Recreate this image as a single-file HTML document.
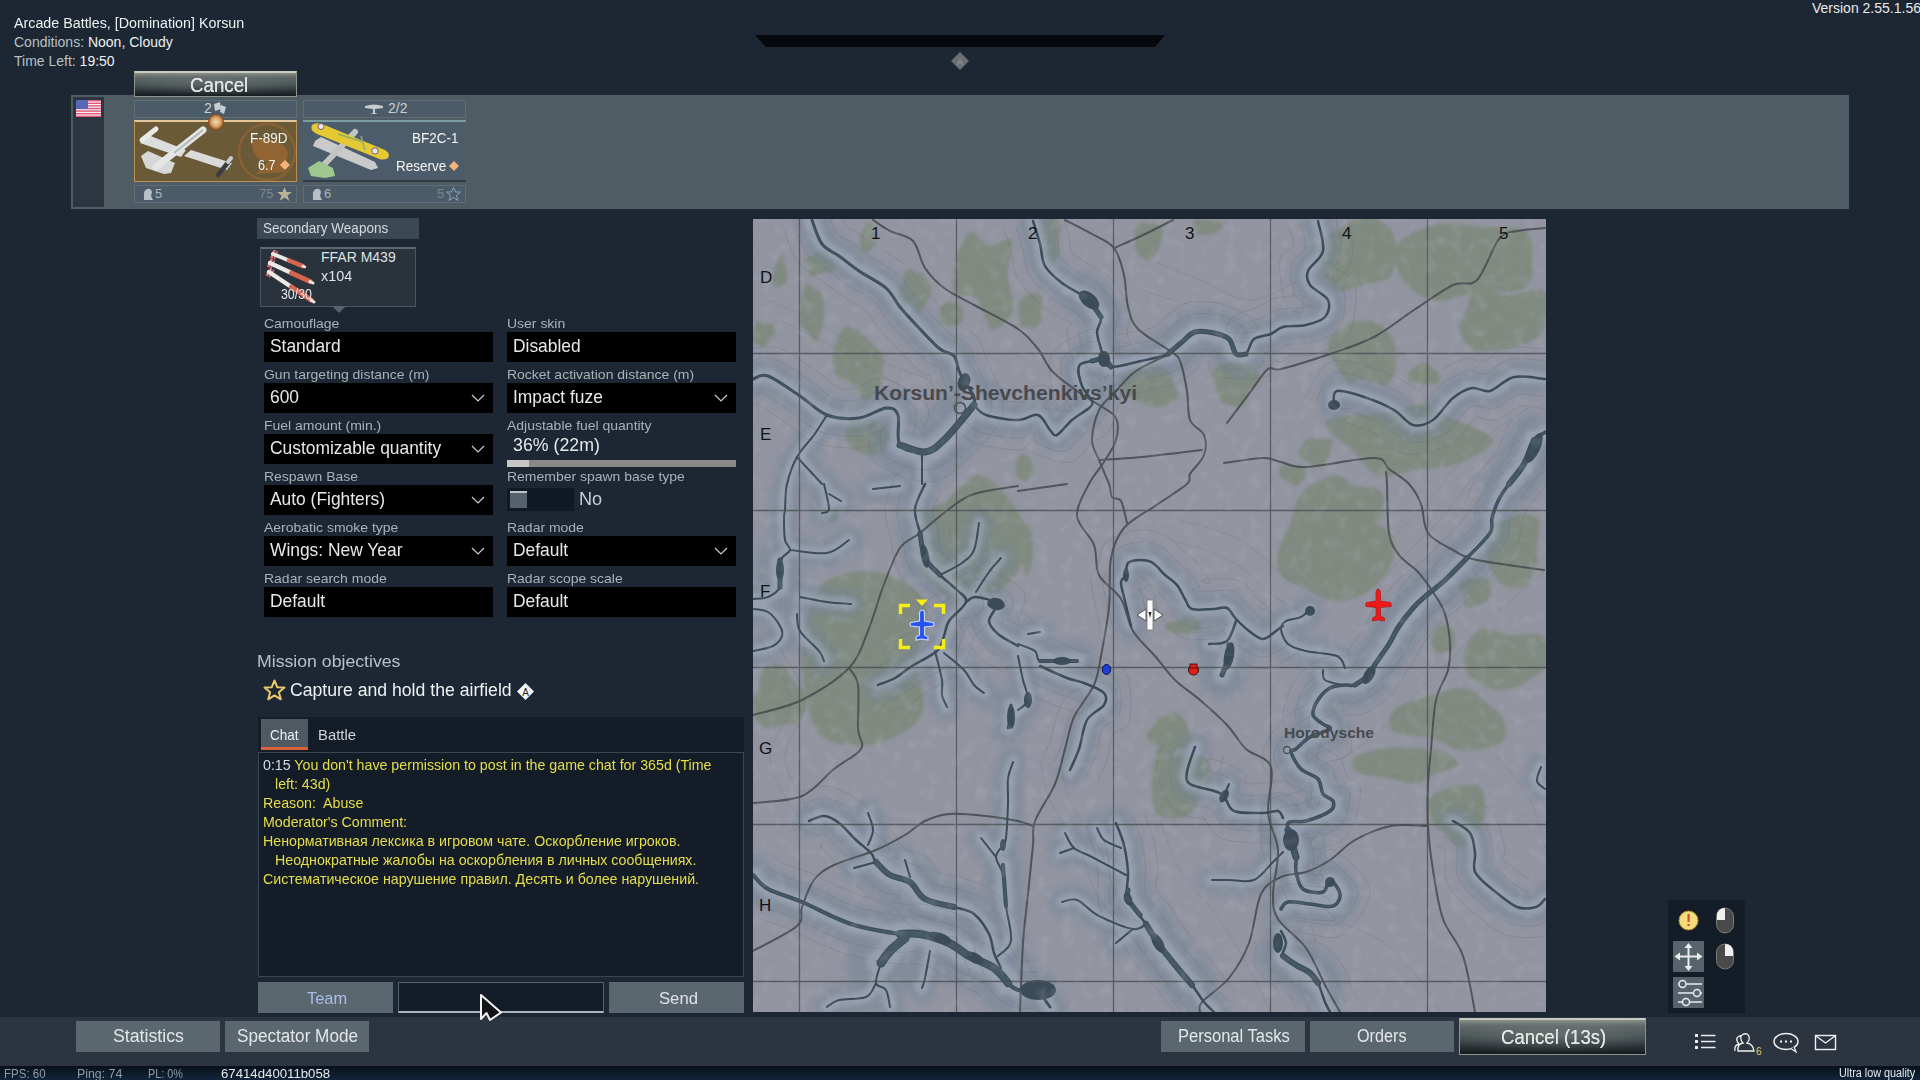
<!DOCTYPE html>
<html><head><meta charset="utf-8">
<style>
*{margin:0;padding:0;box-sizing:border-box}
html,body{width:1920px;height:1080px;overflow:hidden}
body{background:#1c2733;font-family:"Liberation Sans",sans-serif;position:relative;color:#fff}
.a{position:absolute}
.t{position:absolute;white-space:nowrap;transform-origin:0 0}
.lbl{color:#a9b2b9;font-size:13.5px}
.inp{position:absolute;background:#000;height:30px;width:229px}
.val{position:absolute;left:6px;top:3px;font-size:18.5px;color:#e6e8ea;white-space:nowrap;transform-origin:0 0;transform:scaleX(.94)}
.chev{position:absolute;right:8px;top:11px;width:14px;height:8px}
.btn{position:absolute;background:#5b676e;color:#e2e6e8;text-align:center;font-size:18px}
</style></head><body>

<!-- top info text -->
<div class="t" style="left:14px;top:15px;font-size:14px;color:#eef0f2;transform:scaleX(1.02)">Arcade Battles, [Domination] Korsun</div>
<div class="t" style="left:14px;top:34px;font-size:14px;color:#eef0f2"><span style="color:#b9c0c6">Conditions:</span> Noon, Cloudy</div>
<div class="t" style="left:14px;top:53px;font-size:14px;color:#eef0f2"><span style="color:#b9c0c6">Time Left:</span> 19:50</div>
<div class="t" style="left:1812px;top:0px;font-size:14px;color:#e8eaec">Version 2.55.1.56</div>

<!-- top trapezoid -->
<svg class="a" style="left:0;top:0" width="1920" height="80">
  <polygon points="755,35 1165,35 1155,47 766,47" fill="#05090d"/>
  <polygon points="960,52 969,61 960,70 951,61" fill="#6a6f73"/><text x="960" y="65" font-size="9" text-anchor="middle" fill="#9aa0a4" font-family="Liberation Sans">A</text>
</svg>

<!-- unit band -->
<div class="a" style="left:71px;top:95px;width:1778px;height:114px;background:#505c63"></div>
<div class="a" style="left:73px;top:97px;width:31px;height:110px;background:#2c3540"></div>


<!-- cancel top button -->
<div class="a" style="left:134px;top:71px;width:163px;height:26px;border:1px solid #8f958e;border-top:2px solid #c9ccbf;background:radial-gradient(ellipse 60% 55% at 50% 45%,rgba(150,156,152,.3),rgba(150,156,152,0) 100%),linear-gradient(180deg,#8a908a 0%,#5d6566 18%,#465053 50%,#283034 80%,#151b1f 100%)"></div>
<div class="t" style="left:190px;top:74px;font-size:19.5px;color:#e2e5e3;text-shadow:0 0 .6px #e2e5e3;transform:scaleX(.96)">Cancel</div>

<!-- card 1 -->
<div class="a" style="left:134px;top:100px;width:163px;height:18px;background:#4b5b68;border:1px solid #5e6d78"></div>
<div class="t" style="left:204px;top:100px;font-size:14px;color:#c8d0d6">2</div>
<svg class="a" style="left:212px;top:101px" width="16" height="14"><path d="M2 3 L8 1 L9 8 L3 10Z M9 4 L14 6 L12 13 L8 11Z" fill="#c7ccd0"/></svg>
<div class="a" style="left:134px;top:120px;width:163px;height:62px;background:#6b5a37;border:1px solid #b98f52;border-top:2px solid #e3c79a"></div>
<svg class="a" style="left:134px;top:120px" width="163" height="62">
  <circle cx="133" cy="32" r="28" fill="none" stroke="#8c6234" stroke-width="2.5" opacity=".9"/>
  <path d="M118 22 Q128 16 140 20 Q152 24 154 34 L150 52 L122 54 L134 42 Q118 40 118 22Z" fill="#9c6632" opacity=".8"/>
  <polygon points="7,36 14,31 41,43 37,53 30,54 12,48" fill="#d6d8d8"/>
  <polygon points="6,23 14,15 52,30 47,37" fill="#dcdedd"/>
  <polygon points="50,36 57,30 98,43 93,50" fill="#d9dbda"/>
  <path d="M69 10 L22 47" stroke="#e4e6e5" stroke-width="7" stroke-linecap="round"/>
  <path d="M69 10 L40 33" stroke="#b4b8b8" stroke-width="2"/>
  <path d="M8 20 L22 9" stroke="#e8eae9" stroke-width="5" stroke-linecap="round"/>
  <path d="M84 55 L96 40" stroke="#3a3e40" stroke-width="4.5" stroke-linecap="round"/>
  <path d="M94 42 L97 38" stroke="#c8cccc" stroke-width="4" stroke-linecap="round"/>
</svg>
<div class="a" style="left:208px;top:114px;width:16px;height:16px;border-radius:50%;background:radial-gradient(circle,#f3dcb2 0,#d8a770 40%,#c07a40 55%,#8a4a25 68%,transparent 72%)"></div>
<div class="t" style="left:250px;top:129px;font-size:15px;color:#f4f4f0;transform:scaleX(.9)">F-89D</div>
<div class="t" style="left:258px;top:157px;font-size:14px;color:#f4f4f0;transform:scaleX(.9)">6.7</div>
<svg class="a" style="left:280px;top:160px" width="10" height="10"><polygon points="5,0 10,5 5,10 0,5" fill="#f5b27a"/></svg>
<div class="a" style="left:134px;top:185px;width:163px;height:18px;background:#4b5b68;border:1px solid #5e6d78"></div>
<svg class="a" style="left:141px;top:187px" width="14" height="14"><path d="M3 13 L3 9 Q2 4 6 2 Q10 1 11 5 L10 9 L12 13Z" fill="#b6c0c6"/></svg>
<div class="t" style="left:155px;top:186px;font-size:13px;color:#aab6be">5</div>
<div class="t" style="left:259px;top:186px;font-size:13px;color:#7a8a94">75</div>
<svg class="a" style="left:277px;top:187px" width="15" height="14"><polygon points="7.5,0 9.5,5 15,5 10.5,8.5 12.5,14 7.5,10.5 2.5,14 4.5,8.5 0,5 5.5,5" fill="#b9b098"/></svg>

<!-- card 2 -->
<div class="a" style="left:303px;top:100px;width:163px;height:18px;background:#4b5b68;border:1px solid #5e6d78"></div>
<svg class="a" style="left:364px;top:101px" width="20" height="15"><path d="M1 5 Q10 2 19 5 L19 7 L11 8 L11 12 L14 13 L6 13 L9 12 L9 8 L1 7Z" fill="#c6ccd0"/></svg>
<div class="t" style="left:388px;top:100px;font-size:14px;color:#c8d0d6">2/2</div>
<div class="a" style="left:303px;top:120px;width:163px;height:62px;background:#4c5c6a;border-top:2px solid #7a9ea0;border-bottom:2px solid #2e3a44"></div>
<svg class="a" style="left:303px;top:120px" width="163" height="62">
  <polygon points="12,21 18,17 72,42 75,48 68,50 10,26" fill="#c9cbcb"/>
  <path d="M52 12 L16 50" stroke="#c2c4c2" stroke-width="6" stroke-linecap="round"/>
  <path d="M5 48 L16 41 L30 48 L32 56 L22 58 L8 56Z" fill="#9ec68e"/>
  <path d="M9 5 Q14 1 24 6 L82 30 Q88 34 85 38 Q80 41 74 38 L14 14 Q6 10 9 5Z" fill="#e4c932"/>
  <path d="M35 14 L60 22 M58 16 L62 30" stroke="#8fae6c" stroke-width="1.5"/>
  <circle cx="18" cy="6.5" r="3" fill="#e8e6ee" stroke="#7a5a70" stroke-width="1"/>
  <circle cx="72" cy="31" r="3.2" fill="#e8e6ee" stroke="#7a5a70" stroke-width="1"/>
</svg>
<div class="t" style="left:412px;top:129px;font-size:15px;color:#f4f4f0;transform:scaleX(.9)">BF2C-1</div>
<div class="t" style="left:396px;top:157px;font-size:15px;color:#f4f4f0;transform:scaleX(.9)">Reserve</div>
<svg class="a" style="left:449px;top:161px" width="10" height="10"><polygon points="5,0 10,5 5,10 0,5" fill="#f5b27a"/></svg>
<div class="a" style="left:303px;top:185px;width:163px;height:18px;background:#4b5b68;border:1px solid #5e6d78"></div>
<svg class="a" style="left:310px;top:187px" width="14" height="14"><path d="M3 13 L3 9 Q2 4 6 2 Q10 1 11 5 L10 9 L12 13Z" fill="#b6c0c6"/></svg>
<div class="t" style="left:324px;top:186px;font-size:13px;color:#aab6be">6</div>
<div class="t" style="left:437px;top:186px;font-size:13px;color:#7a8a94">5</div>
<svg class="a" style="left:446px;top:187px" width="15" height="14"><polygon points="7.5,0.5 9.5,5 14.5,5 10.5,8.5 12,13.5 7.5,10.5 3,13.5 4.5,8.5 0.5,5 5.5,5" fill="none" stroke="#8aa4c0" stroke-width="1"/></svg>

<!-- flag -->
<svg class="a" style="left:76px;top:100px" width="25" height="17">
  <rect width="25" height="17" fill="#f2f0f4"/>
  <rect y="0" width="25" height="1.4" fill="#e8557a"/><rect y="2.6" width="25" height="1.4" fill="#e8557a"/><rect y="5.2" width="25" height="1.4" fill="#e8557a"/><rect y="7.8" width="25" height="1.4" fill="#e8557a"/><rect y="10.4" width="25" height="1.4" fill="#e8557a"/><rect y="13" width="25" height="1.4" fill="#e8557a"/><rect y="15.6" width="25" height="1.4" fill="#e8557a"/>
  <rect width="12" height="9" fill="#5868b8"/>
</svg>


<!-- secondary weapons -->
<div class="a" style="left:257px;top:218px;width:162px;height:21px;background:#3c4955"></div>
<div class="t" style="left:263px;top:220px;font-size:14px;color:#d4dade;transform:scaleX(.965)">Secondary Weapons</div>
<div class="a" style="left:260px;top:247px;width:156px;height:60px;background:#2a323b;border:1px solid #4a5660;border-top:2px solid #5d6a74"></div>
<svg class="a" style="left:332px;top:306px" width="14" height="8"><polygon points="0,0 14,0 7,7" fill="#56636e"/></svg>
<svg class="a" style="left:262px;top:250px" width="56" height="56"><path d="M9.3 8.2 L12.7 -0.2" stroke="#e0707a" stroke-width="2.5"/><path d="M12.1 9.3 L15.5 1.0" stroke="#e0707a" stroke-width="1.5"/><path d="M11.0 4.0 L27.0 10.5" stroke="#ece8e6" stroke-width="4" stroke-linecap="round"/><path d="M27.0 10.5 L40.8 16.1" stroke="#d4664e" stroke-width="4.5" stroke-linecap="round"/><path d="M40.8 16.1 L43.0 17.0" stroke="#f0e8e0" stroke-width="2.5" stroke-linecap="round"/><path d="M6.1 17.1 L9.9 8.9" stroke="#e0707a" stroke-width="2.5"/><path d="M8.8 18.3 L12.6 10.2" stroke="#e0707a" stroke-width="1.5"/><path d="M8.0 13.0 L29.5 23.0" stroke="#ece8e6" stroke-width="4.5" stroke-linecap="round"/><path d="M29.5 23.0 L48.0 31.6" stroke="#d4664e" stroke-width="5.0" stroke-linecap="round"/><path d="M48.0 31.6 L51.0 33.0" stroke="#f0e8e0" stroke-width="3.0" stroke-linecap="round"/><path d="M4.5 25.7 L9.5 18.3" stroke="#e0707a" stroke-width="2.5"/><path d="M7.0 27.4 L12.0 19.9" stroke="#e0707a" stroke-width="1.5"/><path d="M7.0 22.0 L29.5 37.0" stroke="#ece8e6" stroke-width="4.5" stroke-linecap="round"/><path d="M29.5 37.0 L48.9 49.9" stroke="#d4664e" stroke-width="5.0" stroke-linecap="round"/><path d="M48.9 49.9 L52.0 52.0" stroke="#f0e8e0" stroke-width="3.0" stroke-linecap="round"/></svg>
<div class="t" style="left:321px;top:249px;font-size:14px;color:#dfe3e6;transform:scaleX(1.0)">FFAR M439</div>
<div class="t" style="left:321px;top:268px;font-size:14px;color:#dfe3e6;transform:scaleX(1.03)">x104</div>
<div class="t" style="left:281px;top:286px;font-size:14px;color:#e6e8ea;transform:scaleX(.88)">30/30</div>
<div class="t lbl" style="left:264px;top:316px;transform:scaleX(1.035)">Camouflage</div>
<div class="inp" style="left:264px;top:332px"><div class="val">Standard</div></div>
<div class="t lbl" style="left:507px;top:316px;transform:scaleX(1.035)">User skin</div>
<div class="inp" style="left:507px;top:332px"><div class="val">Disabled</div></div>
<div class="t lbl" style="left:264px;top:367px;transform:scaleX(1.035)">Gun targeting distance (m)</div>
<div class="inp" style="left:264px;top:383px"><div class="val">600</div><svg class="chev" viewBox="0 0 14 8"><path d="M1 1 L7 7 L13 1" fill="none" stroke="#c9ced2" stroke-width="1.2"/></svg></div>
<div class="t lbl" style="left:507px;top:367px;transform:scaleX(1.035)">Rocket activation distance (m)</div>
<div class="inp" style="left:507px;top:383px"><div class="val">Impact fuze</div><svg class="chev" viewBox="0 0 14 8"><path d="M1 1 L7 7 L13 1" fill="none" stroke="#c9ced2" stroke-width="1.2"/></svg></div>
<div class="t lbl" style="left:264px;top:418px;transform:scaleX(1.035)">Fuel amount (min.)</div>
<div class="inp" style="left:264px;top:434px"><div class="val">Customizable quantity</div><svg class="chev" viewBox="0 0 14 8"><path d="M1 1 L7 7 L13 1" fill="none" stroke="#c9ced2" stroke-width="1.2"/></svg></div>
<div class="t lbl" style="left:507px;top:418px;transform:scaleX(1.035)">Adjustable fuel quantity</div>
<div class="t lbl" style="left:264px;top:469px;transform:scaleX(1.035)">Respawn Base</div>
<div class="inp" style="left:264px;top:485px"><div class="val">Auto (Fighters)</div><svg class="chev" viewBox="0 0 14 8"><path d="M1 1 L7 7 L13 1" fill="none" stroke="#c9ced2" stroke-width="1.2"/></svg></div>
<div class="t lbl" style="left:507px;top:469px;transform:scaleX(1.035)">Remember spawn base type</div>
<div class="t lbl" style="left:264px;top:520px;transform:scaleX(1.035)">Aerobatic smoke type</div>
<div class="inp" style="left:264px;top:536px"><div class="val">Wings: New Year</div><svg class="chev" viewBox="0 0 14 8"><path d="M1 1 L7 7 L13 1" fill="none" stroke="#c9ced2" stroke-width="1.2"/></svg></div>
<div class="t lbl" style="left:507px;top:520px;transform:scaleX(1.035)">Radar mode</div>
<div class="inp" style="left:507px;top:536px"><div class="val">Default</div><svg class="chev" viewBox="0 0 14 8"><path d="M1 1 L7 7 L13 1" fill="none" stroke="#c9ced2" stroke-width="1.2"/></svg></div>
<div class="t lbl" style="left:264px;top:571px;transform:scaleX(1.035)">Radar search mode</div>
<div class="inp" style="left:264px;top:587px"><div class="val">Default</div></div>
<div class="t lbl" style="left:507px;top:571px;transform:scaleX(1.035)">Radar scope scale</div>
<div class="inp" style="left:507px;top:587px"><div class="val">Default</div></div>

<div class="t" style="left:513px;top:434px;font-size:18.5px;color:#e6e8ea;transform:scaleX(.96)">36% (22m)</div>
<div class="a" style="left:507px;top:460px;width:229px;height:7px;background:#8b8988"></div>
<div class="a" style="left:507px;top:460px;width:22px;height:7px;background:#c9c7c6"></div>
<div class="a" style="left:507px;top:488px;width:67px;height:23px;background:#111a24"></div>
<div class="a" style="left:510px;top:491px;width:17px;height:17px;background:#56626b;border-top:2px solid #b8c6cc"></div>
<div class="t" style="left:579px;top:488px;font-size:18.5px;color:#c9ced2;transform:scaleX(.98)">No</div>

<!-- mission objectives -->
<div class="t" style="left:257px;top:652px;font-size:17px;color:#b9c1c7;transform:scaleX(1.04)">Mission objectives</div>
<svg class="a" style="left:263px;top:679px" width="23" height="22"><polygon points="11.5,1.5 14.3,8.3 21.5,8.6 15.9,13.3 17.8,20.3 11.5,16.3 5.2,20.3 7.1,13.3 1.5,8.6 8.7,8.3" fill="none" stroke="#e7c76a" stroke-width="2" stroke-linejoin="round"/></svg>
<div class="t" style="left:290px;top:680px;font-size:18px;color:#eef0f2;transform:scaleX(.98)">Capture and hold the airfield</div>
<svg class="a" style="left:516px;top:682px" width="19" height="19"><polygon points="9.5,1 18,9.5 9.5,18 1,9.5" fill="#f4f6f8"/><text x="9.5" y="13.5" font-size="10" text-anchor="middle" fill="#222" font-family="Liberation Sans">A</text></svg>


<!-- MAP -->
<svg class="a" style="left:753px;top:219px" width="793" height="793" viewBox="753 219 793 793">
<defs><filter id="bl" x="-10%" y="-10%" width="120%" height="120%"><feGaussianBlur stdDeviation="4"/></filter><filter id="bl2" x="-10%" y="-10%" width="120%" height="120%"><feGaussianBlur stdDeviation="1.5"/></filter><filter id="bl3" x="-10%" y="-10%" width="120%" height="120%"><feGaussianBlur stdDeviation="2.5"/></filter></defs>
<rect x="753" y="219" width="793" height="793" fill="#9294a0"/>
<g fill="#808a80" filter="url(#bl2)">
<path d="M786.7 272.0 C786.9 275.2 787.2 280.1 786.3 282.6 C785.4 285.0 783.0 285.8 781.3 286.5 C779.5 287.2 777.3 288.2 775.8 286.7 C774.2 285.3 772.1 281.0 771.9 277.9 C771.7 274.8 773.6 270.6 774.4 268.0 C775.3 265.3 776.0 264.7 777.2 262.2 C778.4 259.7 780.3 252.9 781.7 253.1 C783.0 253.2 784.4 260.0 785.2 263.2 C786.1 266.4 786.6 268.8 786.7 272.0Z"/>
<path d="M824.5 312.0 C824.4 318.1 822.6 324.9 821.1 329.8 C819.5 334.8 817.1 341.4 815.0 341.9 C812.9 342.4 810.8 335.7 808.5 332.7 C806.1 329.7 802.0 329.2 800.7 323.8 C799.4 318.4 799.6 306.7 800.7 300.2 C801.7 293.6 804.7 286.4 807.0 284.6 C809.3 282.8 812.1 287.8 814.5 289.3 C816.9 290.7 819.9 289.3 821.5 293.1 C823.2 296.9 824.5 305.9 824.5 312.0Z"/>
<path d="M883.4 358.0 C885.0 364.7 884.4 376.6 881.4 383.8 C878.4 390.9 870.5 401.2 865.3 401.0 C860.1 400.7 855.3 387.3 850.2 382.4 C845.0 377.4 836.8 377.6 834.4 371.4 C831.9 365.2 833.2 352.6 835.3 345.1 C837.4 337.6 842.6 328.0 847.2 326.2 C851.8 324.4 858.8 331.4 862.9 334.4 C867.0 337.3 868.4 339.9 871.8 343.8 C875.2 347.8 881.8 351.3 883.4 358.0Z"/>
<path d="M835.5 263.0 C836.1 265.6 834.8 270.4 832.5 272.0 C830.3 273.7 825.6 272.3 822.0 272.9 C818.5 273.6 813.5 277.1 811.3 276.0 C809.1 274.9 809.8 269.4 808.9 266.5 C807.9 263.6 804.8 260.5 805.7 258.5 C806.6 256.6 811.6 256.2 814.4 254.7 C817.3 253.2 820.3 249.3 822.7 249.7 C825.1 250.0 826.7 254.4 828.9 256.6 C831.0 258.9 834.9 260.4 835.5 263.0Z"/>
<path d="M875.6 238.0 C875.5 240.4 875.2 243.1 874.2 245.3 C873.2 247.4 871.6 250.1 869.6 251.0 C867.7 252.0 864.1 252.8 862.5 251.2 C861.0 249.7 860.7 244.8 860.3 241.9 C859.9 239.1 859.9 236.5 860.4 234.1 C861.0 231.7 862.1 229.5 863.7 227.5 C865.3 225.6 868.2 221.9 870.0 222.4 C871.7 223.0 873.4 228.0 874.3 230.6 C875.2 233.2 875.6 235.6 875.6 238.0Z"/>
<path d="M931.3 290.0 C931.4 294.4 928.2 299.4 926.0 303.5 C923.8 307.6 920.7 314.5 918.0 314.6 C915.2 314.7 912.6 306.8 909.5 304.1 C906.3 301.4 900.5 301.9 899.2 298.4 C898.0 294.9 900.7 287.8 902.0 283.0 C903.3 278.3 904.5 271.4 907.0 269.7 C909.5 268.0 914.0 271.4 917.1 272.6 C920.2 273.9 923.1 274.3 925.4 277.2 C927.8 280.1 931.2 285.6 931.3 290.0Z"/>
<path d="M963.3 314.0 C963.5 316.8 963.3 321.1 961.4 322.9 C959.6 324.8 955.1 324.5 952.1 324.9 C949.0 325.3 945.3 326.3 943.1 325.1 C940.9 324.0 939.5 320.2 938.9 317.8 C938.3 315.3 938.6 312.8 939.4 310.4 C940.1 308.0 941.2 304.4 943.3 303.2 C945.4 301.9 949.3 302.4 952.1 302.8 C955.0 303.3 958.5 304.0 960.4 305.9 C962.3 307.7 963.1 311.2 963.3 314.0Z"/>
<path d="M775.4 334.0 C774.8 336.6 770.7 337.8 769.0 340.0 C767.2 342.2 766.8 346.4 764.9 347.2 C763.1 347.9 760.3 345.7 758.0 344.3 C755.8 343.0 752.2 341.4 751.5 339.0 C750.9 336.6 753.1 333.0 754.0 330.1 C754.9 327.2 755.2 322.4 757.0 321.4 C758.7 320.4 761.8 323.7 764.4 324.2 C767.0 324.7 770.7 322.7 772.6 324.4 C774.4 326.0 776.0 331.4 775.4 334.0Z"/>
<path d="M1007.8 274.0 C1008.0 285.7 1015.6 300.8 1012.9 310.0 C1010.3 319.3 998.1 331.4 992.2 329.6 C986.2 327.7 983.3 305.0 977.0 298.8 C970.7 292.6 957.8 299.2 954.5 292.3 C951.1 285.3 954.1 267.1 956.8 257.1 C959.5 247.1 965.4 233.9 970.8 232.1 C976.2 230.3 982.3 244.8 989.1 246.2 C995.9 247.5 1008.3 235.4 1011.4 240.0 C1014.6 244.6 1007.5 262.3 1007.8 274.0Z"/>
<path d="M1058.6 241.0 C1058.3 246.6 1059.3 252.5 1058.2 255.9 C1057.0 259.4 1053.9 260.8 1051.7 261.6 C1049.4 262.5 1046.4 263.5 1044.6 261.2 C1042.9 259.0 1042.1 253.2 1040.9 248.2 C1039.8 243.2 1037.2 236.1 1037.8 231.3 C1038.4 226.5 1041.9 222.4 1044.3 219.6 C1046.7 216.8 1049.5 214.0 1052.1 214.5 C1054.8 214.9 1059.1 217.9 1060.2 222.3 C1061.3 226.7 1059.0 235.4 1058.6 241.0Z"/>
<path d="M889.5 435.0 C890.0 438.9 889.4 444.5 886.6 447.9 C883.9 451.3 877.9 454.6 873.1 455.3 C868.3 456.0 862.2 454.2 857.7 452.0 C853.3 449.8 848.1 446.1 846.4 442.1 C844.7 438.2 845.7 432.3 847.5 428.2 C849.3 424.1 853.3 419.2 857.4 417.5 C861.5 415.9 868.1 417.0 872.4 418.2 C876.7 419.4 880.3 421.9 883.2 424.6 C886.0 427.4 888.9 431.1 889.5 435.0Z"/>
<path d="M1042.5 310.0 C1042.3 314.0 1042.7 318.1 1041.2 321.2 C1039.7 324.2 1036.5 327.3 1033.5 328.5 C1030.5 329.6 1025.3 330.3 1023.0 328.1 C1020.7 325.9 1020.3 319.4 1019.6 315.4 C1018.8 311.4 1017.7 307.3 1018.6 304.1 C1019.5 300.9 1022.5 298.1 1024.9 296.2 C1027.4 294.3 1030.4 292.7 1033.3 292.8 C1036.3 293.0 1041.1 294.3 1042.7 297.2 C1044.2 300.1 1042.8 306.0 1042.5 310.0Z"/>
<path d="M1161.2 240.0 C1160.6 243.8 1160.0 246.3 1158.4 249.8 C1156.7 253.2 1154.3 259.7 1151.2 260.7 C1148.2 261.8 1142.6 258.4 1139.8 255.9 C1137.1 253.4 1135.6 249.1 1134.6 245.5 C1133.7 241.9 1133.3 237.9 1134.2 234.4 C1135.1 230.8 1137.1 225.8 1139.8 224.1 C1142.5 222.3 1146.9 223.3 1150.5 223.8 C1154.2 224.3 1159.8 224.5 1161.5 227.2 C1163.3 229.9 1161.7 236.2 1161.2 240.0Z"/>
<path d="M1222.4 228.0 C1221.6 229.7 1218.3 231.0 1216.0 232.2 C1213.6 233.3 1211.4 234.6 1208.5 235.0 C1205.5 235.4 1200.6 235.5 1198.3 234.7 C1196.0 233.9 1195.8 231.6 1194.6 230.1 C1193.4 228.5 1190.7 227.0 1191.0 225.3 C1191.2 223.5 1193.2 220.3 1196.2 219.5 C1199.1 218.7 1204.7 220.0 1208.7 220.4 C1212.7 220.8 1218.0 220.7 1220.3 222.0 C1222.6 223.3 1223.1 226.3 1222.4 228.0Z"/>
<path d="M1261.1 378.0 C1261.0 382.0 1254.6 384.9 1251.4 389.6 C1248.2 394.2 1246.9 403.7 1242.1 405.7 C1237.3 407.8 1227.0 405.3 1222.6 401.9 C1218.2 398.5 1217.4 390.7 1215.8 385.4 C1214.3 380.0 1211.3 373.6 1213.3 369.7 C1215.2 365.9 1223.0 363.8 1227.5 362.2 C1232.0 360.6 1236.2 359.4 1240.3 360.0 C1244.5 360.5 1248.9 362.6 1252.4 365.7 C1255.8 368.7 1261.3 374.0 1261.1 378.0Z"/>
<path d="M1172.9 382.0 C1174.4 386.5 1180.2 393.8 1177.2 398.1 C1174.1 402.3 1162.2 407.3 1154.8 407.4 C1147.5 407.5 1138.6 402.1 1133.1 398.9 C1127.6 395.7 1123.6 392.0 1122.0 388.2 C1120.3 384.4 1121.1 379.4 1123.4 376.1 C1125.8 372.8 1131.2 370.3 1136.0 368.4 C1140.9 366.5 1147.3 364.4 1152.6 364.9 C1158.0 365.3 1164.7 368.1 1168.1 370.9 C1171.5 373.8 1171.4 377.5 1172.9 382.0Z"/>
<path d="M1034.6 470.0 C1034.4 472.9 1031.6 475.8 1030.2 477.6 C1028.8 479.5 1027.5 480.8 1026.1 481.1 C1024.7 481.5 1023.4 480.7 1021.8 479.8 C1020.2 478.8 1017.5 478.0 1016.5 475.4 C1015.6 472.8 1015.6 467.8 1016.1 464.4 C1016.7 460.9 1018.3 456.5 1020.0 454.9 C1021.7 453.3 1024.6 454.1 1026.5 455.0 C1028.4 455.9 1030.2 457.9 1031.6 460.4 C1032.9 462.9 1034.8 467.1 1034.6 470.0Z"/>
<path d="M1396.2 255.0 C1395.8 262.8 1394.3 272.7 1389.2 277.4 C1384.1 282.2 1374.1 281.4 1365.5 283.6 C1356.9 285.9 1344.7 293.6 1337.4 291.0 C1330.0 288.3 1324.3 276.0 1321.5 267.8 C1318.8 259.7 1317.4 248.7 1320.9 241.9 C1324.4 235.2 1334.7 231.5 1342.5 227.1 C1350.2 222.8 1359.3 215.3 1367.5 216.0 C1375.7 216.6 1386.7 224.3 1391.4 230.8 C1396.2 237.3 1396.6 247.2 1396.2 255.0Z"/>
<path d="M1533.1 260.0 C1532.9 269.6 1532.8 283.2 1523.7 288.6 C1514.7 293.9 1494.1 290.3 1479.0 292.3 C1463.9 294.3 1446.2 303.2 1433.1 300.5 C1420.0 297.8 1406.3 285.5 1400.5 276.0 C1394.7 266.5 1392.0 252.0 1398.2 243.5 C1404.4 234.9 1424.1 227.3 1437.6 224.5 C1451.2 221.7 1464.8 225.3 1479.4 226.4 C1493.9 227.5 1515.8 225.3 1524.8 230.9 C1533.7 236.5 1533.3 250.4 1533.1 260.0Z"/>
<path d="M1547.0 318.0 C1545.4 325.9 1541.6 333.9 1535.1 338.9 C1528.5 344.0 1517.7 346.4 1507.5 348.2 C1497.3 350.1 1481.9 353.4 1473.9 350.1 C1466.0 346.8 1460.9 335.2 1459.7 328.4 C1458.5 321.7 1464.2 316.2 1466.9 309.4 C1469.5 302.7 1469.2 290.4 1475.6 288.0 C1482.1 285.6 1494.2 294.5 1505.7 295.1 C1517.2 295.6 1537.8 287.5 1544.7 291.3 C1551.6 295.1 1548.7 310.1 1547.0 318.0Z"/>
<path d="M1397.3 356.0 C1397.5 364.9 1393.4 379.1 1387.8 383.2 C1382.2 387.4 1370.5 381.4 1363.8 381.1 C1357.1 380.8 1352.1 383.8 1347.5 381.3 C1342.9 378.8 1339.4 372.6 1336.1 366.1 C1332.9 359.6 1326.4 349.1 1327.9 342.4 C1329.4 335.6 1338.8 329.5 1345.0 325.8 C1351.3 322.1 1358.5 319.3 1365.4 320.0 C1372.4 320.7 1381.3 324.0 1386.6 330.0 C1391.9 336.0 1397.1 347.1 1397.3 356.0Z"/>
<path d="M1440.6 375.0 C1441.2 377.5 1439.4 381.9 1436.7 383.5 C1434.0 385.0 1428.0 384.1 1424.3 384.1 C1420.7 384.2 1417.7 384.5 1414.8 383.6 C1411.9 382.7 1408.0 380.7 1407.1 378.7 C1406.2 376.8 1408.1 373.8 1409.5 371.9 C1410.9 370.0 1413.0 368.9 1415.6 367.4 C1418.2 365.9 1422.2 362.7 1425.1 362.8 C1428.1 363.0 1430.7 366.5 1433.2 368.5 C1435.8 370.5 1440.0 372.5 1440.6 375.0Z"/>
<path d="M1492.9 440.0 C1493.7 447.4 1470.4 458.5 1458.4 463.4 C1446.3 468.2 1433.9 467.4 1420.6 469.3 C1407.3 471.2 1389.4 477.7 1378.5 474.9 C1367.5 472.1 1363.5 461.4 1354.8 452.5 C1346.0 443.6 1320.8 427.9 1325.9 421.2 C1331.0 414.5 1369.2 415.0 1385.2 412.2 C1401.3 409.4 1411.1 403.1 1422.5 404.2 C1433.9 405.4 1441.9 413.1 1453.6 419.1 C1465.3 425.0 1492.1 432.6 1492.9 440.0Z"/>
<path d="M1330.4 450.0 C1329.7 453.1 1330.2 455.3 1328.4 458.1 C1326.7 460.9 1323.4 466.2 1319.8 466.8 C1316.3 467.5 1310.8 463.9 1307.2 461.9 C1303.6 459.9 1299.0 457.7 1298.2 455.0 C1297.4 452.4 1300.8 448.9 1302.3 446.1 C1303.8 443.3 1304.7 439.5 1307.4 438.4 C1310.1 437.3 1314.2 439.5 1318.4 439.6 C1322.5 439.8 1330.3 437.6 1332.3 439.4 C1334.3 441.1 1331.0 446.9 1330.4 450.0Z"/>
<path d="M1306.7 474.0 C1306.4 476.4 1304.3 478.6 1302.5 480.6 C1300.6 482.7 1298.0 486.2 1295.6 486.2 C1293.2 486.3 1290.5 482.4 1288.1 481.0 C1285.8 479.6 1282.7 479.4 1281.2 477.6 C1279.8 475.7 1278.6 472.2 1279.4 469.9 C1280.1 467.5 1283.2 464.2 1285.7 463.5 C1288.3 462.8 1291.6 465.3 1294.7 465.8 C1297.9 466.2 1302.5 464.6 1304.5 466.0 C1306.5 467.4 1307.0 471.6 1306.7 474.0Z"/>
<path d="M1395.5 540.0 C1398.4 551.2 1389.6 570.8 1380.8 580.9 C1372.0 591.1 1355.4 599.8 1342.7 600.8 C1330.1 601.9 1315.6 593.9 1304.8 587.1 C1294.0 580.2 1280.4 570.1 1277.8 559.7 C1275.3 549.3 1285.3 536.1 1289.6 524.6 C1293.9 513.1 1294.6 498.8 1303.6 490.7 C1312.5 482.7 1333.3 472.5 1343.2 476.4 C1353.1 480.3 1354.4 503.3 1363.1 513.9 C1371.8 524.5 1392.5 528.8 1395.5 540.0Z"/>
<path d="M1327.3 560.0 C1327.7 567.2 1324.0 578.9 1319.9 582.8 C1315.9 586.7 1308.0 583.4 1303.0 583.4 C1298.1 583.4 1294.5 584.9 1290.3 582.8 C1286.2 580.8 1280.0 576.3 1278.2 570.8 C1276.4 565.3 1277.7 555.8 1279.6 549.9 C1281.5 544.0 1285.8 537.3 1289.7 535.6 C1293.5 533.8 1298.0 538.6 1302.7 539.3 C1307.3 540.0 1313.6 536.3 1317.7 539.8 C1321.8 543.2 1326.9 552.8 1327.3 560.0Z"/>
<path d="M1383.4 510.0 C1382.7 515.5 1380.4 520.4 1377.2 524.5 C1374.0 528.5 1369.7 532.2 1364.3 534.2 C1358.9 536.2 1349.0 539.2 1344.7 536.5 C1340.4 533.7 1339.7 523.6 1338.5 517.8 C1337.2 512.1 1336.1 507.0 1337.4 501.8 C1338.7 496.5 1341.9 488.8 1346.4 486.4 C1350.8 483.9 1358.2 486.1 1364.1 487.0 C1370.0 487.9 1378.5 487.9 1381.7 491.8 C1385.0 495.6 1384.2 504.5 1383.4 510.0Z"/>
<path d="M1490.7 591.0 C1490.5 594.4 1489.5 598.4 1487.3 600.7 C1485.2 603.1 1481.2 604.1 1477.6 605.0 C1474.0 605.9 1468.0 608.0 1465.6 606.3 C1463.1 604.7 1464.3 598.7 1462.9 595.1 C1461.6 591.6 1456.8 587.8 1457.5 585.0 C1458.2 582.2 1463.8 579.5 1467.1 578.2 C1470.5 576.9 1474.0 576.9 1477.6 577.3 C1481.1 577.7 1486.3 578.1 1488.5 580.3 C1490.7 582.6 1490.9 587.6 1490.7 591.0Z"/>
<path d="M1537.0 545.0 C1536.6 552.5 1538.5 559.1 1536.3 566.0 C1534.0 572.9 1529.1 583.7 1523.4 586.6 C1517.6 589.5 1507.9 587.9 1501.7 583.6 C1495.6 579.3 1489.3 569.8 1486.6 560.7 C1483.9 551.5 1482.0 535.7 1485.4 528.8 C1488.8 521.8 1501.0 521.5 1507.1 519.0 C1513.1 516.5 1516.7 513.5 1522.0 513.8 C1527.3 514.1 1536.5 515.6 1539.0 520.8 C1541.5 526.0 1537.5 537.5 1537.0 545.0Z"/>
<path d="M1454.7 640.0 C1454.7 642.9 1454.1 646.9 1452.6 648.8 C1451.1 650.8 1448.2 651.2 1445.7 652.0 C1443.2 652.7 1440.1 654.4 1437.8 653.3 C1435.4 652.2 1432.5 648.5 1431.7 645.5 C1430.9 642.5 1431.9 638.1 1432.9 635.0 C1434.0 632.0 1435.8 629.0 1438.0 627.2 C1440.2 625.4 1443.9 623.4 1446.3 624.1 C1448.7 624.7 1451.1 628.5 1452.6 631.2 C1454.0 633.8 1454.7 637.1 1454.7 640.0Z"/>
<path d="M1550.1 662.0 C1548.0 669.3 1536.2 675.2 1529.4 679.8 C1522.5 684.4 1516.4 688.5 1509.1 689.6 C1501.7 690.8 1492.3 689.6 1485.3 686.7 C1478.2 683.9 1470.2 678.6 1466.7 672.6 C1463.3 666.6 1462.5 657.9 1464.7 650.8 C1466.9 643.6 1472.5 632.5 1479.9 629.8 C1487.3 627.1 1498.7 633.7 1509.0 634.7 C1519.3 635.6 1535.0 631.2 1541.9 635.7 C1548.7 640.3 1552.2 654.7 1550.1 662.0Z"/>
<path d="M1503.7 720.0 C1505.9 726.2 1508.9 736.3 1502.2 741.4 C1495.5 746.5 1475.0 751.2 1463.4 750.7 C1451.9 750.1 1444.6 741.4 1432.8 738.2 C1421.0 734.9 1399.0 736.2 1392.7 731.4 C1386.4 726.5 1389.0 714.7 1394.8 709.0 C1400.6 703.3 1415.9 700.5 1427.4 697.0 C1438.9 693.6 1453.6 687.0 1463.8 688.2 C1474.1 689.4 1482.2 699.1 1488.9 704.4 C1495.5 709.7 1501.5 713.8 1503.7 720.0Z"/>
<path d="M917.1 660.0 C916.6 678.8 928.6 700.9 921.6 714.9 C914.7 728.9 892.1 740.2 875.5 743.7 C858.8 747.3 833.8 746.4 821.8 736.3 C809.8 726.3 806.4 699.9 803.5 683.3 C800.6 666.8 801.4 653.6 804.5 637.1 C807.6 620.6 810.3 595.3 822.2 584.4 C834.1 573.5 859.0 569.0 876.2 571.9 C893.3 574.8 918.2 587.3 925.1 602.0 C931.9 616.7 917.7 641.2 917.1 660.0Z"/>
<path d="M805.8 697.0 C806.9 703.5 804.0 715.3 800.1 720.0 C796.1 724.6 788.0 723.7 782.0 724.9 C775.9 726.0 769.1 729.7 764.0 727.1 C758.9 724.4 752.5 715.4 751.5 708.9 C750.6 702.4 756.1 694.9 758.2 688.1 C760.4 681.2 760.3 671.5 764.4 667.7 C768.4 664.0 777.6 663.4 782.5 665.6 C787.3 667.9 789.4 675.9 793.3 681.1 C797.2 686.3 804.7 690.5 805.8 697.0Z"/>
<path d="M1028.3 540.0 C1028.5 553.0 1019.7 568.9 1011.5 579.4 C1003.3 589.9 990.8 600.9 979.1 603.1 C967.4 605.3 951.6 600.0 941.3 592.9 C931.1 585.8 921.5 572.9 917.6 560.7 C913.7 548.4 913.0 529.7 918.1 519.5 C923.1 509.4 937.7 507.1 947.9 499.7 C958.2 492.3 968.9 474.8 979.4 475.1 C989.8 475.4 1002.5 490.6 1010.7 501.4 C1018.8 512.2 1028.2 527.0 1028.3 540.0Z"/>
<path d="M836.8 512.0 C836.8 513.8 838.2 516.0 837.2 517.5 C836.2 519.0 833.0 521.1 831.0 521.0 C829.0 521.0 827.4 518.3 825.1 517.4 C822.9 516.4 818.3 516.8 817.3 515.4 C816.3 514.0 817.8 510.6 819.1 509.1 C820.4 507.6 823.0 507.3 824.9 506.4 C826.9 505.4 828.9 503.3 830.9 503.4 C832.9 503.4 835.9 505.3 836.9 506.7 C837.9 508.1 836.7 510.2 836.8 512.0Z"/>
<path d="M1201.1 626.0 C1200.6 627.9 1201.0 629.9 1198.6 631.2 C1196.1 632.5 1190.6 633.5 1186.4 633.7 C1182.3 634.0 1177.1 633.3 1173.7 632.5 C1170.2 631.6 1166.9 630.0 1165.8 628.5 C1164.6 627.0 1165.1 624.9 1166.8 623.6 C1168.4 622.3 1172.2 621.7 1175.5 620.8 C1178.8 619.8 1182.2 618.0 1186.6 617.8 C1191.0 617.7 1199.3 618.4 1201.7 619.7 C1204.1 621.1 1201.6 624.1 1201.1 626.0Z"/>
<path d="M1188.9 730.0 C1190.1 733.8 1194.2 740.5 1192.1 743.8 C1190.0 747.1 1181.6 749.5 1176.3 749.9 C1171.0 750.4 1165.3 748.5 1160.4 746.5 C1155.4 744.4 1147.4 741.2 1146.5 737.6 C1145.5 734.0 1151.9 728.4 1154.5 724.8 C1157.2 721.2 1158.6 718.2 1162.2 716.1 C1165.7 714.0 1172.0 711.5 1175.8 712.3 C1179.7 713.1 1183.0 718.0 1185.2 720.9 C1187.4 723.9 1187.8 726.2 1188.9 730.0Z"/>
<path d="M1211.0 779.0 C1210.1 785.1 1204.5 789.0 1200.5 795.2 C1196.5 801.4 1194.1 813.0 1187.0 816.3 C1179.9 819.6 1163.7 819.6 1157.9 815.0 C1152.1 810.4 1152.9 796.1 1152.1 788.6 C1151.3 781.0 1151.7 776.9 1153.0 769.7 C1154.3 762.6 1154.5 748.3 1159.7 745.9 C1164.9 743.5 1176.8 753.2 1184.4 755.3 C1192.1 757.5 1201.4 754.7 1205.8 758.6 C1210.2 762.6 1211.8 772.9 1211.0 779.0Z"/>
<path d="M1457.9 765.0 C1456.0 768.7 1441.4 771.0 1434.4 774.0 C1427.3 777.1 1423.3 782.3 1415.8 783.0 C1408.2 783.8 1398.7 780.1 1389.1 778.4 C1379.5 776.6 1363.8 776.0 1358.1 772.4 C1352.5 768.9 1350.9 761.2 1355.3 757.2 C1359.7 753.1 1374.3 749.8 1384.3 748.2 C1394.3 746.7 1405.1 747.3 1415.3 748.0 C1425.6 748.6 1438.7 749.2 1445.8 752.0 C1452.9 754.9 1459.8 761.3 1457.9 765.0Z"/>
<path d="M1484.7 813.0 C1483.9 820.8 1479.3 828.0 1475.4 833.9 C1471.4 839.8 1465.7 848.1 1460.8 848.3 C1456.0 848.4 1450.7 839.1 1446.2 834.9 C1441.6 830.8 1436.6 829.2 1433.7 823.4 C1430.7 817.6 1426.6 805.9 1428.5 800.1 C1430.4 794.4 1440.0 791.5 1445.2 789.0 C1450.4 786.6 1454.0 785.9 1459.8 785.6 C1465.6 785.3 1475.8 782.5 1480.0 787.1 C1484.2 791.7 1485.5 805.2 1484.7 813.0Z"/>
<path d="M1033.1 545.0 C1033.3 550.5 1033.0 558.0 1031.9 563.1 C1030.8 568.2 1028.4 575.8 1026.7 575.6 C1025.1 575.3 1023.3 565.5 1021.9 561.7 C1020.5 557.9 1018.6 556.7 1018.2 552.8 C1017.7 548.9 1018.4 542.4 1018.9 538.1 C1019.5 533.8 1020.5 529.2 1021.7 527.0 C1022.9 524.7 1024.6 524.0 1026.2 524.4 C1027.7 524.9 1029.6 526.4 1030.8 529.8 C1032.0 533.2 1032.9 539.5 1033.1 545.0Z"/>
</g>
<g fill="none" stroke="#6f8296" stroke-linecap="round" stroke-linejoin="round" filter="url(#bl)" opacity="0.45">
<path d="M812.0 220.0 C813.7 224.0 817.5 238.0 822.0 244.0 C826.5 250.0 832.8 251.5 839.0 256.0 C845.2 260.5 851.2 265.7 859.0 271.0 C866.8 276.3 879.2 282.0 886.0 288.0 C892.8 294.0 894.3 300.2 900.0 307.0 C905.7 313.8 913.3 322.0 920.0 329.0 C926.7 336.0 934.3 344.5 940.0 349.0 C945.7 353.5 950.8 352.3 954.0 356.0 C957.2 359.7 957.3 366.8 959.0 371.0 C960.7 375.2 961.5 375.3 964.0 381.0 C966.5 386.7 977.3 395.2 974.0 405.0 C970.7 414.8 952.2 432.2 944.0 440.0 C935.8 447.8 932.3 451.2 925.0 452.0 C917.7 452.8 904.5 451.2 900.0 445.0 C895.5 438.8 900.3 421.2 898.0 415.0 C895.7 408.8 892.5 407.5 886.0 408.0 C879.5 408.5 868.8 416.8 859.0 418.0 C849.2 419.2 836.8 418.7 827.0 415.0 C817.2 411.3 809.8 402.5 800.0 396.0 C790.2 389.5 775.8 378.8 768.0 376.0 C760.2 373.2 755.5 378.5 753.0 379.0" stroke-width="34"/>
<path d="M974.0 405.0 C976.0 406.7 978.7 412.5 986.0 415.0 C993.3 417.5 1009.3 420.0 1018.0 420.0 C1026.7 420.0 1032.7 413.3 1038.0 415.0 C1043.3 416.7 1046.8 426.7 1050.0 430.0 C1053.2 433.3 1053.3 436.7 1057.0 435.0 C1060.7 433.3 1066.7 424.5 1072.0 420.0 C1077.3 415.5 1085.7 411.2 1089.0 408.0 C1092.3 404.8 1093.2 404.7 1092.0 401.0 C1090.8 397.3 1084.2 391.8 1082.0 386.0 C1079.8 380.2 1077.3 370.2 1079.0 366.0 C1080.7 361.8 1087.8 362.2 1092.0 361.0 C1096.2 359.8 1102.0 359.3 1104.0 359.0" stroke-width="31.0"/>
<path d="M827.0 415.0 C824.8 418.3 819.0 428.0 814.0 435.0 C809.0 442.0 801.5 448.8 797.0 457.0 C792.5 465.2 789.0 475.3 787.0 484.0 C785.0 492.7 785.5 503.3 785.0 509.0 C784.5 514.7 784.0 512.8 784.0 518.0 C784.0 523.2 784.0 534.7 785.0 540.0 C786.0 545.3 790.5 547.0 790.0 550.0 C789.5 553.0 783.7 554.7 782.0 558.0 C780.3 561.3 780.3 565.2 780.0 570.0 C779.7 574.8 782.0 582.5 780.0 587.0 C778.0 591.5 772.5 595.0 768.0 597.0 C763.5 599.0 755.5 598.7 753.0 599.0" stroke-width="28"/>
<path d="M797.0 457.0 C801.2 461.5 817.8 479.5 822.0 484.0" stroke-width="28"/>
<path d="M922.0 452.0 C922.0 457.3 922.0 478.7 922.0 484.0" stroke-width="28"/>
<path d="M1033.0 221.0 C1034.2 224.8 1038.0 236.5 1040.0 244.0 C1042.0 251.5 1041.3 259.5 1045.0 266.0 C1048.7 272.5 1055.8 278.2 1062.0 283.0 C1068.2 287.8 1077.5 292.2 1082.0 295.0 C1086.5 297.8 1085.8 296.3 1089.0 300.0 C1092.2 303.7 1099.7 311.7 1101.0 317.0 C1102.3 322.3 1097.0 326.7 1097.0 332.0 C1097.0 337.3 1099.8 344.5 1101.0 349.0 C1102.2 353.5 1102.3 356.0 1104.0 359.0 C1105.7 362.0 1104.8 366.7 1111.0 367.0 C1117.2 367.3 1131.5 363.2 1141.0 361.0 C1150.5 358.8 1161.2 357.2 1168.0 354.0 C1174.8 350.8 1177.5 345.7 1182.0 342.0 C1186.5 338.3 1189.7 333.5 1195.0 332.0 C1200.3 330.5 1208.3 331.8 1214.0 333.0 C1219.7 334.2 1225.3 335.5 1229.0 339.0 C1232.7 342.5 1233.2 351.5 1236.0 354.0 C1238.8 356.5 1243.0 356.5 1246.0 354.0 C1249.0 351.5 1249.8 342.3 1254.0 339.0 C1258.2 335.7 1266.2 336.0 1271.0 334.0 C1275.8 332.0 1277.2 328.5 1283.0 327.0 C1288.8 325.5 1299.0 326.7 1306.0 325.0 C1313.0 323.3 1321.3 321.2 1325.0 317.0 C1328.7 312.8 1330.5 305.3 1328.0 300.0 C1325.5 294.7 1313.3 289.8 1310.0 285.0 C1306.7 280.2 1305.8 276.7 1308.0 271.0 C1310.2 265.3 1321.3 259.3 1323.0 251.0 C1324.7 242.7 1318.8 226.0 1318.0 221.0" stroke-width="31.0"/>
<path d="M1334.0 405.0 C1334.5 402.7 1331.5 392.2 1337.0 391.0 C1342.5 389.8 1357.5 394.8 1367.0 398.0 C1376.5 401.2 1386.3 405.5 1394.0 410.0 C1401.7 414.5 1406.5 423.3 1413.0 425.0 C1419.5 426.7 1426.3 424.5 1433.0 420.0 C1439.7 415.5 1446.5 403.3 1453.0 398.0 C1459.5 392.7 1465.8 389.2 1472.0 388.0 C1478.2 386.8 1483.0 392.8 1490.0 391.0 C1497.0 389.2 1504.8 379.0 1514.0 377.0 C1523.2 375.0 1539.8 378.7 1545.0 379.0" stroke-width="31.0"/>
<path d="M1546.0 432.0 C1544.0 433.3 1537.7 434.7 1534.0 440.0 C1530.3 445.3 1528.2 456.7 1524.0 464.0 C1519.8 471.3 1513.2 478.2 1509.0 484.0 C1504.8 489.8 1501.8 493.3 1499.0 499.0 C1496.2 504.7 1493.5 512.3 1492.0 518.0 C1490.5 523.7 1494.2 526.3 1490.0 533.0 C1485.8 539.7 1474.8 549.8 1467.0 558.0 C1459.2 566.2 1449.5 576.0 1443.0 582.0 C1436.5 588.0 1432.8 589.8 1428.0 594.0 C1423.2 598.2 1418.8 601.7 1414.0 607.0 C1409.2 612.3 1403.2 619.8 1399.0 626.0 C1394.8 632.2 1393.2 637.3 1389.0 644.0 C1384.8 650.7 1377.3 660.8 1374.0 666.0 C1370.7 671.2 1372.2 671.8 1369.0 675.0 C1365.8 678.2 1359.0 683.3 1355.0 685.0 C1351.0 686.7 1349.2 684.5 1345.0 685.0 C1340.8 685.5 1334.5 685.5 1330.0 688.0 C1325.5 690.5 1320.8 695.5 1318.0 700.0 C1315.2 704.5 1312.2 711.0 1313.0 715.0 C1313.8 719.0 1320.2 721.7 1323.0 724.0 C1325.8 726.3 1332.2 726.8 1330.0 729.0 C1327.8 731.2 1315.7 733.7 1310.0 737.0 C1304.3 740.3 1299.2 746.5 1296.0 749.0 C1292.8 751.5 1290.2 748.7 1291.0 752.0 C1291.8 755.3 1296.5 764.5 1301.0 769.0 C1305.5 773.5 1314.3 774.8 1318.0 779.0 C1321.7 783.2 1320.5 790.3 1323.0 794.0 C1325.5 797.7 1331.8 798.2 1333.0 801.0 C1334.2 803.8 1334.5 807.7 1330.0 811.0 C1325.5 814.3 1313.0 819.0 1306.0 821.0 C1299.0 823.0 1290.5 819.8 1288.0 823.0 C1285.5 826.2 1289.7 834.3 1291.0 840.0 C1292.3 845.7 1295.2 851.7 1296.0 857.0 C1296.8 862.3 1294.8 866.7 1296.0 872.0 C1297.2 877.3 1298.5 885.7 1303.0 889.0 C1307.5 892.3 1318.5 893.5 1323.0 892.0 C1327.5 890.5 1327.2 879.7 1330.0 880.0 C1332.8 880.3 1339.5 889.7 1340.0 894.0 C1340.5 898.3 1338.0 904.3 1333.0 906.0 C1328.0 907.7 1317.5 904.7 1310.0 904.0 C1302.5 903.3 1292.8 901.2 1288.0 902.0 C1283.2 902.8 1282.2 907.8 1281.0 909.0" stroke-width="37.0"/>
<path d="M1345.0 668.0 C1343.7 666.0 1343.5 658.8 1337.0 656.0 C1330.5 653.2 1314.2 653.0 1306.0 651.0 C1297.8 649.0 1292.2 647.7 1288.0 644.0 C1283.8 640.3 1281.3 632.8 1281.0 629.0 C1280.7 625.2 1282.7 623.0 1286.0 621.0 C1289.3 619.0 1297.0 619.0 1301.0 617.0 C1305.0 615.0 1308.5 610.3 1310.0 609.0" stroke-width="28"/>
<path d="M1323.0 670.0 C1323.3 671.7 1321.8 677.5 1325.0 680.0 C1328.2 682.5 1339.2 684.2 1342.0 685.0" stroke-width="28"/>
<path d="M1281.0 931.0 C1281.8 933.0 1285.7 938.8 1286.0 943.0 C1286.3 947.2 1281.3 952.3 1283.0 956.0 C1284.7 959.7 1291.5 962.2 1296.0 965.0 C1300.5 967.8 1306.3 970.0 1310.0 973.0 C1313.7 976.0 1315.5 978.2 1318.0 983.0 C1320.5 987.8 1323.0 997.2 1325.0 1002.0 C1327.0 1006.8 1329.2 1010.3 1330.0 1012.0" stroke-width="31.0"/>
<path d="M1453.0 821.0 C1455.8 823.0 1466.3 827.7 1470.0 833.0 C1473.7 838.3 1474.2 846.5 1475.0 853.0 C1475.8 859.5 1472.2 866.0 1475.0 872.0 C1477.8 878.0 1485.0 883.2 1492.0 889.0 C1499.0 894.8 1509.7 904.0 1517.0 907.0 C1524.3 910.0 1531.3 908.3 1536.0 907.0 C1540.7 905.7 1543.5 900.3 1545.0 899.0" stroke-width="31.0"/>
<path d="M1541.0 767.0 C1540.3 769.3 1536.3 777.3 1537.0 781.0 C1537.7 784.7 1543.7 787.7 1545.0 789.0" stroke-width="28"/>
<path d="M1131.0 626.0 C1129.8 621.2 1125.7 604.3 1124.0 597.0 C1122.3 589.7 1120.7 585.7 1121.0 582.0 C1121.3 578.3 1124.8 578.2 1126.0 575.0 C1127.2 571.8 1125.5 565.5 1128.0 563.0 C1130.5 560.5 1136.8 560.0 1141.0 560.0 C1145.2 560.0 1149.0 560.5 1153.0 563.0 C1157.0 565.5 1161.0 571.3 1165.0 575.0 C1169.0 578.7 1173.7 581.0 1177.0 585.0 C1180.3 589.0 1182.5 595.0 1185.0 599.0 C1187.5 603.0 1187.2 607.3 1192.0 609.0 C1196.8 610.7 1208.2 609.2 1214.0 609.0 C1219.8 608.8 1223.3 606.3 1227.0 608.0 C1230.7 609.7 1232.3 615.2 1236.0 619.0 C1239.7 622.8 1244.5 627.7 1249.0 631.0 C1253.5 634.3 1258.5 639.0 1263.0 639.0 C1267.5 639.0 1272.7 633.2 1276.0 631.0 C1279.3 628.8 1281.8 626.8 1283.0 626.0" stroke-width="31.0"/>
<path d="M1236.0 621.0 C1234.5 624.3 1231.5 637.2 1227.0 641.0 C1222.5 644.8 1212.0 643.5 1209.0 644.0" stroke-width="31.0"/>
<path d="M1229.0 645.0 C1229.0 646.8 1230.2 651.0 1229.0 656.0 C1227.8 661.0 1223.2 671.8 1222.0 675.0" stroke-width="34"/>
<path d="M1028.0 634.0 C1030.0 633.7 1038.0 632.3 1040.0 632.0" stroke-width="28"/>
<path d="M1018.0 644.0 C1020.8 645.2 1031.3 648.2 1035.0 651.0 C1038.7 653.8 1035.5 659.3 1040.0 661.0 C1044.5 662.7 1055.8 661.0 1062.0 661.0 C1068.2 661.0 1074.5 661.0 1077.0 661.0" stroke-width="28"/>
<path d="M1040.0 666.0 C1044.5 668.0 1059.7 675.2 1067.0 678.0 C1074.3 680.8 1077.8 680.5 1084.0 683.0 C1090.2 685.5 1100.7 689.3 1104.0 693.0 C1107.3 696.7 1106.8 700.5 1104.0 705.0 C1101.2 709.5 1091.2 712.7 1087.0 720.0 C1082.8 727.3 1081.8 740.7 1079.0 749.0 C1076.2 757.3 1071.5 766.5 1070.0 770.0" stroke-width="31.0"/>
<path d="M1018.0 656.0 C1018.8 660.0 1021.3 672.7 1023.0 680.0 C1024.7 687.3 1028.8 695.0 1028.0 700.0 C1027.2 705.0 1019.7 708.3 1018.0 710.0" stroke-width="28"/>
<path d="M790.0 550.0 C796.2 550.5 817.2 554.7 827.0 553.0 C836.8 551.3 845.3 542.2 849.0 540.0" stroke-width="28"/>
<path d="M824.0 484.0 C824.8 488.2 829.3 504.2 829.0 509.0 C828.7 513.8 823.2 512.3 822.0 513.0" stroke-width="28"/>
<path d="M829.0 494.0 C831.0 495.2 839.0 499.8 841.0 501.0" stroke-width="28"/>
<path d="M873.0 489.0 C877.5 488.5 895.5 486.5 900.0 486.0" stroke-width="28"/>
<path d="M925.0 484.0 C923.3 488.2 915.8 500.8 915.0 509.0 C914.2 517.2 918.3 524.8 920.0 533.0 C921.7 541.2 921.7 551.0 925.0 558.0 C928.3 565.0 934.7 569.7 940.0 575.0 C945.3 580.3 952.7 585.5 957.0 590.0 C961.3 594.5 967.3 596.8 966.0 602.0 C964.7 607.2 952.7 615.3 949.0 621.0 C945.3 626.7 946.0 631.0 944.0 636.0 C942.0 641.0 942.3 646.0 937.0 651.0 C931.7 656.0 919.0 661.5 912.0 666.0 C905.0 670.5 900.7 674.8 895.0 678.0 C889.3 681.2 880.8 683.8 878.0 685.0" stroke-width="31.0"/>
<path d="M940.0 575.0 C943.7 573.0 956.3 567.2 962.0 563.0 C967.7 558.8 971.2 556.7 974.0 550.0 C976.8 543.3 978.2 527.5 979.0 523.0" stroke-width="28"/>
<path d="M966.0 602.0 C967.7 601.2 971.0 596.7 976.0 597.0 C981.0 597.3 993.8 600.0 996.0 604.0 C998.2 608.0 988.7 616.0 989.0 621.0 C989.3 626.0 993.2 629.8 998.0 634.0 C1002.8 638.2 1014.7 644.0 1018.0 646.0" stroke-width="31.0"/>
<path d="M976.0 592.0 C978.2 588.7 984.8 577.7 989.0 572.0 C993.2 566.3 999.0 560.3 1001.0 558.0" stroke-width="28"/>
<path d="M935.0 651.0 C936.2 655.8 940.8 672.7 942.0 680.0 C943.2 687.3 941.2 690.5 942.0 695.0 C942.8 699.5 946.2 705.0 947.0 707.0" stroke-width="28"/>
<path d="M944.0 653.0 C947.3 655.8 959.0 664.7 964.0 670.0 C969.0 675.3 970.7 681.2 974.0 685.0 C977.3 688.8 982.3 691.7 984.0 693.0" stroke-width="28"/>
<path d="M753.0 609.0 C755.5 609.5 763.5 609.2 768.0 612.0 C772.5 614.8 777.7 622.0 780.0 626.0 C782.3 630.0 783.2 632.7 782.0 636.0 C780.8 639.3 777.8 643.5 773.0 646.0 C768.2 648.5 756.3 650.2 753.0 651.0" stroke-width="28"/>
<path d="M797.0 614.0 C797.5 616.8 796.3 624.8 800.0 631.0 C803.7 637.2 815.0 646.0 819.0 651.0 C823.0 656.0 823.2 659.3 824.0 661.0" stroke-width="28"/>
<path d="M800.0 597.0 C804.5 597.8 818.5 600.8 827.0 602.0 C835.5 603.2 847.0 603.7 851.0 604.0" stroke-width="28"/>
<path d="M1011.0 705.0 C1011.0 707.0 1011.5 713.2 1011.0 717.0 C1010.5 720.8 1008.5 726.2 1008.0 728.0" stroke-width="34"/>
<path d="M809.0 821.0 C811.5 820.2 819.0 815.7 824.0 816.0 C829.0 816.3 833.7 819.0 839.0 823.0 C844.3 827.0 850.7 835.0 856.0 840.0 C861.3 845.0 867.7 849.3 871.0 853.0 C874.3 856.7 872.8 858.3 876.0 862.0 C879.2 865.7 884.3 871.7 890.0 875.0 C895.7 878.3 904.2 878.0 910.0 882.0 C915.8 886.0 917.7 894.8 925.0 899.0 C932.3 903.2 945.8 904.5 954.0 907.0 C962.2 909.5 968.2 909.5 974.0 914.0 C979.8 918.5 985.7 927.5 989.0 934.0 C992.3 940.5 992.0 947.3 994.0 953.0 C996.0 958.7 999.8 965.5 1001.0 968.0" stroke-width="31.0"/>
<path d="M868.0 813.0 C868.8 815.8 873.0 824.7 873.0 830.0 C873.0 835.3 868.8 842.5 868.0 845.0" stroke-width="28"/>
<path d="M905.0 860.0 C905.8 862.8 909.2 874.2 910.0 877.0" stroke-width="28"/>
<path d="M854.0 868.0 C857.7 867.0 872.3 863.0 876.0 862.0" stroke-width="28"/>
<path d="M753.0 875.0 C755.5 877.3 759.8 884.5 768.0 889.0 C776.2 893.5 788.2 896.2 802.0 902.0 C815.8 907.8 834.7 918.7 851.0 924.0 C867.3 929.3 888.5 932.3 900.0 934.0 C911.5 935.7 911.8 932.5 920.0 934.0 C928.2 935.5 940.8 939.3 949.0 943.0 C957.2 946.7 961.5 951.8 969.0 956.0 C976.5 960.2 987.5 963.5 994.0 968.0 C1000.5 972.5 1004.0 979.3 1008.0 983.0 C1012.0 986.7 1013.0 988.8 1018.0 990.0 C1023.0 991.2 1034.7 990.0 1038.0 990.0" stroke-width="40"/>
<path d="M905.0 938.0 C902.5 940.2 894.0 946.8 890.0 951.0 C886.0 955.2 882.5 961.0 881.0 963.0" stroke-width="46"/>
<path d="M881.0 963.0 C880.2 966.3 875.2 978.5 876.0 983.0 C876.8 987.5 883.7 986.0 886.0 990.0 C888.3 994.0 889.3 1004.2 890.0 1007.0" stroke-width="28"/>
<path d="M876.0 983.0 C874.3 985.3 872.2 994.2 866.0 997.0 C859.8 999.8 845.5 998.3 839.0 1000.0 C832.5 1001.7 829.0 1005.8 827.0 1007.0" stroke-width="28"/>
<path d="M930.0 951.0 C929.2 955.5 926.3 971.8 925.0 978.0 C923.7 984.2 922.5 986.3 922.0 988.0" stroke-width="28"/>
<path d="M1013.0 762.0 C1012.2 764.8 1008.8 772.2 1008.0 779.0 C1007.2 785.8 1008.3 793.2 1008.0 803.0 C1007.7 812.8 1006.8 831.0 1006.0 838.0 C1005.2 845.0 1004.7 841.8 1003.0 845.0 C1001.3 848.2 996.0 852.0 996.0 857.0 C996.0 862.0 1001.3 866.8 1003.0 875.0 C1004.7 883.2 1004.7 895.0 1006.0 906.0 C1007.3 917.0 1012.3 932.7 1011.0 941.0 C1009.7 949.3 1000.2 953.5 998.0 956.0" stroke-width="28"/>
<path d="M981.0 838.0 C983.5 841.2 993.5 853.8 996.0 857.0" stroke-width="28"/>
<path d="M1195.0 747.0 C1193.7 751.2 1187.8 765.8 1187.0 772.0 C1186.2 778.2 1185.5 780.8 1190.0 784.0 C1194.5 787.2 1208.3 789.0 1214.0 791.0 C1219.7 793.0 1220.7 792.7 1224.0 796.0 C1227.3 799.3 1227.5 808.2 1234.0 811.0 C1240.5 813.8 1255.7 813.0 1263.0 813.0 C1270.3 813.0 1274.7 810.2 1278.0 811.0 C1281.3 811.8 1282.2 816.8 1283.0 818.0" stroke-width="31.0"/>
<path d="M1224.0 796.0 C1224.8 794.0 1228.2 786.0 1229.0 784.0" stroke-width="28"/>
<path d="M1212.0 880.0 C1214.8 880.0 1222.0 880.0 1229.0 880.0 C1236.0 880.0 1246.7 883.0 1254.0 880.0 C1261.3 877.0 1268.2 866.7 1273.0 862.0 C1277.8 857.3 1281.3 853.7 1283.0 852.0" stroke-width="28"/>
<path d="M1116.0 823.0 C1117.3 826.7 1122.0 836.8 1124.0 845.0 C1126.0 853.2 1127.3 863.0 1128.0 872.0 C1128.7 881.0 1125.0 890.3 1128.0 899.0 C1131.0 907.7 1141.0 916.7 1146.0 924.0 C1151.0 931.3 1153.2 936.2 1158.0 943.0 C1162.8 949.8 1169.3 958.0 1175.0 965.0 C1180.7 972.0 1187.2 978.8 1192.0 985.0 C1196.8 991.2 1200.3 997.5 1204.0 1002.0 C1207.7 1006.5 1212.3 1010.3 1214.0 1012.0" stroke-width="31.0"/>
<path d="M1097.0 828.0 C1098.2 830.0 1100.0 836.7 1104.0 840.0 C1108.0 843.3 1118.2 846.7 1121.0 848.0" stroke-width="28"/>
<path d="M1065.0 833.0 C1066.5 835.5 1069.5 844.0 1074.0 848.0 C1078.5 852.0 1083.3 852.5 1092.0 857.0 C1100.7 861.5 1120.3 872.0 1126.0 875.0" stroke-width="28"/>
<path d="M1060.0 853.0 C1062.3 852.2 1071.7 848.8 1074.0 848.0" stroke-width="28"/>
<path d="M1062.0 902.0 C1064.5 901.7 1070.8 897.7 1077.0 900.0 C1083.2 902.3 1089.7 911.2 1099.0 916.0 C1108.3 920.8 1125.2 927.7 1133.0 929.0 C1140.8 930.3 1143.8 924.8 1146.0 924.0" stroke-width="28"/>
<path d="M1116.0 943.0 C1118.8 940.7 1130.2 931.3 1133.0 929.0" stroke-width="28"/>
<path d="M1038.0 990.0 C1040.0 992.8 1048.0 1004.2 1050.0 1007.0" stroke-width="34"/>
<path d="M900.0 934.0 C903.3 934.0 911.8 932.5 920.0 934.0 C928.2 935.5 940.8 939.3 949.0 943.0 C957.2 946.7 961.5 951.8 969.0 956.0 C976.5 960.2 987.5 963.5 994.0 968.0 C1000.5 972.5 1005.7 980.5 1008.0 983.0" stroke-width="64"/>
<path d="M905.0 938.0 C902.5 940.2 894.0 946.8 890.0 951.0 C886.0 955.2 882.5 961.0 881.0 963.0" stroke-width="70"/>
<path d="M876.0 862.0 C878.3 864.2 884.3 871.7 890.0 875.0 C895.7 878.3 904.2 878.0 910.0 882.0 C915.8 886.0 917.7 894.8 925.0 899.0 C932.3 903.2 949.2 905.7 954.0 907.0" stroke-width="52"/>
<path d="M1146.0 924.0 C1148.0 927.2 1153.2 936.2 1158.0 943.0 C1162.8 949.8 1169.3 958.0 1175.0 965.0 C1180.7 972.0 1189.2 981.7 1192.0 985.0" stroke-width="52"/>
<path d="M1128.0 890.0 C1128.0 891.5 1126.0 894.8 1128.0 899.0 C1130.0 903.2 1138.0 912.3 1140.0 915.0" stroke-width="46"/>
<path d="M1283.0 956.0 C1285.2 957.5 1291.5 962.2 1296.0 965.0 C1300.5 967.8 1306.3 970.0 1310.0 973.0 C1313.7 976.0 1316.7 981.3 1318.0 983.0" stroke-width="52"/>
<path d="M1288.0 830.0 C1288.5 831.7 1289.7 835.5 1291.0 840.0 C1292.3 844.5 1295.2 854.2 1296.0 857.0" stroke-width="58"/>
<path d="M1467.0 558.0 C1463.0 562.0 1449.5 576.0 1443.0 582.0 C1436.5 588.0 1432.8 589.8 1428.0 594.0 C1423.2 598.2 1418.8 601.7 1414.0 607.0 C1409.2 612.3 1403.2 619.8 1399.0 626.0 C1394.8 632.2 1393.2 637.3 1389.0 644.0 C1384.8 650.7 1377.3 660.8 1374.0 666.0 C1370.7 671.2 1372.2 671.8 1369.0 675.0 C1365.8 678.2 1357.3 683.3 1355.0 685.0" stroke-width="46"/>
<path d="M1534.0 440.0 C1532.3 444.0 1528.2 456.7 1524.0 464.0 C1519.8 471.3 1511.5 480.7 1509.0 484.0" stroke-width="52"/>
<path d="M1168.0 354.0 C1170.3 352.0 1177.5 345.7 1182.0 342.0 C1186.5 338.3 1189.7 333.5 1195.0 332.0 C1200.3 330.5 1208.3 331.8 1214.0 333.0 C1219.7 334.2 1225.3 335.5 1229.0 339.0 C1232.7 342.5 1233.2 351.5 1236.0 354.0 C1238.8 356.5 1244.3 354.0 1246.0 354.0" stroke-width="46"/>
<path d="M900.0 445.0 C904.2 446.2 917.7 452.8 925.0 452.0 C932.3 451.2 935.8 447.8 944.0 440.0 C952.2 432.2 969.0 410.8 974.0 405.0" stroke-width="58"/>
<path d="M1092.0 361.0 C1094.0 360.7 1100.8 358.0 1104.0 359.0 C1107.2 360.0 1109.8 365.7 1111.0 367.0" stroke-width="46"/>
<path d="M1082.0 295.0 C1083.2 295.8 1085.8 296.3 1089.0 300.0 C1092.2 303.7 1099.0 314.2 1101.0 317.0" stroke-width="46"/>
<path d="M780.0 560.0 C780.0 564.5 780.0 582.5 780.0 587.0" stroke-width="46"/>
<path d="M1229.0 645.0 C1229.0 646.8 1230.2 651.0 1229.0 656.0 C1227.8 661.0 1223.2 671.8 1222.0 675.0" stroke-width="46"/>
<path d="M1040.0 661.0 C1043.7 661.0 1055.8 661.0 1062.0 661.0 C1068.2 661.0 1074.5 661.0 1077.0 661.0" stroke-width="40"/>
<path d="M920.0 533.0 C920.8 537.2 921.7 551.0 925.0 558.0 C928.3 565.0 937.5 572.2 940.0 575.0" stroke-width="46"/>
<path d="M1003.0 865.0 C1003.5 871.8 1005.5 899.2 1006.0 906.0" stroke-width="40"/>
</g>
<g fill="none" stroke="#a9b3c2" stroke-linecap="round" stroke-linejoin="round" filter="url(#bl3)" opacity="0.5">
<path d="M812.0 220.0 C813.7 224.0 817.5 238.0 822.0 244.0 C826.5 250.0 832.8 251.5 839.0 256.0 C845.2 260.5 851.2 265.7 859.0 271.0 C866.8 276.3 879.2 282.0 886.0 288.0 C892.8 294.0 894.3 300.2 900.0 307.0 C905.7 313.8 913.3 322.0 920.0 329.0 C926.7 336.0 934.3 344.5 940.0 349.0 C945.7 353.5 950.8 352.3 954.0 356.0 C957.2 359.7 957.3 366.8 959.0 371.0 C960.7 375.2 961.5 375.3 964.0 381.0 C966.5 386.7 977.3 395.2 974.0 405.0 C970.7 414.8 952.2 432.2 944.0 440.0 C935.8 447.8 932.3 451.2 925.0 452.0 C917.7 452.8 904.5 451.2 900.0 445.0 C895.5 438.8 900.3 421.2 898.0 415.0 C895.7 408.8 892.5 407.5 886.0 408.0 C879.5 408.5 868.8 416.8 859.0 418.0 C849.2 419.2 836.8 418.7 827.0 415.0 C817.2 411.3 809.8 402.5 800.0 396.0 C790.2 389.5 775.8 378.8 768.0 376.0 C760.2 373.2 755.5 378.5 753.0 379.0" stroke-width="14"/>
<path d="M974.0 405.0 C976.0 406.7 978.7 412.5 986.0 415.0 C993.3 417.5 1009.3 420.0 1018.0 420.0 C1026.7 420.0 1032.7 413.3 1038.0 415.0 C1043.3 416.7 1046.8 426.7 1050.0 430.0 C1053.2 433.3 1053.3 436.7 1057.0 435.0 C1060.7 433.3 1066.7 424.5 1072.0 420.0 C1077.3 415.5 1085.7 411.2 1089.0 408.0 C1092.3 404.8 1093.2 404.7 1092.0 401.0 C1090.8 397.3 1084.2 391.8 1082.0 386.0 C1079.8 380.2 1077.3 370.2 1079.0 366.0 C1080.7 361.8 1087.8 362.2 1092.0 361.0 C1096.2 359.8 1102.0 359.3 1104.0 359.0" stroke-width="13.0"/>
<path d="M827.0 415.0 C824.8 418.3 819.0 428.0 814.0 435.0 C809.0 442.0 801.5 448.8 797.0 457.0 C792.5 465.2 789.0 475.3 787.0 484.0 C785.0 492.7 785.5 503.3 785.0 509.0 C784.5 514.7 784.0 512.8 784.0 518.0 C784.0 523.2 784.0 534.7 785.0 540.0 C786.0 545.3 790.5 547.0 790.0 550.0 C789.5 553.0 783.7 554.7 782.0 558.0 C780.3 561.3 780.3 565.2 780.0 570.0 C779.7 574.8 782.0 582.5 780.0 587.0 C778.0 591.5 772.5 595.0 768.0 597.0 C763.5 599.0 755.5 598.7 753.0 599.0" stroke-width="12"/>
<path d="M797.0 457.0 C801.2 461.5 817.8 479.5 822.0 484.0" stroke-width="12"/>
<path d="M922.0 452.0 C922.0 457.3 922.0 478.7 922.0 484.0" stroke-width="12"/>
<path d="M1033.0 221.0 C1034.2 224.8 1038.0 236.5 1040.0 244.0 C1042.0 251.5 1041.3 259.5 1045.0 266.0 C1048.7 272.5 1055.8 278.2 1062.0 283.0 C1068.2 287.8 1077.5 292.2 1082.0 295.0 C1086.5 297.8 1085.8 296.3 1089.0 300.0 C1092.2 303.7 1099.7 311.7 1101.0 317.0 C1102.3 322.3 1097.0 326.7 1097.0 332.0 C1097.0 337.3 1099.8 344.5 1101.0 349.0 C1102.2 353.5 1102.3 356.0 1104.0 359.0 C1105.7 362.0 1104.8 366.7 1111.0 367.0 C1117.2 367.3 1131.5 363.2 1141.0 361.0 C1150.5 358.8 1161.2 357.2 1168.0 354.0 C1174.8 350.8 1177.5 345.7 1182.0 342.0 C1186.5 338.3 1189.7 333.5 1195.0 332.0 C1200.3 330.5 1208.3 331.8 1214.0 333.0 C1219.7 334.2 1225.3 335.5 1229.0 339.0 C1232.7 342.5 1233.2 351.5 1236.0 354.0 C1238.8 356.5 1243.0 356.5 1246.0 354.0 C1249.0 351.5 1249.8 342.3 1254.0 339.0 C1258.2 335.7 1266.2 336.0 1271.0 334.0 C1275.8 332.0 1277.2 328.5 1283.0 327.0 C1288.8 325.5 1299.0 326.7 1306.0 325.0 C1313.0 323.3 1321.3 321.2 1325.0 317.0 C1328.7 312.8 1330.5 305.3 1328.0 300.0 C1325.5 294.7 1313.3 289.8 1310.0 285.0 C1306.7 280.2 1305.8 276.7 1308.0 271.0 C1310.2 265.3 1321.3 259.3 1323.0 251.0 C1324.7 242.7 1318.8 226.0 1318.0 221.0" stroke-width="13.0"/>
<path d="M1334.0 405.0 C1334.5 402.7 1331.5 392.2 1337.0 391.0 C1342.5 389.8 1357.5 394.8 1367.0 398.0 C1376.5 401.2 1386.3 405.5 1394.0 410.0 C1401.7 414.5 1406.5 423.3 1413.0 425.0 C1419.5 426.7 1426.3 424.5 1433.0 420.0 C1439.7 415.5 1446.5 403.3 1453.0 398.0 C1459.5 392.7 1465.8 389.2 1472.0 388.0 C1478.2 386.8 1483.0 392.8 1490.0 391.0 C1497.0 389.2 1504.8 379.0 1514.0 377.0 C1523.2 375.0 1539.8 378.7 1545.0 379.0" stroke-width="13.0"/>
<path d="M1546.0 432.0 C1544.0 433.3 1537.7 434.7 1534.0 440.0 C1530.3 445.3 1528.2 456.7 1524.0 464.0 C1519.8 471.3 1513.2 478.2 1509.0 484.0 C1504.8 489.8 1501.8 493.3 1499.0 499.0 C1496.2 504.7 1493.5 512.3 1492.0 518.0 C1490.5 523.7 1494.2 526.3 1490.0 533.0 C1485.8 539.7 1474.8 549.8 1467.0 558.0 C1459.2 566.2 1449.5 576.0 1443.0 582.0 C1436.5 588.0 1432.8 589.8 1428.0 594.0 C1423.2 598.2 1418.8 601.7 1414.0 607.0 C1409.2 612.3 1403.2 619.8 1399.0 626.0 C1394.8 632.2 1393.2 637.3 1389.0 644.0 C1384.8 650.7 1377.3 660.8 1374.0 666.0 C1370.7 671.2 1372.2 671.8 1369.0 675.0 C1365.8 678.2 1359.0 683.3 1355.0 685.0 C1351.0 686.7 1349.2 684.5 1345.0 685.0 C1340.8 685.5 1334.5 685.5 1330.0 688.0 C1325.5 690.5 1320.8 695.5 1318.0 700.0 C1315.2 704.5 1312.2 711.0 1313.0 715.0 C1313.8 719.0 1320.2 721.7 1323.0 724.0 C1325.8 726.3 1332.2 726.8 1330.0 729.0 C1327.8 731.2 1315.7 733.7 1310.0 737.0 C1304.3 740.3 1299.2 746.5 1296.0 749.0 C1292.8 751.5 1290.2 748.7 1291.0 752.0 C1291.8 755.3 1296.5 764.5 1301.0 769.0 C1305.5 773.5 1314.3 774.8 1318.0 779.0 C1321.7 783.2 1320.5 790.3 1323.0 794.0 C1325.5 797.7 1331.8 798.2 1333.0 801.0 C1334.2 803.8 1334.5 807.7 1330.0 811.0 C1325.5 814.3 1313.0 819.0 1306.0 821.0 C1299.0 823.0 1290.5 819.8 1288.0 823.0 C1285.5 826.2 1289.7 834.3 1291.0 840.0 C1292.3 845.7 1295.2 851.7 1296.0 857.0 C1296.8 862.3 1294.8 866.7 1296.0 872.0 C1297.2 877.3 1298.5 885.7 1303.0 889.0 C1307.5 892.3 1318.5 893.5 1323.0 892.0 C1327.5 890.5 1327.2 879.7 1330.0 880.0 C1332.8 880.3 1339.5 889.7 1340.0 894.0 C1340.5 898.3 1338.0 904.3 1333.0 906.0 C1328.0 907.7 1317.5 904.7 1310.0 904.0 C1302.5 903.3 1292.8 901.2 1288.0 902.0 C1283.2 902.8 1282.2 907.8 1281.0 909.0" stroke-width="15.0"/>
<path d="M1345.0 668.0 C1343.7 666.0 1343.5 658.8 1337.0 656.0 C1330.5 653.2 1314.2 653.0 1306.0 651.0 C1297.8 649.0 1292.2 647.7 1288.0 644.0 C1283.8 640.3 1281.3 632.8 1281.0 629.0 C1280.7 625.2 1282.7 623.0 1286.0 621.0 C1289.3 619.0 1297.0 619.0 1301.0 617.0 C1305.0 615.0 1308.5 610.3 1310.0 609.0" stroke-width="12"/>
<path d="M1323.0 670.0 C1323.3 671.7 1321.8 677.5 1325.0 680.0 C1328.2 682.5 1339.2 684.2 1342.0 685.0" stroke-width="12"/>
<path d="M1281.0 931.0 C1281.8 933.0 1285.7 938.8 1286.0 943.0 C1286.3 947.2 1281.3 952.3 1283.0 956.0 C1284.7 959.7 1291.5 962.2 1296.0 965.0 C1300.5 967.8 1306.3 970.0 1310.0 973.0 C1313.7 976.0 1315.5 978.2 1318.0 983.0 C1320.5 987.8 1323.0 997.2 1325.0 1002.0 C1327.0 1006.8 1329.2 1010.3 1330.0 1012.0" stroke-width="13.0"/>
<path d="M1453.0 821.0 C1455.8 823.0 1466.3 827.7 1470.0 833.0 C1473.7 838.3 1474.2 846.5 1475.0 853.0 C1475.8 859.5 1472.2 866.0 1475.0 872.0 C1477.8 878.0 1485.0 883.2 1492.0 889.0 C1499.0 894.8 1509.7 904.0 1517.0 907.0 C1524.3 910.0 1531.3 908.3 1536.0 907.0 C1540.7 905.7 1543.5 900.3 1545.0 899.0" stroke-width="13.0"/>
<path d="M1541.0 767.0 C1540.3 769.3 1536.3 777.3 1537.0 781.0 C1537.7 784.7 1543.7 787.7 1545.0 789.0" stroke-width="12"/>
<path d="M1131.0 626.0 C1129.8 621.2 1125.7 604.3 1124.0 597.0 C1122.3 589.7 1120.7 585.7 1121.0 582.0 C1121.3 578.3 1124.8 578.2 1126.0 575.0 C1127.2 571.8 1125.5 565.5 1128.0 563.0 C1130.5 560.5 1136.8 560.0 1141.0 560.0 C1145.2 560.0 1149.0 560.5 1153.0 563.0 C1157.0 565.5 1161.0 571.3 1165.0 575.0 C1169.0 578.7 1173.7 581.0 1177.0 585.0 C1180.3 589.0 1182.5 595.0 1185.0 599.0 C1187.5 603.0 1187.2 607.3 1192.0 609.0 C1196.8 610.7 1208.2 609.2 1214.0 609.0 C1219.8 608.8 1223.3 606.3 1227.0 608.0 C1230.7 609.7 1232.3 615.2 1236.0 619.0 C1239.7 622.8 1244.5 627.7 1249.0 631.0 C1253.5 634.3 1258.5 639.0 1263.0 639.0 C1267.5 639.0 1272.7 633.2 1276.0 631.0 C1279.3 628.8 1281.8 626.8 1283.0 626.0" stroke-width="13.0"/>
<path d="M1236.0 621.0 C1234.5 624.3 1231.5 637.2 1227.0 641.0 C1222.5 644.8 1212.0 643.5 1209.0 644.0" stroke-width="13.0"/>
<path d="M1229.0 645.0 C1229.0 646.8 1230.2 651.0 1229.0 656.0 C1227.8 661.0 1223.2 671.8 1222.0 675.0" stroke-width="14"/>
<path d="M1028.0 634.0 C1030.0 633.7 1038.0 632.3 1040.0 632.0" stroke-width="12"/>
<path d="M1018.0 644.0 C1020.8 645.2 1031.3 648.2 1035.0 651.0 C1038.7 653.8 1035.5 659.3 1040.0 661.0 C1044.5 662.7 1055.8 661.0 1062.0 661.0 C1068.2 661.0 1074.5 661.0 1077.0 661.0" stroke-width="12"/>
<path d="M1040.0 666.0 C1044.5 668.0 1059.7 675.2 1067.0 678.0 C1074.3 680.8 1077.8 680.5 1084.0 683.0 C1090.2 685.5 1100.7 689.3 1104.0 693.0 C1107.3 696.7 1106.8 700.5 1104.0 705.0 C1101.2 709.5 1091.2 712.7 1087.0 720.0 C1082.8 727.3 1081.8 740.7 1079.0 749.0 C1076.2 757.3 1071.5 766.5 1070.0 770.0" stroke-width="13.0"/>
<path d="M1018.0 656.0 C1018.8 660.0 1021.3 672.7 1023.0 680.0 C1024.7 687.3 1028.8 695.0 1028.0 700.0 C1027.2 705.0 1019.7 708.3 1018.0 710.0" stroke-width="12"/>
<path d="M790.0 550.0 C796.2 550.5 817.2 554.7 827.0 553.0 C836.8 551.3 845.3 542.2 849.0 540.0" stroke-width="12"/>
<path d="M824.0 484.0 C824.8 488.2 829.3 504.2 829.0 509.0 C828.7 513.8 823.2 512.3 822.0 513.0" stroke-width="12"/>
<path d="M829.0 494.0 C831.0 495.2 839.0 499.8 841.0 501.0" stroke-width="12"/>
<path d="M873.0 489.0 C877.5 488.5 895.5 486.5 900.0 486.0" stroke-width="12"/>
<path d="M925.0 484.0 C923.3 488.2 915.8 500.8 915.0 509.0 C914.2 517.2 918.3 524.8 920.0 533.0 C921.7 541.2 921.7 551.0 925.0 558.0 C928.3 565.0 934.7 569.7 940.0 575.0 C945.3 580.3 952.7 585.5 957.0 590.0 C961.3 594.5 967.3 596.8 966.0 602.0 C964.7 607.2 952.7 615.3 949.0 621.0 C945.3 626.7 946.0 631.0 944.0 636.0 C942.0 641.0 942.3 646.0 937.0 651.0 C931.7 656.0 919.0 661.5 912.0 666.0 C905.0 670.5 900.7 674.8 895.0 678.0 C889.3 681.2 880.8 683.8 878.0 685.0" stroke-width="13.0"/>
<path d="M940.0 575.0 C943.7 573.0 956.3 567.2 962.0 563.0 C967.7 558.8 971.2 556.7 974.0 550.0 C976.8 543.3 978.2 527.5 979.0 523.0" stroke-width="12"/>
<path d="M966.0 602.0 C967.7 601.2 971.0 596.7 976.0 597.0 C981.0 597.3 993.8 600.0 996.0 604.0 C998.2 608.0 988.7 616.0 989.0 621.0 C989.3 626.0 993.2 629.8 998.0 634.0 C1002.8 638.2 1014.7 644.0 1018.0 646.0" stroke-width="13.0"/>
<path d="M976.0 592.0 C978.2 588.7 984.8 577.7 989.0 572.0 C993.2 566.3 999.0 560.3 1001.0 558.0" stroke-width="12"/>
<path d="M935.0 651.0 C936.2 655.8 940.8 672.7 942.0 680.0 C943.2 687.3 941.2 690.5 942.0 695.0 C942.8 699.5 946.2 705.0 947.0 707.0" stroke-width="12"/>
<path d="M944.0 653.0 C947.3 655.8 959.0 664.7 964.0 670.0 C969.0 675.3 970.7 681.2 974.0 685.0 C977.3 688.8 982.3 691.7 984.0 693.0" stroke-width="12"/>
<path d="M753.0 609.0 C755.5 609.5 763.5 609.2 768.0 612.0 C772.5 614.8 777.7 622.0 780.0 626.0 C782.3 630.0 783.2 632.7 782.0 636.0 C780.8 639.3 777.8 643.5 773.0 646.0 C768.2 648.5 756.3 650.2 753.0 651.0" stroke-width="12"/>
<path d="M797.0 614.0 C797.5 616.8 796.3 624.8 800.0 631.0 C803.7 637.2 815.0 646.0 819.0 651.0 C823.0 656.0 823.2 659.3 824.0 661.0" stroke-width="12"/>
<path d="M800.0 597.0 C804.5 597.8 818.5 600.8 827.0 602.0 C835.5 603.2 847.0 603.7 851.0 604.0" stroke-width="12"/>
<path d="M1011.0 705.0 C1011.0 707.0 1011.5 713.2 1011.0 717.0 C1010.5 720.8 1008.5 726.2 1008.0 728.0" stroke-width="14"/>
<path d="M809.0 821.0 C811.5 820.2 819.0 815.7 824.0 816.0 C829.0 816.3 833.7 819.0 839.0 823.0 C844.3 827.0 850.7 835.0 856.0 840.0 C861.3 845.0 867.7 849.3 871.0 853.0 C874.3 856.7 872.8 858.3 876.0 862.0 C879.2 865.7 884.3 871.7 890.0 875.0 C895.7 878.3 904.2 878.0 910.0 882.0 C915.8 886.0 917.7 894.8 925.0 899.0 C932.3 903.2 945.8 904.5 954.0 907.0 C962.2 909.5 968.2 909.5 974.0 914.0 C979.8 918.5 985.7 927.5 989.0 934.0 C992.3 940.5 992.0 947.3 994.0 953.0 C996.0 958.7 999.8 965.5 1001.0 968.0" stroke-width="13.0"/>
<path d="M868.0 813.0 C868.8 815.8 873.0 824.7 873.0 830.0 C873.0 835.3 868.8 842.5 868.0 845.0" stroke-width="12"/>
<path d="M905.0 860.0 C905.8 862.8 909.2 874.2 910.0 877.0" stroke-width="12"/>
<path d="M854.0 868.0 C857.7 867.0 872.3 863.0 876.0 862.0" stroke-width="12"/>
<path d="M753.0 875.0 C755.5 877.3 759.8 884.5 768.0 889.0 C776.2 893.5 788.2 896.2 802.0 902.0 C815.8 907.8 834.7 918.7 851.0 924.0 C867.3 929.3 888.5 932.3 900.0 934.0 C911.5 935.7 911.8 932.5 920.0 934.0 C928.2 935.5 940.8 939.3 949.0 943.0 C957.2 946.7 961.5 951.8 969.0 956.0 C976.5 960.2 987.5 963.5 994.0 968.0 C1000.5 972.5 1004.0 979.3 1008.0 983.0 C1012.0 986.7 1013.0 988.8 1018.0 990.0 C1023.0 991.2 1034.7 990.0 1038.0 990.0" stroke-width="16"/>
<path d="M905.0 938.0 C902.5 940.2 894.0 946.8 890.0 951.0 C886.0 955.2 882.5 961.0 881.0 963.0" stroke-width="18"/>
<path d="M881.0 963.0 C880.2 966.3 875.2 978.5 876.0 983.0 C876.8 987.5 883.7 986.0 886.0 990.0 C888.3 994.0 889.3 1004.2 890.0 1007.0" stroke-width="12"/>
<path d="M876.0 983.0 C874.3 985.3 872.2 994.2 866.0 997.0 C859.8 999.8 845.5 998.3 839.0 1000.0 C832.5 1001.7 829.0 1005.8 827.0 1007.0" stroke-width="12"/>
<path d="M930.0 951.0 C929.2 955.5 926.3 971.8 925.0 978.0 C923.7 984.2 922.5 986.3 922.0 988.0" stroke-width="12"/>
<path d="M1013.0 762.0 C1012.2 764.8 1008.8 772.2 1008.0 779.0 C1007.2 785.8 1008.3 793.2 1008.0 803.0 C1007.7 812.8 1006.8 831.0 1006.0 838.0 C1005.2 845.0 1004.7 841.8 1003.0 845.0 C1001.3 848.2 996.0 852.0 996.0 857.0 C996.0 862.0 1001.3 866.8 1003.0 875.0 C1004.7 883.2 1004.7 895.0 1006.0 906.0 C1007.3 917.0 1012.3 932.7 1011.0 941.0 C1009.7 949.3 1000.2 953.5 998.0 956.0" stroke-width="12"/>
<path d="M981.0 838.0 C983.5 841.2 993.5 853.8 996.0 857.0" stroke-width="12"/>
<path d="M1195.0 747.0 C1193.7 751.2 1187.8 765.8 1187.0 772.0 C1186.2 778.2 1185.5 780.8 1190.0 784.0 C1194.5 787.2 1208.3 789.0 1214.0 791.0 C1219.7 793.0 1220.7 792.7 1224.0 796.0 C1227.3 799.3 1227.5 808.2 1234.0 811.0 C1240.5 813.8 1255.7 813.0 1263.0 813.0 C1270.3 813.0 1274.7 810.2 1278.0 811.0 C1281.3 811.8 1282.2 816.8 1283.0 818.0" stroke-width="13.0"/>
<path d="M1224.0 796.0 C1224.8 794.0 1228.2 786.0 1229.0 784.0" stroke-width="12"/>
<path d="M1212.0 880.0 C1214.8 880.0 1222.0 880.0 1229.0 880.0 C1236.0 880.0 1246.7 883.0 1254.0 880.0 C1261.3 877.0 1268.2 866.7 1273.0 862.0 C1277.8 857.3 1281.3 853.7 1283.0 852.0" stroke-width="12"/>
<path d="M1116.0 823.0 C1117.3 826.7 1122.0 836.8 1124.0 845.0 C1126.0 853.2 1127.3 863.0 1128.0 872.0 C1128.7 881.0 1125.0 890.3 1128.0 899.0 C1131.0 907.7 1141.0 916.7 1146.0 924.0 C1151.0 931.3 1153.2 936.2 1158.0 943.0 C1162.8 949.8 1169.3 958.0 1175.0 965.0 C1180.7 972.0 1187.2 978.8 1192.0 985.0 C1196.8 991.2 1200.3 997.5 1204.0 1002.0 C1207.7 1006.5 1212.3 1010.3 1214.0 1012.0" stroke-width="13.0"/>
<path d="M1097.0 828.0 C1098.2 830.0 1100.0 836.7 1104.0 840.0 C1108.0 843.3 1118.2 846.7 1121.0 848.0" stroke-width="12"/>
<path d="M1065.0 833.0 C1066.5 835.5 1069.5 844.0 1074.0 848.0 C1078.5 852.0 1083.3 852.5 1092.0 857.0 C1100.7 861.5 1120.3 872.0 1126.0 875.0" stroke-width="12"/>
<path d="M1060.0 853.0 C1062.3 852.2 1071.7 848.8 1074.0 848.0" stroke-width="12"/>
<path d="M1062.0 902.0 C1064.5 901.7 1070.8 897.7 1077.0 900.0 C1083.2 902.3 1089.7 911.2 1099.0 916.0 C1108.3 920.8 1125.2 927.7 1133.0 929.0 C1140.8 930.3 1143.8 924.8 1146.0 924.0" stroke-width="12"/>
<path d="M1116.0 943.0 C1118.8 940.7 1130.2 931.3 1133.0 929.0" stroke-width="12"/>
<path d="M1038.0 990.0 C1040.0 992.8 1048.0 1004.2 1050.0 1007.0" stroke-width="14"/>
<path d="M900.0 934.0 C903.3 934.0 911.8 932.5 920.0 934.0 C928.2 935.5 940.8 939.3 949.0 943.0 C957.2 946.7 961.5 951.8 969.0 956.0 C976.5 960.2 987.5 963.5 994.0 968.0 C1000.5 972.5 1005.7 980.5 1008.0 983.0" stroke-width="24"/>
<path d="M905.0 938.0 C902.5 940.2 894.0 946.8 890.0 951.0 C886.0 955.2 882.5 961.0 881.0 963.0" stroke-width="26"/>
<path d="M876.0 862.0 C878.3 864.2 884.3 871.7 890.0 875.0 C895.7 878.3 904.2 878.0 910.0 882.0 C915.8 886.0 917.7 894.8 925.0 899.0 C932.3 903.2 949.2 905.7 954.0 907.0" stroke-width="20"/>
<path d="M1146.0 924.0 C1148.0 927.2 1153.2 936.2 1158.0 943.0 C1162.8 949.8 1169.3 958.0 1175.0 965.0 C1180.7 972.0 1189.2 981.7 1192.0 985.0" stroke-width="20"/>
<path d="M1128.0 890.0 C1128.0 891.5 1126.0 894.8 1128.0 899.0 C1130.0 903.2 1138.0 912.3 1140.0 915.0" stroke-width="18"/>
<path d="M1283.0 956.0 C1285.2 957.5 1291.5 962.2 1296.0 965.0 C1300.5 967.8 1306.3 970.0 1310.0 973.0 C1313.7 976.0 1316.7 981.3 1318.0 983.0" stroke-width="20"/>
<path d="M1288.0 830.0 C1288.5 831.7 1289.7 835.5 1291.0 840.0 C1292.3 844.5 1295.2 854.2 1296.0 857.0" stroke-width="22"/>
<path d="M1467.0 558.0 C1463.0 562.0 1449.5 576.0 1443.0 582.0 C1436.5 588.0 1432.8 589.8 1428.0 594.0 C1423.2 598.2 1418.8 601.7 1414.0 607.0 C1409.2 612.3 1403.2 619.8 1399.0 626.0 C1394.8 632.2 1393.2 637.3 1389.0 644.0 C1384.8 650.7 1377.3 660.8 1374.0 666.0 C1370.7 671.2 1372.2 671.8 1369.0 675.0 C1365.8 678.2 1357.3 683.3 1355.0 685.0" stroke-width="18"/>
<path d="M1534.0 440.0 C1532.3 444.0 1528.2 456.7 1524.0 464.0 C1519.8 471.3 1511.5 480.7 1509.0 484.0" stroke-width="20"/>
<path d="M1168.0 354.0 C1170.3 352.0 1177.5 345.7 1182.0 342.0 C1186.5 338.3 1189.7 333.5 1195.0 332.0 C1200.3 330.5 1208.3 331.8 1214.0 333.0 C1219.7 334.2 1225.3 335.5 1229.0 339.0 C1232.7 342.5 1233.2 351.5 1236.0 354.0 C1238.8 356.5 1244.3 354.0 1246.0 354.0" stroke-width="18"/>
<path d="M900.0 445.0 C904.2 446.2 917.7 452.8 925.0 452.0 C932.3 451.2 935.8 447.8 944.0 440.0 C952.2 432.2 969.0 410.8 974.0 405.0" stroke-width="22"/>
<path d="M1092.0 361.0 C1094.0 360.7 1100.8 358.0 1104.0 359.0 C1107.2 360.0 1109.8 365.7 1111.0 367.0" stroke-width="18"/>
<path d="M1082.0 295.0 C1083.2 295.8 1085.8 296.3 1089.0 300.0 C1092.2 303.7 1099.0 314.2 1101.0 317.0" stroke-width="18"/>
<path d="M780.0 560.0 C780.0 564.5 780.0 582.5 780.0 587.0" stroke-width="18"/>
<path d="M1229.0 645.0 C1229.0 646.8 1230.2 651.0 1229.0 656.0 C1227.8 661.0 1223.2 671.8 1222.0 675.0" stroke-width="18"/>
<path d="M1040.0 661.0 C1043.7 661.0 1055.8 661.0 1062.0 661.0 C1068.2 661.0 1074.5 661.0 1077.0 661.0" stroke-width="16"/>
<path d="M920.0 533.0 C920.8 537.2 921.7 551.0 925.0 558.0 C928.3 565.0 937.5 572.2 940.0 575.0" stroke-width="18"/>
<path d="M1003.0 865.0 C1003.5 871.8 1005.5 899.2 1006.0 906.0" stroke-width="16"/>
</g>
<g fill="none" stroke="#6e757c" stroke-width="0.8" opacity=".35">
<path d="M760.0 640.0 C765.0 650.0 788.3 680.0 790.0 700.0 C791.7 720.0 768.3 740.0 770.0 760.0 C771.7 780.0 795.0 810.0 800.0 820.0"/>
<path d="M775.0 640.0 C780.0 650.0 803.3 680.0 805.0 700.0 C806.7 720.0 783.3 740.0 785.0 760.0 C786.7 780.0 810.0 810.0 815.0 820.0"/>
<path d="M1040.0 760.0 C1041.7 766.7 1043.3 785.0 1050.0 800.0 C1056.7 815.0 1071.7 833.3 1080.0 850.0 C1088.3 866.7 1088.3 881.7 1100.0 900.0 C1111.7 918.3 1136.7 941.3 1150.0 960.0 C1163.3 978.7 1175.0 1003.3 1180.0 1012.0"/>
<path d="M1060.0 760.0 C1061.7 766.7 1063.3 785.0 1070.0 800.0 C1076.7 815.0 1091.7 833.3 1100.0 850.0 C1108.3 866.7 1108.3 881.7 1120.0 900.0 C1131.7 918.3 1156.7 941.3 1170.0 960.0 C1183.3 978.7 1195.0 1003.3 1200.0 1012.0"/>
<path d="M1160.0 820.0 C1163.3 828.3 1170.0 853.3 1180.0 870.0 C1190.0 886.7 1208.3 903.3 1220.0 920.0 C1231.7 936.7 1241.7 954.7 1250.0 970.0 C1258.3 985.3 1266.7 1005.0 1270.0 1012.0"/>
<path d="M1370.0 600.0 C1375.0 593.3 1388.3 573.3 1400.0 560.0 C1411.7 546.7 1426.7 535.0 1440.0 520.0 C1453.3 505.0 1466.7 483.3 1480.0 470.0 C1493.3 456.7 1513.3 445.0 1520.0 440.0"/>
<path d="M1385.0 610.0 C1390.0 603.3 1403.3 583.3 1415.0 570.0 C1426.7 556.7 1441.7 545.0 1455.0 530.0 C1468.3 515.0 1481.7 493.3 1495.0 480.0 C1508.3 466.7 1528.3 455.0 1535.0 450.0"/>
<path d="M1400.0 630.0 C1405.0 623.3 1418.3 603.3 1430.0 590.0 C1441.7 576.7 1456.7 565.0 1470.0 550.0 C1483.3 535.0 1497.3 513.3 1510.0 500.0 C1522.7 486.7 1540.0 475.0 1546.0 470.0"/>
<path d="M1360.0 580.0 C1365.0 573.3 1378.3 553.3 1390.0 540.0 C1401.7 526.7 1416.7 515.0 1430.0 500.0 C1443.3 485.0 1456.7 463.3 1470.0 450.0 C1483.3 436.7 1503.3 425.0 1510.0 420.0"/>
<path d="M1320.0 720.0 C1326.7 716.7 1346.7 710.0 1360.0 700.0 C1373.3 690.0 1386.7 673.3 1400.0 660.0 C1413.3 646.7 1426.7 633.3 1440.0 620.0 C1453.3 606.7 1466.7 593.3 1480.0 580.0 C1493.3 566.7 1513.3 546.7 1520.0 540.0"/>
<path d="M1340.0 760.0 C1346.7 755.0 1366.7 741.7 1380.0 730.0 C1393.3 718.3 1406.7 703.3 1420.0 690.0 C1433.3 676.7 1446.7 663.3 1460.0 650.0 C1473.3 636.7 1485.7 623.3 1500.0 610.0 C1514.3 596.7 1538.3 576.7 1546.0 570.0"/>
<path d="M770.0 300.0 C780.0 305.0 811.7 320.0 830.0 330.0 C848.3 340.0 863.3 351.7 880.0 360.0 C896.7 368.3 921.7 376.7 930.0 380.0"/>
<path d="M780.0 320.0 C790.0 325.0 821.7 340.0 840.0 350.0 C858.3 360.0 875.0 371.7 890.0 380.0 C905.0 388.3 923.3 396.7 930.0 400.0"/>
<path d="M1150.0 260.0 C1158.3 263.3 1183.3 273.3 1200.0 280.0 C1216.7 286.7 1233.3 300.0 1250.0 300.0 C1266.7 300.0 1291.7 283.3 1300.0 280.0"/>
<path d="M1140.0 290.0 C1148.3 292.5 1173.3 300.0 1190.0 305.0 C1206.7 310.0 1231.7 317.5 1240.0 320.0"/>
<path d="M1170.0 540.0 C1180.0 543.3 1211.7 550.0 1230.0 560.0 C1248.3 570.0 1265.0 590.0 1280.0 600.0 C1295.0 610.0 1313.3 616.7 1320.0 620.0"/>
<path d="M1180.0 520.0 C1190.0 523.3 1221.7 530.0 1240.0 540.0 C1258.3 550.0 1275.0 570.0 1290.0 580.0 C1305.0 590.0 1323.3 596.7 1330.0 600.0"/>
<path d="M1460.0 720.0 C1466.7 726.7 1488.3 746.7 1500.0 760.0 C1511.7 773.3 1522.3 785.0 1530.0 800.0 C1537.7 815.0 1543.3 841.7 1546.0 850.0"/>
<path d="M1470.0 860.0 C1475.0 866.7 1487.3 890.0 1500.0 900.0 C1512.7 910.0 1538.3 916.7 1546.0 920.0"/>
<path d="M1330.0 920.0 C1338.3 923.3 1365.0 930.0 1380.0 940.0 C1395.0 950.0 1410.0 968.0 1420.0 980.0 C1430.0 992.0 1436.7 1006.7 1440.0 1012.0"/>
</g>
<g fill="none" stroke="#5f666e" stroke-width="0.9" opacity=".28">
<path d="M839.7 208.5 C840.7 211.4 843.2 222.1 846.0 226.0 C848.8 229.9 851.7 228.4 856.7 231.8 C861.7 235.1 867.7 240.6 875.9 246.2 C884.1 251.8 897.9 258.5 905.8 265.5 C913.7 272.4 917.1 280.7 923.1 287.8 C929.1 295.0 935.8 302.0 941.7 308.3 C947.7 314.6 952.8 320.8 958.7 325.5 C964.5 330.2 972.0 330.7 976.7 336.4 C981.4 342.1 984.4 354.4 986.9 359.9 C989.3 365.3 988.9 359.8 991.4 368.9 C994.0 378.0 1006.9 399.2 1002.4 414.6 C998.0 430.1 977.1 450.5 964.8 461.7 C952.4 472.8 943.2 481.6 928.4 481.8 C913.6 482.0 885.5 472.0 875.8 462.7 C866.0 453.3 867.9 429.7 869.9 425.6 C872.0 421.5 889.5 434.2 888.3 437.9 C887.1 441.6 874.5 446.9 862.5 447.8 C850.6 448.7 829.7 447.6 816.5 443.1 C803.3 438.6 793.2 427.5 783.5 421.0 C773.7 414.5 761.9 406.3 757.8 404.2 C753.7 402.1 758.7 407.7 758.9 408.4"/>
<path d="M828.6 213.1 C829.9 216.4 832.9 228.5 836.4 233.2 C839.9 237.9 844.2 237.6 849.6 241.5 C855.1 245.3 861.1 250.6 869.1 256.1 C877.2 261.6 890.4 267.9 897.9 274.5 C905.3 281.0 908.0 288.5 913.9 295.5 C919.7 302.5 926.8 310.0 933.0 316.6 C939.3 323.2 945.4 330.3 951.2 334.9 C957.0 339.5 963.5 339.3 967.6 344.2 C971.7 349.1 973.6 359.4 975.7 364.3 C977.9 369.2 977.9 366.0 980.5 373.7 C983.0 381.5 995.0 397.6 991.0 410.8 C987.0 424.0 967.1 443.1 956.5 453.0 C945.8 462.8 938.9 469.4 927.0 469.9 C915.2 470.3 893.1 463.7 885.5 455.6 C877.8 447.5 880.8 426.3 881.2 421.4 C881.5 416.4 890.7 423.5 887.4 425.9 C884.0 428.4 872.2 434.9 861.1 435.9 C850.0 436.9 832.6 436.0 820.7 431.9 C808.9 427.7 799.9 417.5 790.1 411.0 C780.3 404.5 767.5 395.3 761.9 392.9 C756.3 390.5 757.4 396.0 756.5 396.7"/>
<path d="M795.4 226.9 C797.4 231.6 802.1 247.5 807.6 254.8 C813.1 262.1 821.5 265.4 828.4 270.5 C835.3 275.7 841.2 280.7 848.9 285.9 C856.5 291.0 867.9 296.1 874.1 301.5 C880.3 307.0 880.7 311.8 886.1 318.5 C891.6 325.1 899.9 334.0 907.0 341.4 C914.1 348.8 923.2 358.7 928.8 363.1 C934.4 367.5 938.1 365.3 940.4 367.8 C942.6 370.2 941.1 374.3 942.3 377.7 C943.5 381.1 945.1 384.7 947.5 388.3 C950.0 391.9 959.6 392.8 957.0 399.2 C954.3 405.7 937.2 421.2 931.5 427.0 C925.9 432.8 925.8 432.9 923.0 434.1 C920.1 435.3 915.9 438.6 914.5 434.4 C913.2 430.1 919.8 416.0 914.8 408.6 C909.8 401.2 894.3 391.5 884.6 390.1 C875.0 388.6 865.4 398.8 856.9 400.1 C848.3 401.5 841.1 401.3 833.3 398.1 C825.5 394.9 819.8 387.5 809.9 381.0 C800.1 374.5 784.2 362.3 774.1 359.1 C764.0 355.8 753.6 361.0 749.5 361.3"/>
<path d="M784.3 231.5 C786.6 236.6 791.8 253.9 798.0 262.0 C804.2 270.1 814.0 274.6 821.3 280.2 C828.7 285.9 834.6 290.7 842.1 295.8 C849.6 300.8 860.4 305.5 866.2 310.5 C872.0 315.6 871.6 319.6 876.9 326.2 C882.3 332.7 890.9 342.0 898.3 349.7 C905.7 357.4 915.8 368.2 921.3 372.5 C926.8 376.8 929.7 374.0 931.3 375.6 C932.9 377.2 930.3 379.2 931.1 382.1 C932.0 385.1 934.1 390.9 936.6 393.1 C939.0 395.3 947.8 391.2 945.6 395.4 C943.4 399.6 927.2 413.9 923.2 418.3 C919.2 422.8 921.4 420.7 921.6 422.2 C921.8 423.7 923.5 430.3 924.2 427.3 C925.0 424.3 932.8 412.6 926.1 404.4 C919.3 396.2 895.5 380.8 883.7 378.1 C871.9 375.4 863.2 386.7 855.5 388.2 C847.8 389.7 844.0 389.8 837.5 386.9 C831.0 384.0 826.4 377.5 816.5 371.0 C806.7 364.5 789.8 351.4 778.2 347.8 C766.6 344.2 752.3 349.3 747.1 349.6"/>
<path d="M993.2 382.0 C993.6 382.7 991.5 385.3 995.7 386.6 C999.8 387.9 1009.5 390.0 1018.0 390.0 C1026.5 390.0 1038.0 383.1 1046.9 386.4 C1055.9 389.6 1072.1 405.8 1071.7 409.3 C1071.4 412.9 1047.8 409.7 1044.6 407.7 C1041.4 405.6 1048.7 400.6 1052.7 397.1 C1056.6 393.5 1066.5 384.1 1068.3 386.3 C1070.1 388.4 1065.8 408.4 1063.4 410.1 C1061.0 411.8 1055.9 405.7 1053.9 396.4 C1051.8 387.2 1046.1 365.6 1051.1 354.9 C1056.2 344.1 1075.9 336.4 1083.9 332.1 C1091.9 327.9 1096.5 329.9 1099.1 329.4"/>
<path d="M985.5 391.2 C986.6 392.3 986.4 396.2 991.8 398.0 C997.2 399.8 1009.4 402.0 1018.0 402.0 C1026.6 402.0 1035.9 395.2 1043.4 397.8 C1050.9 400.4 1062.0 414.1 1063.0 417.6 C1064.1 421.1 1050.0 420.5 1049.6 418.6 C1049.1 416.7 1055.9 410.2 1060.4 406.2 C1064.9 402.3 1074.2 394.9 1076.6 395.0 C1079.0 395.0 1076.8 406.9 1074.8 406.5 C1072.9 406.0 1067.2 400.1 1065.1 392.3 C1063.0 384.4 1058.6 367.4 1062.3 359.3 C1066.0 351.2 1080.7 346.7 1087.1 343.7 C1093.6 340.7 1098.7 341.6 1101.0 341.2"/>
<path d="M962.5 418.8 C965.4 421.0 970.9 428.8 980.2 432.0 C989.4 435.2 1009.3 438.0 1018.0 438.0 C1026.7 438.0 1029.5 431.4 1032.6 432.2 C1035.8 432.9 1031.6 439.2 1037.0 442.4 C1042.3 445.6 1056.7 452.8 1064.4 451.4 C1072.2 449.9 1077.4 438.8 1083.6 433.8 C1089.8 428.7 1097.1 427.4 1101.4 421.0 C1105.7 414.7 1109.6 402.4 1109.2 395.5 C1108.7 388.7 1101.1 383.5 1098.9 379.7 C1096.6 375.9 1096.0 372.9 1095.7 372.7 C1095.4 372.5 1095.0 377.7 1096.9 378.3 C1098.7 379.0 1105.3 377.0 1107.0 376.8"/>
<path d="M954.8 428.0 C958.4 430.6 965.8 439.7 976.3 443.4 C986.9 447.1 1009.2 450.0 1018.0 450.0 C1026.8 450.0 1027.3 443.5 1029.1 443.6 C1030.8 443.7 1021.5 447.5 1028.3 450.7 C1035.0 453.8 1058.9 463.6 1069.4 462.3 C1079.9 461.0 1084.6 448.4 1091.3 442.9 C1098.1 437.5 1104.8 438.3 1109.7 429.7 C1114.5 421.2 1120.5 400.9 1120.6 391.9 C1120.7 382.9 1112.4 378.0 1110.1 375.6 C1107.8 373.1 1108.5 374.8 1106.9 377.1 C1105.2 379.5 1099.7 388.0 1100.1 389.9 C1100.4 391.8 1107.5 388.8 1108.9 388.6"/>
<path d="M1061.7 212.3 C1062.9 216.3 1067.4 229.8 1069.0 236.3 C1070.6 242.8 1069.2 247.4 1071.1 251.3 C1073.0 255.1 1076.0 256.3 1080.5 259.4 C1085.0 262.4 1092.8 266.1 1098.0 269.6 C1103.2 273.1 1106.4 273.7 1111.7 280.4 C1117.1 287.1 1127.6 301.1 1130.1 309.7 C1132.7 318.3 1127.0 326.7 1127.0 332.0 C1127.0 337.3 1129.5 339.4 1130.0 341.5 C1130.6 343.5 1133.1 345.2 1130.2 344.4 C1127.3 343.7 1111.9 339.2 1112.6 337.0 C1113.3 334.9 1127.2 333.5 1134.3 331.8 C1141.5 330.0 1150.6 328.9 1155.4 326.8 C1160.2 324.6 1157.8 322.7 1163.0 318.7 C1168.3 314.8 1177.4 305.6 1186.9 303.1 C1196.4 300.6 1209.6 301.3 1220.0 303.6 C1230.5 306.0 1243.7 312.7 1249.7 317.3 C1255.7 321.9 1259.7 329.2 1255.8 331.5 C1252.0 333.8 1230.2 333.6 1226.8 331.0 C1223.4 328.3 1229.8 319.7 1235.3 315.6 C1240.7 311.5 1252.8 309.2 1259.5 306.3 C1266.2 303.3 1268.9 299.7 1275.5 297.9 C1282.1 296.2 1294.6 295.9 1299.1 295.8 C1303.5 295.7 1302.2 294.4 1302.5 297.2 C1302.8 300.0 1303.7 311.9 1300.8 312.7 C1298.0 313.5 1288.8 310.8 1285.3 302.0 C1281.8 293.3 1278.6 269.8 1280.0 260.3 C1281.4 250.8 1292.2 250.8 1293.6 245.1 C1295.0 239.4 1289.3 229.1 1288.4 225.9"/>
<path d="M1050.2 215.8 C1051.4 219.7 1055.6 232.5 1057.4 239.4 C1059.1 246.3 1058.1 252.2 1060.7 257.2 C1063.3 262.1 1068.0 265.1 1073.1 268.8 C1078.3 272.6 1086.7 276.5 1091.6 279.8 C1096.5 283.0 1098.1 282.8 1102.6 288.2 C1107.1 293.7 1116.4 305.3 1118.5 312.6 C1120.5 319.9 1115.0 326.7 1115.0 332.0 C1115.0 337.3 1117.6 341.4 1118.4 344.5 C1119.2 347.5 1120.8 349.5 1119.7 350.3 C1118.7 351.0 1109.1 350.2 1112.0 349.0 C1114.8 347.9 1128.9 345.3 1137.0 343.5 C1145.1 341.6 1154.8 340.2 1160.4 337.7 C1166.0 335.1 1165.7 331.9 1170.6 328.0 C1175.6 324.2 1182.3 316.8 1190.1 314.7 C1198.0 312.6 1209.1 313.5 1217.6 315.4 C1226.2 317.3 1236.4 321.8 1241.4 326.0 C1246.5 330.2 1249.1 338.1 1247.9 340.5 C1246.8 342.9 1235.3 342.8 1234.5 340.2 C1233.6 337.6 1237.8 328.7 1242.8 324.9 C1247.7 321.1 1258.2 319.9 1264.1 317.4 C1270.1 314.8 1272.2 311.2 1278.5 309.6 C1284.8 307.9 1296.3 308.2 1301.8 307.5 C1307.3 306.7 1309.8 305.1 1311.5 305.1 C1313.1 305.1 1314.4 309.3 1311.7 307.6 C1309.0 306.0 1298.6 302.4 1295.2 295.2 C1291.8 288.0 1289.5 272.5 1291.2 264.6 C1292.9 256.6 1303.8 254.2 1305.3 247.5 C1306.9 240.7 1301.1 227.9 1300.2 224.0"/>
<path d="M1015.8 226.2 C1016.9 230.0 1020.4 240.5 1022.6 248.6 C1024.9 256.7 1024.6 266.8 1029.3 274.8 C1034.0 282.9 1043.7 291.3 1050.9 297.2 C1058.1 303.1 1068.3 307.8 1072.4 310.2 C1076.5 312.7 1073.5 309.9 1075.4 311.8 C1077.2 313.6 1082.9 318.0 1083.5 321.4 C1084.1 324.7 1079.0 326.6 1079.0 332.0 C1079.0 337.4 1082.0 347.6 1083.6 353.5 C1085.1 359.5 1083.9 362.5 1088.3 367.7 C1092.7 373.0 1100.6 383.2 1110.0 385.0 C1119.5 386.8 1134.1 381.0 1145.0 378.5 C1155.9 376.1 1167.5 374.1 1175.6 370.3 C1183.6 366.6 1189.3 359.5 1193.4 356.0 C1197.4 352.5 1197.0 350.2 1199.9 349.3 C1202.7 348.4 1207.6 350.2 1210.4 350.6 C1213.2 351.1 1214.3 349.2 1216.6 352.0 C1218.9 354.8 1217.3 364.9 1224.1 367.5 C1230.9 370.1 1250.7 370.2 1257.5 367.8 C1264.4 365.4 1261.9 355.9 1265.2 353.1 C1268.6 350.2 1274.2 352.1 1277.9 350.6 C1281.6 349.2 1282.1 345.8 1287.5 344.4 C1292.9 343.1 1301.7 345.1 1310.2 342.5 C1318.7 339.9 1332.8 337.2 1338.5 328.9 C1344.2 320.5 1346.6 301.4 1344.3 292.4 C1342.0 283.3 1328.1 277.3 1324.8 274.8 C1321.6 272.3 1322.2 280.8 1324.8 277.4 C1327.5 274.1 1338.8 264.4 1340.7 254.5 C1342.5 244.6 1336.6 224.1 1335.8 218.0"/>
<path d="M1004.3 229.7 C1005.4 233.4 1008.6 243.2 1011.0 251.7 C1013.4 260.2 1013.5 271.6 1018.9 280.7 C1024.3 289.9 1035.6 300.0 1043.5 306.6 C1051.4 313.2 1062.2 318.2 1066.0 320.4 C1069.8 322.6 1065.3 319.0 1066.3 319.6 C1067.3 320.3 1071.8 322.2 1071.9 324.3 C1072.0 326.3 1067.0 326.6 1067.0 332.0 C1067.0 337.4 1070.2 349.6 1072.0 356.5 C1073.8 363.5 1071.5 366.8 1077.8 373.6 C1084.0 380.3 1097.7 394.2 1109.4 397.0 C1121.0 399.7 1135.8 392.9 1147.7 390.2 C1159.5 387.6 1171.7 385.4 1180.6 381.2 C1189.5 377.1 1197.2 368.6 1201.0 365.3 C1204.7 361.9 1202.0 361.4 1203.1 360.9 C1204.3 360.4 1207.1 362.4 1208.0 362.4 C1208.8 362.4 1206.9 358.3 1208.3 360.7 C1209.7 363.1 1206.7 373.8 1216.2 376.5 C1225.6 379.2 1255.8 379.4 1265.2 377.0 C1274.6 374.7 1269.9 365.0 1272.7 362.4 C1275.6 359.9 1279.5 362.8 1282.5 361.7 C1285.4 360.7 1285.4 357.3 1290.5 356.1 C1295.6 354.8 1303.4 357.4 1312.9 354.2 C1322.5 351.0 1340.5 348.0 1347.5 336.8 C1354.6 325.7 1357.3 298.7 1355.2 287.3 C1353.0 275.8 1337.9 268.9 1334.7 268.0 C1331.5 267.0 1333.1 283.6 1336.0 281.7 C1339.0 279.9 1350.5 267.8 1352.4 256.9 C1354.3 245.9 1348.4 222.9 1347.6 216.1"/>
<path d="M1304.7 398.7 C1309.0 392.5 1318.8 366.5 1330.8 361.7 C1342.7 356.8 1363.4 365.8 1376.5 369.5 C1389.6 373.3 1401.9 379.7 1409.2 384.1 C1416.5 388.5 1419.3 394.1 1420.5 395.9 C1421.6 397.8 1414.0 398.7 1416.2 395.1 C1418.5 391.6 1425.6 380.9 1434.0 374.8 C1442.3 368.7 1458.4 360.7 1466.4 358.5 C1474.5 356.4 1475.5 363.8 1482.4 362.0 C1489.3 360.2 1496.8 349.8 1507.6 347.7 C1518.4 345.5 1540.4 348.8 1546.9 349.1"/>
<path d="M1316.4 401.2 C1319.2 396.6 1323.9 376.8 1333.3 373.4 C1342.6 370.0 1361.1 377.4 1372.7 380.9 C1384.3 384.4 1395.6 390.0 1403.1 394.5 C1410.6 398.9 1414.2 405.8 1417.5 407.6 C1420.8 409.3 1418.9 409.0 1422.9 405.1 C1426.9 401.2 1434.0 389.9 1441.6 384.1 C1449.2 378.3 1461.3 372.1 1468.7 370.3 C1476.0 368.6 1478.5 375.4 1485.4 373.6 C1492.4 371.8 1500.0 361.5 1510.2 359.4 C1520.3 357.3 1540.2 360.8 1546.2 361.0"/>
<path d="M1351.6 408.8 C1349.8 408.7 1339.1 407.6 1340.7 408.6 C1342.4 409.7 1353.9 412.3 1361.3 415.1 C1368.7 417.9 1377.0 421.0 1384.9 425.5 C1392.8 430.1 1398.8 440.9 1408.5 442.4 C1418.2 444.0 1433.8 440.0 1443.1 434.9 C1452.4 429.8 1459.0 416.8 1464.4 411.9 C1469.8 407.0 1470.3 406.3 1475.3 405.7 C1480.4 405.1 1487.5 410.3 1494.6 408.4 C1501.6 406.6 1509.6 396.5 1517.8 394.6 C1526.1 392.7 1539.5 396.6 1543.8 397.0"/>
<path d="M1363.3 411.3 C1360.0 412.8 1344.2 417.8 1343.2 420.3 C1342.3 422.9 1351.6 423.9 1357.5 426.5 C1363.4 429.0 1370.8 431.3 1378.8 435.9 C1386.8 440.5 1393.7 452.6 1405.5 454.1 C1417.4 455.6 1438.7 450.3 1449.8 444.9 C1460.9 439.4 1467.4 425.8 1472.0 421.2 C1476.7 416.6 1473.3 417.7 1477.6 417.5 C1481.8 417.3 1490.5 421.9 1497.6 420.0 C1504.7 418.2 1512.8 408.2 1520.4 406.3 C1528.0 404.5 1539.3 408.5 1543.1 408.9"/>
<path d="M1562.6 457.0 C1562.0 457.0 1560.8 453.4 1558.7 457.0 C1556.6 460.6 1554.3 471.4 1550.1 478.8 C1545.9 486.2 1537.5 495.8 1533.4 501.4 C1529.4 507.0 1527.9 508.4 1525.8 512.4 C1523.8 516.5 1522.7 519.6 1521.0 525.7 C1519.3 531.8 1520.8 540.1 1515.4 548.9 C1510.0 557.7 1497.3 569.6 1488.7 578.8 C1480.0 588.0 1470.2 597.7 1463.3 604.0 C1456.5 610.4 1452.1 612.9 1447.6 616.7 C1443.1 620.6 1440.2 622.8 1436.2 627.1 C1432.3 631.5 1427.5 637.3 1423.9 642.8 C1420.2 648.3 1418.5 653.3 1414.4 659.9 C1410.3 666.5 1403.2 676.2 1399.2 682.3 C1395.2 688.3 1395.7 691.1 1390.2 696.2 C1384.8 701.3 1373.5 709.6 1366.5 712.7 C1359.6 715.8 1352.2 714.5 1348.6 714.8 C1344.9 715.0 1345.4 714.0 1344.6 714.2 C1343.7 714.4 1343.8 716.9 1343.4 716.0 C1343.0 715.1 1342.6 711.4 1342.4 708.9 C1342.2 706.4 1340.6 694.0 1342.1 700.8 C1343.5 707.7 1354.0 739.9 1351.2 750.2 C1348.4 760.5 1331.3 759.1 1325.2 762.9 C1319.1 766.6 1315.4 775.6 1314.6 772.5 C1313.7 769.5 1318.8 748.9 1320.1 744.7 C1321.4 740.6 1318.8 745.4 1322.2 747.8 C1325.6 750.2 1336.3 754.3 1340.5 759.2 C1344.8 764.1 1344.4 772.0 1347.8 777.1 C1351.2 782.2 1360.7 779.9 1360.7 789.6 C1360.8 799.2 1355.6 825.1 1347.9 835.1 C1340.1 845.2 1320.3 848.8 1314.2 849.8 C1308.2 850.9 1310.6 844.4 1311.5 841.6 C1312.5 838.8 1317.9 831.3 1320.2 833.1 C1322.6 834.9 1324.8 847.0 1325.6 852.4 C1326.5 857.8 1326.1 863.5 1325.3 865.6 C1324.5 867.7 1322.8 865.2 1320.9 864.9 C1318.9 864.6 1311.4 866.0 1313.5 863.5 C1315.6 861.1 1324.1 845.7 1333.5 850.2 C1342.9 854.7 1368.3 876.5 1369.8 890.6 C1371.3 904.6 1352.9 927.2 1342.5 934.5 C1332.1 941.7 1315.6 934.4 1307.3 933.9 C1299.1 933.4 1294.0 932.2 1293.1 931.6 C1292.2 931.0 1300.7 930.4 1302.2 930.2"/>
<path d="M1556.0 447.0 C1554.8 447.5 1551.6 445.9 1548.8 450.2 C1546.1 454.5 1543.8 465.5 1539.7 472.9 C1535.5 480.3 1527.7 488.8 1523.6 494.5 C1519.6 500.2 1517.5 502.4 1515.1 507.0 C1512.7 511.7 1511.0 516.7 1509.4 522.6 C1507.8 528.5 1510.2 534.6 1505.3 542.5 C1500.4 550.5 1488.3 561.7 1480.0 570.5 C1471.6 579.2 1461.9 589.0 1455.2 595.2 C1448.5 601.4 1444.4 603.7 1439.8 607.6 C1435.1 611.6 1431.6 614.3 1427.3 619.1 C1423.0 623.8 1417.8 630.3 1413.9 636.1 C1410.1 641.8 1408.4 646.9 1404.3 653.5 C1400.1 660.2 1392.9 670.1 1389.1 675.8 C1385.4 681.5 1386.3 683.4 1381.7 687.7 C1377.2 692.0 1367.7 699.1 1361.9 701.6 C1356.2 704.1 1351.0 702.5 1347.1 702.9 C1343.3 703.2 1341.1 702.6 1338.7 703.7 C1336.4 704.9 1334.6 708.3 1333.2 709.6 C1331.9 710.9 1330.4 711.2 1330.6 711.3 C1330.8 711.4 1332.4 705.0 1334.4 710.1 C1336.5 715.2 1345.3 734.7 1342.7 741.7 C1340.2 748.8 1325.1 748.9 1319.1 752.5 C1313.2 756.1 1308.9 763.9 1307.2 763.1 C1305.4 762.3 1307.4 748.8 1308.5 747.6 C1309.6 746.5 1309.9 753.0 1313.7 756.3 C1317.6 759.5 1327.5 762.5 1331.5 767.1 C1335.5 771.7 1334.9 779.4 1337.9 783.9 C1340.9 788.4 1349.2 787.2 1349.6 794.1 C1350.1 801.1 1347.2 818.1 1340.7 825.5 C1334.3 832.8 1317.4 836.9 1310.9 838.3 C1304.5 839.8 1302.5 834.6 1302.1 834.2 C1301.7 833.7 1306.6 832.5 1308.5 835.9 C1310.5 839.2 1312.9 848.8 1313.8 854.2 C1314.6 859.6 1313.6 864.8 1313.6 868.2 C1313.6 871.5 1313.1 873.4 1313.7 874.5 C1314.3 875.7 1314.2 877.0 1317.3 874.9 C1320.4 872.9 1325.3 859.3 1332.1 862.1 C1338.9 865.0 1356.8 881.8 1357.9 891.9 C1359.0 902.1 1346.9 918.1 1338.7 923.1 C1330.4 928.1 1316.3 922.5 1308.4 921.9 C1300.5 921.4 1293.5 919.8 1291.1 919.7 C1288.6 919.7 1293.3 921.4 1293.7 921.7"/>
<path d="M1536.0 417.0 C1533.2 419.2 1523.8 423.5 1519.2 429.8 C1514.6 436.1 1512.5 447.8 1508.3 455.1 C1504.2 462.4 1498.6 467.6 1494.4 473.5 C1490.1 479.5 1486.2 484.3 1482.9 491.0 C1479.6 497.6 1476.0 508.0 1474.6 513.4 C1473.2 518.8 1478.2 518.1 1474.7 523.5 C1471.3 528.8 1461.3 538.0 1454.0 545.5 C1446.7 553.1 1437.1 563.0 1430.8 568.8 C1424.5 574.6 1421.3 576.0 1416.2 580.4 C1411.2 584.7 1406.0 589.0 1400.7 594.9 C1395.3 600.8 1388.6 609.3 1384.1 615.9 C1379.6 622.5 1377.9 627.7 1373.7 634.5 C1369.5 641.2 1361.8 651.6 1358.9 656.2 C1356.0 660.9 1358.1 660.2 1356.3 662.3 C1354.5 664.3 1350.3 667.6 1348.1 668.4 C1345.8 669.2 1347.3 666.5 1342.9 667.1 C1338.4 667.8 1327.9 668.4 1321.3 672.3 C1314.6 676.1 1307.1 682.7 1302.8 690.4 C1298.5 698.1 1293.9 710.8 1295.4 718.7 C1296.8 726.6 1307.9 738.3 1311.6 737.9 C1315.2 737.5 1319.1 719.0 1317.3 716.3 C1315.5 713.5 1306.3 718.4 1300.9 721.5 C1295.5 724.6 1289.4 729.1 1284.8 734.9 C1280.3 740.7 1273.0 748.6 1273.5 756.4 C1274.1 764.2 1283.1 776.0 1288.3 781.7 C1293.4 787.5 1301.2 787.2 1304.5 790.9 C1307.8 794.6 1306.1 801.3 1308.1 804.1 C1310.1 807.0 1314.5 809.1 1316.4 807.9 C1318.2 806.6 1321.8 797.2 1319.3 796.5 C1316.7 795.8 1308.6 801.1 1301.1 803.7 C1293.5 806.2 1278.5 805.1 1273.9 811.8 C1269.3 818.6 1272.8 836.1 1273.5 844.1 C1274.2 852.1 1277.4 854.5 1278.2 859.8 C1279.0 865.1 1276.1 868.6 1278.4 875.8 C1280.8 883.1 1283.9 897.9 1292.3 903.5 C1300.7 909.0 1322.8 910.0 1328.7 909.1 C1334.6 908.1 1329.0 900.0 1327.9 897.9 C1326.8 895.7 1322.2 897.6 1322.1 896.1 C1322.0 894.6 1329.1 890.6 1327.3 888.9 C1325.6 887.3 1318.7 886.8 1311.6 886.1 C1304.5 885.3 1292.2 882.6 1284.9 884.3 C1277.7 886.0 1271.1 894.3 1268.3 896.3"/>
<path d="M1529.4 407.0 C1526.0 409.7 1514.5 416.0 1509.3 423.0 C1504.0 430.0 1502.0 441.9 1497.9 449.2 C1493.8 456.4 1488.9 460.5 1484.6 466.6 C1480.3 472.6 1475.8 478.3 1472.2 485.6 C1468.6 492.9 1464.3 505.1 1463.0 510.3 C1461.7 515.6 1467.5 512.6 1464.6 517.1 C1461.6 521.6 1452.3 530.1 1445.3 537.2 C1438.4 544.4 1428.8 554.3 1422.7 560.0 C1416.5 565.6 1413.6 566.8 1408.4 571.3 C1403.3 575.8 1397.5 580.5 1391.8 586.9 C1386.1 593.2 1378.8 602.3 1374.1 609.2 C1369.4 616.1 1367.8 621.3 1363.6 628.1 C1359.3 634.9 1351.4 645.5 1348.8 649.7 C1346.2 654.0 1348.7 652.5 1347.8 653.8 C1346.9 655.0 1344.5 657.1 1343.5 657.3 C1342.4 657.5 1346.1 654.5 1341.4 655.2 C1336.8 656.0 1323.6 657.0 1315.4 661.8 C1307.3 666.6 1297.9 674.1 1292.6 684.0 C1287.3 693.9 1281.7 710.6 1283.6 721.1 C1285.5 731.6 1299.7 749.4 1303.9 747.2 C1308.1 744.9 1310.3 713.8 1308.8 707.8 C1307.3 701.8 1300.0 708.2 1294.8 711.1 C1289.6 714.1 1282.9 717.4 1277.4 725.5 C1271.9 733.5 1261.5 748.5 1261.9 759.3 C1262.3 770.1 1274.2 783.6 1279.8 790.2 C1285.4 796.8 1292.4 795.4 1295.5 798.8 C1298.5 802.3 1296.6 808.6 1298.2 810.9 C1299.8 813.2 1302.9 816.4 1305.3 812.4 C1307.6 808.4 1313.4 790.3 1312.1 786.9 C1310.9 783.5 1305.7 789.2 1297.8 792.2 C1289.8 795.1 1270.4 795.3 1264.5 804.4 C1258.5 813.5 1261.5 837.3 1261.8 846.9 C1262.1 856.4 1265.5 856.4 1266.4 861.6 C1267.2 866.9 1263.6 869.8 1266.7 878.4 C1269.8 887.0 1274.2 906.1 1285.1 913.1 C1296.1 920.1 1325.6 921.0 1332.5 920.5 C1339.4 919.9 1330.2 913.6 1326.5 909.8 C1322.8 906.0 1310.7 902.8 1310.2 897.4 C1309.7 892.1 1323.1 881.4 1323.5 877.5 C1323.9 873.7 1319.4 875.0 1312.7 874.1 C1305.9 873.3 1291.7 870.2 1282.9 872.4 C1274.1 874.7 1263.6 885.2 1259.8 887.8"/>
<path d="M1308.7 919.5 C1309.9 923.0 1315.6 936.6 1315.9 940.6 C1316.2 944.6 1311.0 943.8 1310.3 943.6 C1309.7 943.4 1308.9 938.6 1312.0 939.6 C1315.1 940.6 1323.6 944.8 1329.0 949.8 C1334.4 954.7 1340.7 962.4 1344.6 969.2 C1348.6 976.0 1350.7 985.6 1352.7 990.5 C1354.8 995.4 1356.1 997.2 1356.8 998.6"/>
<path d="M1297.6 924.1 C1298.7 927.0 1303.6 937.5 1303.9 941.6 C1304.2 945.6 1299.1 947.2 1299.4 948.6 C1299.7 949.9 1301.9 948.0 1305.6 949.8 C1309.3 951.5 1316.7 954.9 1321.4 959.1 C1326.1 963.2 1330.6 968.7 1334.0 974.7 C1337.4 980.7 1339.6 990.2 1341.6 995.1 C1343.7 1000.0 1345.4 1002.5 1346.1 1004.0"/>
<path d="M1264.4 937.9 C1265.0 939.0 1267.7 940.2 1268.1 944.4 C1268.4 948.7 1263.6 957.5 1266.6 963.4 C1269.7 969.4 1281.1 976.3 1286.4 980.2 C1291.7 984.1 1296.0 985.1 1298.6 986.9 C1301.2 988.8 1300.4 987.6 1302.0 991.3 C1303.6 994.9 1306.4 1004.1 1308.4 1008.9 C1310.3 1013.7 1313.0 1018.2 1313.9 1020.0"/>
<path d="M1253.3 942.5 C1253.8 943.0 1255.7 941.1 1256.1 945.4 C1256.5 949.7 1251.7 960.9 1255.7 968.4 C1259.7 975.9 1274.1 985.8 1280.0 990.4 C1285.9 995.0 1289.1 995.2 1291.0 996.2 C1292.9 997.3 1290.3 993.9 1291.4 996.8 C1292.4 999.7 1295.3 1008.7 1297.3 1013.5 C1299.2 1018.2 1302.2 1023.4 1303.2 1025.4"/>
<path d="M1470.3 796.5 C1474.4 799.7 1489.0 807.2 1494.7 816.0 C1500.5 824.8 1503.5 842.0 1504.8 849.2 C1506.0 856.4 1501.1 856.4 1502.1 859.2 C1503.2 862.0 1506.8 862.6 1511.2 866.0 C1515.6 869.3 1525.6 877.2 1528.4 879.2 C1531.1 881.3 1528.3 878.6 1527.8 878.2 C1527.2 877.7 1525.5 876.8 1525.1 876.6"/>
<path d="M1463.4 806.3 C1467.0 809.0 1479.9 815.4 1484.8 822.8 C1489.7 830.2 1491.8 843.8 1492.9 850.7 C1493.9 857.6 1489.5 860.2 1491.3 864.3 C1493.1 868.4 1498.1 870.8 1503.5 875.2 C1508.9 879.5 1519.2 887.9 1523.8 890.3 C1528.4 892.8 1529.5 890.5 1531.1 889.7 C1532.6 888.9 1532.7 886.2 1533.0 885.5"/>
<path d="M1442.6 835.7 C1444.7 837.0 1452.7 839.9 1455.2 843.2 C1457.6 846.5 1456.6 849.2 1457.1 855.3 C1457.7 861.4 1454.8 871.8 1458.7 879.7 C1462.6 887.6 1471.9 895.5 1480.5 902.8 C1489.1 910.2 1500.1 920.1 1510.2 923.7 C1520.3 927.2 1533.1 926.2 1540.9 924.3 C1548.7 922.4 1554.3 914.4 1557.0 912.5"/>
<path d="M1435.7 845.5 C1437.3 846.3 1443.7 848.1 1445.3 850.0 C1446.9 851.9 1444.8 851.0 1445.2 856.8 C1445.7 862.6 1443.3 875.6 1447.9 884.8 C1452.5 894.0 1463.2 903.7 1472.8 912.0 C1482.4 920.4 1493.7 930.8 1505.6 934.8 C1517.5 938.7 1534.4 938.1 1544.2 935.8 C1554.1 933.6 1561.5 923.8 1564.9 921.4"/>
<path d="M1101.8 633.0 C1100.7 628.1 1096.5 612.6 1094.7 603.6 C1093.0 594.7 1090.6 585.8 1091.1 579.3 C1091.6 572.8 1095.2 570.9 1097.8 564.6 C1100.5 558.4 1099.6 547.6 1106.8 541.8 C1114.0 536.0 1130.6 530.7 1141.0 530.0 C1151.4 529.3 1161.5 533.7 1168.9 537.6 C1176.3 541.4 1180.1 548.2 1185.3 552.9 C1190.5 557.6 1195.9 560.8 1200.0 565.8 C1204.2 570.8 1210.2 580.6 1210.4 583.1 C1210.7 585.6 1201.3 581.3 1201.8 580.6 C1202.2 580.0 1206.9 579.0 1213.1 579.0 C1219.4 579.0 1232.0 577.5 1239.4 580.7 C1246.8 583.9 1253.1 593.9 1257.7 598.3 C1262.3 602.6 1266.0 605.1 1266.9 606.9 C1267.7 608.7 1264.2 609.2 1263.0 609.0 C1261.8 608.8 1259.2 607.1 1259.7 605.8 C1260.1 604.6 1264.6 602.3 1265.6 601.6"/>
<path d="M1113.5 630.2 C1112.3 625.4 1108.2 609.3 1106.4 601.0 C1104.7 592.7 1102.6 585.7 1103.1 580.4 C1103.5 575.0 1107.1 573.8 1109.1 568.8 C1111.1 563.8 1110.0 554.7 1115.3 550.3 C1120.6 545.8 1133.1 542.4 1141.0 542.0 C1148.9 541.6 1156.5 544.4 1162.5 547.7 C1168.6 551.0 1172.4 557.4 1177.2 561.7 C1181.9 566.0 1187.0 568.9 1190.8 573.5 C1194.7 578.1 1199.1 586.4 1200.3 589.5 C1201.4 592.5 1195.7 591.7 1197.9 592.0 C1200.1 592.2 1207.4 591.1 1213.5 591.0 C1219.6 590.9 1228.5 589.0 1234.4 591.6 C1240.4 594.2 1244.8 602.4 1249.0 606.6 C1253.2 610.7 1257.4 614.1 1259.7 616.5 C1262.0 618.9 1261.9 621.1 1263.0 621.0 C1264.1 620.9 1264.6 617.5 1266.2 615.9 C1267.8 614.3 1271.5 612.1 1272.5 611.4"/>
<path d="M1148.5 621.8 C1147.3 617.0 1143.1 599.4 1141.6 593.0 C1140.0 586.7 1138.7 585.6 1138.9 583.6 C1139.1 581.7 1142.6 582.5 1142.9 581.2 C1143.2 579.9 1141.0 576.3 1140.7 575.7 C1140.4 575.2 1140.5 577.6 1141.0 578.0 C1141.5 578.4 1141.5 576.6 1143.5 578.3 C1145.4 580.0 1149.6 585.2 1152.8 588.3 C1156.1 591.3 1160.4 593.1 1163.2 596.5 C1166.0 599.9 1165.9 603.6 1169.7 608.5 C1173.6 613.5 1178.7 622.9 1186.1 626.0 C1193.6 629.1 1208.9 627.3 1214.5 627.0 C1220.1 626.7 1218.1 623.6 1219.6 624.4 C1221.0 625.1 1219.9 627.9 1223.0 631.4 C1226.1 635.0 1231.6 641.2 1238.3 645.5 C1245.0 649.7 1255.1 656.9 1263.0 657.0 C1270.9 657.1 1280.7 648.8 1285.8 646.1 C1290.9 643.4 1292.2 641.6 1293.5 640.6"/>
<path d="M1160.2 619.0 C1159.0 614.2 1154.8 596.1 1153.3 590.4 C1151.7 584.6 1150.7 585.5 1150.9 584.7 C1151.0 583.9 1154.4 585.5 1154.2 585.4 C1153.9 585.3 1151.4 583.4 1149.2 584.2 C1147.0 585.0 1143.0 589.3 1141.0 590.0 C1139.0 590.7 1136.5 587.3 1137.1 588.4 C1137.7 589.6 1141.9 594.5 1144.7 597.1 C1147.5 599.7 1151.5 601.2 1154.0 604.2 C1156.4 607.2 1154.8 609.4 1159.6 614.9 C1164.3 620.4 1173.0 633.3 1182.2 637.4 C1191.4 641.4 1209.5 639.3 1214.9 639.0 C1220.3 638.6 1214.7 635.2 1214.6 635.3 C1214.5 635.4 1211.6 636.4 1214.3 639.7 C1217.1 643.0 1223.0 650.2 1231.1 655.1 C1239.3 660.0 1252.8 668.8 1263.0 669.0 C1273.2 669.2 1286.1 659.3 1292.3 656.2 C1298.6 653.1 1299.1 651.4 1300.4 650.4"/>
<path d="M1052.2 638.6 C1056.5 640.5 1070.6 647.2 1077.8 650.0 C1085.0 652.8 1087.2 651.4 1095.3 655.2 C1103.3 659.0 1120.5 661.9 1126.2 672.8 C1131.9 683.8 1131.6 710.7 1129.4 721.0 C1127.2 731.3 1116.7 728.5 1113.1 734.8 C1109.4 741.1 1110.0 750.8 1107.4 758.7 C1104.8 766.5 1099.2 778.0 1097.6 781.8"/>
<path d="M1047.3 649.6 C1051.7 651.5 1066.2 658.4 1073.5 661.2 C1080.7 664.0 1083.5 663.0 1090.8 666.3 C1098.1 669.6 1112.6 672.8 1117.3 680.9 C1122.1 688.9 1121.7 706.6 1119.2 714.6 C1116.8 722.6 1106.5 722.2 1102.7 728.9 C1098.8 735.6 1098.7 746.8 1096.0 754.8 C1093.4 762.8 1088.1 773.4 1086.5 777.1"/>
<path d="M1032.7 682.4 C1037.3 684.5 1053.1 691.9 1060.5 694.8 C1067.9 697.7 1072.2 698.0 1077.2 699.7 C1082.3 701.4 1088.8 705.8 1090.7 705.1 C1092.6 704.4 1092.0 694.4 1088.8 695.4 C1085.5 696.4 1075.8 703.1 1071.3 711.1 C1066.9 719.1 1064.9 734.6 1062.0 743.2 C1059.0 751.8 1054.9 759.6 1053.5 762.9"/>
<path d="M1027.8 693.4 C1032.5 695.5 1048.7 703.1 1056.2 706.0 C1063.7 708.9 1068.5 709.6 1072.7 710.8 C1077.0 712.0 1080.8 716.8 1081.8 713.2 C1082.8 709.5 1082.1 690.3 1078.6 689.0 C1075.1 687.7 1065.6 696.8 1060.9 705.2 C1056.2 713.6 1053.7 730.5 1050.6 739.3 C1047.5 748.2 1043.8 755.0 1042.4 758.2"/>
<path d="M952.9 495.1 C951.5 498.0 945.4 506.7 944.8 512.0 C944.3 517.4 948.2 521.5 949.4 527.0 C950.6 532.5 950.1 540.6 952.1 545.1 C954.1 549.6 956.8 549.8 961.2 553.8 C965.6 557.8 973.0 559.9 978.6 569.2 C984.2 578.5 995.8 598.1 995.0 609.5 C994.3 620.8 978.1 631.0 974.2 637.3 C970.3 643.6 974.6 641.2 971.9 647.1 C969.1 653.1 964.8 665.5 957.5 672.9 C950.2 680.2 936.2 686.0 928.2 691.2 C920.2 696.5 916.1 700.6 909.6 704.2 C903.2 707.8 892.8 711.3 889.4 712.7"/>
<path d="M941.7 490.7 C940.2 494.0 933.6 504.4 932.9 510.8 C932.2 517.3 936.2 522.8 937.6 529.4 C939.0 536.0 938.7 544.8 941.3 550.3 C943.8 555.7 947.9 557.7 952.7 562.3 C957.5 566.8 964.8 570.1 970.0 577.5 C975.1 584.9 984.4 597.6 983.4 606.5 C982.5 615.4 967.9 624.7 964.1 630.8 C960.3 636.8 963.2 637.1 960.7 642.7 C958.2 648.2 955.8 657.7 949.3 664.1 C942.8 670.5 929.3 676.2 921.7 681.1 C914.1 686.1 909.9 690.3 903.8 693.7 C897.6 697.1 888.0 700.3 884.9 701.6"/>
<path d="M908.3 477.3 C906.4 482.3 898.1 497.3 897.1 507.2 C896.1 517.1 900.4 526.8 902.4 536.6 C904.3 546.4 904.6 557.2 908.7 565.7 C912.9 574.3 921.4 581.6 927.3 587.7 C933.2 593.9 940.5 600.9 944.0 602.5 C947.6 604.1 950.3 596.0 948.6 597.5 C946.9 599.0 937.4 605.9 933.9 611.2 C930.3 616.5 928.8 624.9 927.3 629.3 C925.8 633.8 928.9 634.3 924.7 637.9 C920.5 641.5 908.7 646.8 902.3 650.9 C895.9 654.9 891.4 659.4 886.2 662.3 C881.0 665.2 873.7 667.3 871.1 668.4"/>
<path d="M897.1 472.9 C895.1 478.4 886.2 494.9 885.2 506.0 C884.1 517.0 888.5 528.2 890.6 539.0 C892.7 549.8 893.2 561.4 897.9 570.9 C902.6 580.4 912.5 589.6 918.8 596.2 C925.0 602.9 932.4 611.1 935.4 610.8 C938.4 610.5 938.9 595.5 937.0 594.5 C935.0 593.5 927.3 599.6 923.8 604.7 C920.3 609.8 917.4 620.8 916.1 624.9 C914.9 628.9 919.9 626.5 916.5 629.1 C913.1 631.8 901.8 637.0 895.8 640.8 C889.8 644.5 885.2 649.1 880.4 651.8 C875.5 654.6 868.9 656.4 866.6 657.3"/>
<path d="M952.6 575.2 C956.8 573.8 966.4 564.6 978.0 567.1 C989.6 569.5 1015.6 581.1 1022.4 589.7 C1029.2 598.4 1019.7 615.4 1018.9 619.0 C1018.1 622.6 1015.2 611.1 1017.6 611.3 C1020.0 611.5 1030.8 618.8 1033.4 620.3"/>
<path d="M958.0 585.9 C961.2 584.8 968.2 577.5 977.2 579.0 C986.2 580.6 1006.9 588.6 1011.8 595.4 C1016.8 602.2 1007.3 615.6 1007.0 619.8 C1006.6 624.0 1006.4 618.6 1009.8 620.4 C1013.1 622.2 1024.3 628.9 1027.3 630.6"/>
<path d="M974.0 618.1 C974.2 617.6 973.8 615.9 974.8 615.0 C975.8 614.0 980.8 611.4 980.2 612.6 C979.5 613.8 970.0 616.4 971.0 622.2 C972.1 628.0 980.0 641.1 986.2 647.6 C992.5 654.2 1005.0 659.1 1008.7 661.4"/>
<path d="M979.4 628.8 C978.5 628.5 975.6 628.7 974.0 626.9 C972.4 625.2 972.1 618.9 969.6 618.3 C967.1 617.6 957.6 616.6 959.1 623.0 C960.5 629.4 971.2 648.6 978.4 656.7 C985.7 664.8 998.5 669.2 1002.6 671.7"/>
<path d="M799.5 792.5 C803.9 791.5 816.4 785.0 826.0 786.1 C835.6 787.1 848.6 793.7 857.0 799.0 C865.4 804.3 870.5 812.5 876.5 818.1 C882.6 823.8 889.5 828.8 893.2 832.8 C896.9 836.9 896.7 839.7 898.7 842.4 C900.7 845.1 900.5 846.7 905.2 849.1 C909.9 851.6 921.2 853.3 927.0 857.3 C932.7 861.2 933.9 869.4 939.8 872.9 C945.8 876.4 954.0 875.4 962.8 878.3 C971.5 881.2 983.5 883.2 992.3 890.2 C1001.1 897.2 1010.7 911.5 1015.7 920.3 C1020.7 929.1 1020.2 937.2 1022.3 943.0 C1024.4 948.8 1027.2 953.3 1028.2 955.3"/>
<path d="M803.3 803.9 C807.0 802.9 817.4 797.3 825.2 798.0 C832.9 798.8 842.6 803.8 849.8 808.6 C857.0 813.4 862.6 821.5 868.3 826.9 C874.1 832.3 880.8 837.0 884.3 840.9 C887.9 844.8 887.2 847.1 889.6 850.2 C892.1 853.3 894.0 856.7 899.1 859.5 C904.2 862.3 914.4 863.2 920.2 867.2 C926.0 871.1 927.4 879.6 933.9 883.3 C940.4 887.1 950.8 887.1 959.3 889.8 C967.8 892.5 977.4 893.7 985.0 899.7 C992.6 905.7 1000.7 917.9 1005.0 925.8 C1009.3 933.7 1008.9 941.2 1011.0 947.0 C1013.0 952.8 1016.3 958.2 1017.3 960.4"/>
<path d="M814.7 838.1 C816.0 837.4 820.6 834.1 822.8 834.0 C825.1 833.8 824.7 834.2 828.2 837.4 C831.7 840.6 838.8 848.5 843.7 853.1 C848.6 857.7 854.6 861.7 857.7 865.1 C860.8 868.5 858.5 869.5 862.4 873.8 C866.2 878.0 874.6 886.7 880.9 890.5 C887.1 894.4 893.9 892.8 899.8 896.8 C905.7 900.9 908.0 910.1 916.1 914.7 C924.3 919.2 940.9 921.9 948.7 924.2 C956.5 926.5 959.0 925.3 963.0 928.3 C967.0 931.3 970.6 937.1 973.0 942.2 C975.3 947.3 975.1 953.4 977.0 959.0 C979.0 964.6 983.4 972.8 984.7 975.6"/>
<path d="M818.5 849.5 C819.1 848.9 821.6 846.3 822.0 845.9 C822.4 845.5 818.8 844.3 821.0 847.0 C823.2 849.7 830.8 857.5 835.5 861.9 C840.1 866.2 845.8 869.9 848.8 873.2 C851.8 876.5 849.0 877.0 853.3 881.6 C857.6 886.2 868.2 896.7 874.8 900.9 C881.4 905.0 887.1 902.7 893.0 906.7 C898.9 910.8 901.5 920.3 910.2 925.1 C918.9 929.9 937.6 933.6 945.2 935.7 C952.8 937.8 952.8 935.8 955.7 937.8 C958.5 939.8 960.6 943.5 962.3 947.7 C964.0 951.9 963.8 957.5 965.7 963.0 C967.6 968.5 972.5 977.7 973.8 980.7"/>
<path d="M773.5 853.1 C775.0 854.7 775.8 859.2 782.5 862.7 C789.2 866.3 800.7 868.9 813.7 874.4 C826.6 879.8 845.2 890.5 860.3 895.5 C875.4 900.5 893.5 902.8 904.3 904.3 C915.2 905.8 915.9 902.6 925.4 904.5 C934.9 906.4 951.6 911.4 961.3 915.6 C971.0 919.8 975.3 925.2 983.6 929.8 C991.9 934.4 1003.6 938.1 1011.1 943.3 C1018.5 948.5 1026.0 958.0 1028.3 960.9 C1030.6 963.8 1023.2 960.9 1024.8 960.8 C1026.4 960.6 1035.8 960.1 1038.0 960.0"/>
<path d="M765.3 861.8 C767.2 863.7 769.4 869.3 776.7 873.2 C784.0 877.2 795.7 879.8 809.0 885.4 C822.3 891.0 841.0 901.8 856.6 906.9 C872.2 912.0 891.5 914.6 902.6 916.2 C913.7 917.8 914.3 914.6 923.3 916.3 C932.2 918.0 947.3 922.6 956.4 926.6 C965.5 930.6 969.8 935.8 977.7 940.3 C985.7 944.7 997.2 948.3 1004.2 953.2 C1011.3 958.1 1017.2 966.5 1020.2 969.7 C1023.1 972.9 1019.1 972.1 1022.1 972.5 C1025.1 972.8 1035.3 972.1 1038.0 972.0"/>
<path d="M740.7 888.2 C743.8 890.9 750.3 899.7 759.3 904.8 C768.4 909.8 780.7 912.5 795.0 918.6 C809.4 924.6 828.3 935.6 845.4 941.1 C862.5 946.6 885.5 950.0 897.4 951.8 C909.3 953.6 909.4 950.4 916.7 951.7 C924.1 953.0 934.4 956.1 941.6 959.4 C948.9 962.8 953.2 967.8 960.3 971.7 C967.3 975.6 977.8 978.7 983.8 982.8 C989.7 986.9 990.8 992.1 995.8 996.3 C1000.9 1000.4 1006.9 1005.6 1013.9 1007.5 C1020.9 1009.5 1034.0 1007.9 1038.0 1008.0"/>
<path d="M732.5 896.9 C736.0 900.0 743.9 909.8 753.5 915.3 C763.2 920.7 775.6 923.4 790.3 929.6 C805.0 935.8 824.1 946.8 841.7 952.5 C859.2 958.2 883.5 961.9 895.7 963.7 C907.8 965.5 907.7 962.4 914.6 963.5 C921.4 964.6 930.1 967.2 936.7 970.4 C943.4 973.5 947.7 978.5 954.4 982.2 C961.1 985.9 971.4 988.9 976.9 992.7 C982.5 996.5 982.0 1000.7 987.7 1005.1 C993.4 1009.5 1002.8 1016.7 1011.2 1019.2 C1019.6 1021.7 1033.5 1019.9 1038.0 1020.0"/>
<path d="M1223.6 756.1 C1222.4 759.5 1219.4 775.5 1216.7 776.0 C1214.0 776.6 1206.1 761.7 1207.3 759.5 C1208.5 757.2 1217.7 760.2 1224.0 762.7 C1230.3 765.3 1241.5 771.3 1245.2 774.8 C1248.9 778.3 1243.0 782.1 1246.0 783.5 C1249.0 784.9 1256.5 783.3 1263.0 783.0 C1269.5 782.7 1277.9 779.0 1285.3 781.9 C1292.7 784.8 1303.7 797.5 1307.4 800.6"/>
<path d="M1212.1 752.5 C1210.9 756.1 1206.8 771.6 1204.8 774.4 C1202.9 777.2 1197.8 769.3 1200.4 769.3 C1202.9 769.2 1213.9 771.7 1220.0 774.0 C1226.1 776.4 1233.2 779.9 1236.7 783.3 C1240.3 786.7 1236.8 792.5 1241.2 794.5 C1245.6 796.5 1256.1 795.2 1263.0 795.0 C1269.9 794.8 1276.6 791.4 1282.4 793.5 C1288.1 795.6 1295.1 805.2 1297.6 807.5"/>
<path d="M1177.9 741.5 C1176.4 746.2 1168.9 760.1 1169.2 769.6 C1169.5 779.1 1173.2 792.3 1179.6 798.7 C1186.1 805.1 1202.7 806.3 1208.0 808.0 C1213.3 809.6 1208.1 805.5 1211.3 808.7 C1214.4 812.0 1218.2 823.8 1226.8 827.5 C1235.4 831.2 1255.2 830.8 1263.0 831.0 C1270.8 831.2 1272.7 828.9 1273.6 828.5 C1274.5 828.0 1269.2 828.5 1268.4 828.5"/>
<path d="M1166.4 737.9 C1164.9 742.9 1156.2 756.2 1157.3 768.0 C1158.3 779.8 1164.9 800.0 1172.7 808.5 C1180.5 817.1 1199.0 817.8 1204.0 819.3 C1209.0 820.7 1199.8 814.0 1202.8 817.2 C1205.8 820.4 1212.0 834.2 1222.0 838.5 C1232.0 842.8 1254.9 842.7 1263.0 843.0 C1271.1 843.3 1271.5 841.4 1270.7 840.1 C1270.0 838.8 1260.6 836.2 1258.6 835.4"/>
<path d="M1144.2 812.7 C1145.7 816.9 1150.9 828.4 1153.1 837.9 C1155.4 847.4 1157.4 861.2 1157.9 869.8 C1158.5 878.3 1154.2 883.0 1156.3 889.2 C1158.5 895.4 1166.4 901.0 1170.8 907.1 C1175.1 913.2 1177.9 919.2 1182.5 925.7 C1187.1 932.2 1192.8 939.3 1198.3 946.1 C1203.8 952.9 1210.8 960.3 1215.6 966.5 C1220.4 972.6 1224.0 979.0 1227.3 983.0 C1230.5 987.1 1233.9 989.5 1235.2 990.8"/>
<path d="M1132.9 816.8 C1134.3 820.8 1139.3 831.7 1141.5 840.7 C1143.7 849.7 1145.4 861.9 1146.0 870.7 C1146.5 879.4 1142.5 885.9 1145.0 893.1 C1147.5 900.3 1156.3 907.3 1160.9 913.9 C1165.5 920.4 1168.0 926.0 1172.7 932.6 C1177.4 939.2 1183.4 946.8 1189.0 953.7 C1194.6 960.6 1201.3 967.7 1206.2 973.9 C1211.0 980.1 1214.5 986.4 1218.0 990.6 C1221.4 994.9 1225.3 997.8 1226.7 999.3"/>
<path d="M1099.1 829.2 C1100.3 832.5 1104.7 841.9 1106.5 849.3 C1108.3 856.6 1109.3 864.1 1110.0 873.3 C1110.8 882.6 1107.5 894.8 1111.0 904.9 C1114.5 915.0 1125.7 926.1 1131.1 934.1 C1136.5 942.2 1138.3 946.4 1143.3 953.4 C1148.3 960.4 1155.3 969.2 1161.0 976.3 C1166.8 983.4 1173.0 989.9 1177.8 996.1 C1182.7 1002.3 1186.1 1008.6 1190.0 1013.4 C1194.0 1018.1 1199.4 1022.8 1201.3 1024.7"/>
<path d="M1087.8 833.3 C1089.0 836.4 1093.1 845.3 1094.9 852.1 C1096.6 859.0 1097.3 864.8 1098.1 874.2 C1098.9 883.7 1095.8 897.7 1099.7 908.8 C1103.5 919.9 1115.6 932.3 1121.2 940.9 C1126.9 949.5 1128.4 953.2 1133.5 960.3 C1138.6 967.5 1145.9 976.7 1151.7 983.9 C1157.5 991.1 1163.5 997.3 1168.4 1003.5 C1173.2 1009.7 1176.7 1016.0 1180.7 1021.0 C1184.8 1025.9 1190.8 1031.2 1192.8 1033.2"/>
</g>
<g fill="none" stroke="#45494e" stroke-width="2" stroke-linecap="round" stroke-linejoin="round" opacity=".85">
<path d="M873.0 220.0 C875.8 221.8 883.3 227.5 890.0 231.0 C896.7 234.5 907.2 234.8 913.0 241.0 C918.8 247.2 919.8 260.2 925.0 268.0 C930.2 275.8 935.8 281.8 944.0 288.0 C952.2 294.2 961.7 298.2 974.0 305.0 C986.3 311.8 1007.3 321.7 1018.0 329.0 C1028.7 336.3 1032.3 342.0 1038.0 349.0 C1043.7 356.0 1045.5 364.0 1052.0 371.0 C1058.5 378.0 1069.2 385.3 1077.0 391.0 C1084.8 396.7 1092.5 400.5 1099.0 405.0 C1105.5 409.5 1113.2 412.2 1116.0 418.0 C1118.8 423.8 1118.0 432.7 1116.0 440.0 C1114.0 447.3 1108.5 454.7 1104.0 462.0 C1099.5 469.3 1093.5 475.0 1089.0 484.0 C1084.5 493.0 1076.2 505.8 1077.0 516.0 C1077.8 526.2 1090.3 535.2 1094.0 545.0 C1097.7 554.8 1094.5 566.0 1099.0 575.0 C1103.5 584.0 1115.3 589.7 1121.0 599.0 C1126.7 608.3 1127.3 621.5 1133.0 631.0 C1138.7 640.5 1148.0 647.8 1155.0 656.0 C1162.0 664.2 1167.5 672.7 1175.0 680.0 C1182.5 687.3 1191.3 692.5 1200.0 700.0 C1208.7 707.5 1219.3 716.8 1227.0 725.0 C1234.7 733.2 1238.7 742.0 1246.0 749.0 C1253.3 756.0 1267.3 756.3 1271.0 767.0 C1274.7 777.7 1266.8 799.2 1268.0 813.0 C1269.2 826.8 1277.2 836.5 1278.0 850.0 C1278.8 863.5 1273.0 882.5 1273.0 894.0 C1273.0 905.5 1272.5 910.0 1278.0 919.0 C1283.5 928.0 1298.2 937.0 1306.0 948.0 C1313.8 959.0 1319.3 974.3 1325.0 985.0 C1330.7 995.7 1337.5 1007.5 1340.0 1012.0"/>
<path d="M1065.0 220.0 C1069.5 222.3 1083.8 229.3 1092.0 234.0 C1100.2 238.7 1108.7 241.2 1114.0 248.0 C1119.3 254.8 1121.7 265.2 1124.0 275.0 C1126.3 284.8 1125.7 298.0 1128.0 307.0 C1130.3 316.0 1131.0 321.7 1138.0 329.0 C1145.0 336.3 1163.0 345.7 1170.0 351.0 C1177.0 356.3 1177.2 354.3 1180.0 361.0 C1182.8 367.7 1185.3 381.2 1187.0 391.0 C1188.7 400.8 1187.2 412.7 1190.0 420.0 C1192.8 427.3 1201.7 429.2 1204.0 435.0 C1206.3 440.8 1206.3 448.5 1204.0 455.0 C1201.7 461.5 1192.8 469.2 1190.0 474.0 C1187.2 478.8 1192.8 478.7 1187.0 484.0 C1181.2 489.3 1165.5 498.7 1155.0 506.0 C1144.5 513.3 1131.3 519.3 1124.0 528.0 C1116.7 536.7 1113.5 544.8 1111.0 558.0 C1108.5 571.2 1110.7 590.7 1109.0 607.0 C1107.3 623.3 1103.5 643.0 1101.0 656.0 C1098.5 669.0 1098.5 674.8 1094.0 685.0 C1089.5 695.2 1078.8 706.3 1074.0 717.0 C1069.2 727.7 1068.2 737.8 1065.0 749.0 C1061.8 760.2 1060.0 772.0 1055.0 784.0 C1050.0 796.0 1038.7 810.8 1035.0 821.0 C1031.3 831.2 1034.2 832.8 1033.0 845.0 C1031.8 857.2 1029.7 877.7 1028.0 894.0 C1026.3 910.3 1024.3 923.3 1023.0 943.0 C1021.7 962.7 1020.5 1000.5 1020.0 1012.0"/>
<path d="M1114.0 248.0 C1118.5 246.0 1131.2 240.7 1141.0 236.0 C1150.8 231.3 1167.7 222.7 1173.0 220.0"/>
<path d="M1170.0 354.0 C1164.3 356.8 1145.0 364.8 1136.0 371.0 C1127.0 377.2 1122.2 384.5 1116.0 391.0 C1109.8 397.5 1103.0 401.8 1099.0 410.0 C1095.0 418.2 1092.0 431.7 1092.0 440.0 C1092.0 448.3 1096.2 452.7 1099.0 460.0 C1101.8 467.3 1106.8 477.8 1109.0 484.0 C1111.2 490.2 1110.0 494.2 1112.0 497.0 C1114.0 499.8 1118.5 496.7 1121.0 501.0 C1123.5 505.3 1126.0 519.3 1127.0 523.0"/>
<path d="M1099.0 460.0 C1106.0 459.5 1123.8 458.7 1141.0 457.0 C1158.2 455.3 1191.8 451.2 1202.0 450.0"/>
<path d="M1227.0 423.0 C1231.0 417.7 1244.2 400.0 1251.0 391.0 C1257.8 382.0 1263.0 372.7 1268.0 369.0 C1273.0 365.3 1270.7 371.5 1281.0 369.0 C1291.3 366.5 1314.5 359.3 1330.0 354.0 C1345.5 348.7 1360.0 344.3 1374.0 337.0 C1388.0 329.7 1400.8 318.7 1414.0 310.0 C1427.2 301.3 1442.5 290.0 1453.0 285.0 C1463.5 280.0 1469.3 287.7 1477.0 280.0 C1484.7 272.3 1492.3 247.2 1499.0 239.0 C1505.7 230.8 1509.3 232.8 1517.0 231.0 C1524.7 229.2 1540.3 228.5 1545.0 228.0"/>
<path d="M1224.0 463.0 C1230.5 462.2 1253.5 458.2 1263.0 458.0 C1272.5 457.8 1273.8 460.5 1281.0 462.0 C1288.2 463.5 1290.5 467.7 1306.0 467.0 C1321.5 466.3 1360.2 457.7 1374.0 458.0 C1387.8 458.3 1383.2 464.7 1389.0 469.0 C1394.8 473.3 1403.7 478.2 1409.0 484.0 C1414.3 489.8 1417.8 495.8 1421.0 504.0 C1424.2 512.2 1422.7 525.3 1428.0 533.0 C1433.3 540.7 1444.8 545.5 1453.0 550.0 C1461.2 554.5 1461.8 556.7 1477.0 560.0 C1492.2 563.3 1532.8 568.3 1544.0 570.0"/>
<path d="M1386.0 472.0 C1386.2 474.0 1386.5 473.8 1387.0 484.0 C1387.5 494.2 1387.0 521.2 1389.0 533.0 C1391.0 544.8 1394.2 548.5 1399.0 555.0 C1403.8 561.5 1412.3 565.8 1418.0 572.0 C1423.7 578.2 1428.5 585.0 1433.0 592.0 C1437.5 599.0 1442.2 605.3 1445.0 614.0 C1447.8 622.7 1449.5 634.7 1450.0 644.0 C1450.5 653.3 1450.3 660.7 1448.0 670.0 C1445.7 679.3 1438.8 686.8 1436.0 700.0 C1433.2 713.2 1432.3 735.0 1431.0 749.0 C1429.7 763.0 1428.5 771.2 1428.0 784.0 C1427.5 796.8 1427.2 811.7 1428.0 826.0 C1428.8 840.3 1430.5 854.5 1433.0 870.0 C1435.5 885.5 1438.0 904.7 1443.0 919.0 C1448.0 933.3 1457.7 940.5 1463.0 956.0 C1468.3 971.5 1473.0 1002.7 1475.0 1012.0"/>
<path d="M1018.0 491.0 C1026.2 489.8 1058.8 485.2 1067.0 484.0"/>
<path d="M753.0 715.0 C761.2 712.5 786.0 707.8 802.0 700.0 C818.0 692.2 838.0 679.5 849.0 668.0 C860.0 656.5 862.3 644.5 868.0 631.0 C873.7 617.5 877.7 600.8 883.0 587.0 C888.3 573.2 893.8 557.0 900.0 548.0 C906.2 539.0 911.8 539.5 920.0 533.0 C928.2 526.5 940.0 515.5 949.0 509.0 C958.0 502.5 962.5 497.8 974.0 494.0 C985.5 490.2 1010.7 487.3 1018.0 486.0"/>
<path d="M849.0 668.0 C850.5 670.8 856.5 674.8 858.0 685.0 C859.5 695.2 857.5 718.3 858.0 729.0 C858.5 739.7 865.0 742.3 861.0 749.0 C857.0 755.7 843.8 761.2 834.0 769.0 C824.2 776.8 815.5 790.3 802.0 796.0 C788.5 801.7 761.2 801.8 753.0 803.0"/>
<path d="M753.0 951.0 C760.3 946.8 788.8 933.3 797.0 926.0 C805.2 918.7 799.2 914.7 802.0 907.0 C804.8 899.3 808.7 887.0 814.0 880.0 C819.3 873.0 823.7 870.0 834.0 865.0 C844.3 860.0 864.2 855.0 876.0 850.0 C887.8 845.0 896.8 839.8 905.0 835.0 C913.2 830.2 917.7 824.5 925.0 821.0 C932.3 817.5 938.8 814.8 949.0 814.0 C959.2 813.2 974.5 814.8 986.0 816.0 C997.5 817.2 1010.2 819.3 1018.0 821.0 C1025.8 822.7 1030.5 825.2 1033.0 826.0"/>
<path d="M1428.0 826.0 C1421.8 826.0 1403.2 823.7 1391.0 826.0 C1378.8 828.3 1365.2 834.3 1355.0 840.0 C1344.8 845.7 1338.2 854.7 1330.0 860.0 C1321.8 865.3 1314.2 869.2 1306.0 872.0 C1297.8 874.8 1288.5 873.3 1281.0 877.0 C1273.5 880.7 1266.3 883.0 1261.0 894.0 C1255.7 905.0 1254.3 929.0 1249.0 943.0 C1243.7 957.0 1236.8 968.2 1229.0 978.0 C1221.2 987.8 1206.8 996.3 1202.0 1002.0 C1197.2 1007.7 1200.3 1010.3 1200.0 1012.0"/>
</g>
<g fill="none" stroke="#3b4c58" stroke-linecap="round" stroke-linejoin="round">
<path d="M812.0 220.0 C813.7 224.0 817.5 238.0 822.0 244.0 C826.5 250.0 832.8 251.5 839.0 256.0 C845.2 260.5 851.2 265.7 859.0 271.0 C866.8 276.3 879.2 282.0 886.0 288.0 C892.8 294.0 894.3 300.2 900.0 307.0 C905.7 313.8 913.3 322.0 920.0 329.0 C926.7 336.0 934.3 344.5 940.0 349.0 C945.7 353.5 950.8 352.3 954.0 356.0 C957.2 359.7 957.3 366.8 959.0 371.0 C960.7 375.2 961.5 375.3 964.0 381.0 C966.5 386.7 977.3 395.2 974.0 405.0 C970.7 414.8 952.2 432.2 944.0 440.0 C935.8 447.8 932.3 451.2 925.0 452.0 C917.7 452.8 904.5 451.2 900.0 445.0 C895.5 438.8 900.3 421.2 898.0 415.0 C895.7 408.8 892.5 407.5 886.0 408.0 C879.5 408.5 868.8 416.8 859.0 418.0 C849.2 419.2 836.8 418.7 827.0 415.0 C817.2 411.3 809.8 402.5 800.0 396.0 C790.2 389.5 775.8 378.8 768.0 376.0 C760.2 373.2 755.5 378.5 753.0 379.0" stroke-width="3"/>
<path d="M974.0 405.0 C976.0 406.7 978.7 412.5 986.0 415.0 C993.3 417.5 1009.3 420.0 1018.0 420.0 C1026.7 420.0 1032.7 413.3 1038.0 415.0 C1043.3 416.7 1046.8 426.7 1050.0 430.0 C1053.2 433.3 1053.3 436.7 1057.0 435.0 C1060.7 433.3 1066.7 424.5 1072.0 420.0 C1077.3 415.5 1085.7 411.2 1089.0 408.0 C1092.3 404.8 1093.2 404.7 1092.0 401.0 C1090.8 397.3 1084.2 391.8 1082.0 386.0 C1079.8 380.2 1077.3 370.2 1079.0 366.0 C1080.7 361.8 1087.8 362.2 1092.0 361.0 C1096.2 359.8 1102.0 359.3 1104.0 359.0" stroke-width="2.5"/>
<path d="M827.0 415.0 C824.8 418.3 819.0 428.0 814.0 435.0 C809.0 442.0 801.5 448.8 797.0 457.0 C792.5 465.2 789.0 475.3 787.0 484.0 C785.0 492.7 785.5 503.3 785.0 509.0 C784.5 514.7 784.0 512.8 784.0 518.0 C784.0 523.2 784.0 534.7 785.0 540.0 C786.0 545.3 790.5 547.0 790.0 550.0 C789.5 553.0 783.7 554.7 782.0 558.0 C780.3 561.3 780.3 565.2 780.0 570.0 C779.7 574.8 782.0 582.5 780.0 587.0 C778.0 591.5 772.5 595.0 768.0 597.0 C763.5 599.0 755.5 598.7 753.0 599.0" stroke-width="2"/>
<path d="M797.0 457.0 C801.2 461.5 817.8 479.5 822.0 484.0" stroke-width="2"/>
<path d="M922.0 452.0 C922.0 457.3 922.0 478.7 922.0 484.0" stroke-width="2"/>
<path d="M1033.0 221.0 C1034.2 224.8 1038.0 236.5 1040.0 244.0 C1042.0 251.5 1041.3 259.5 1045.0 266.0 C1048.7 272.5 1055.8 278.2 1062.0 283.0 C1068.2 287.8 1077.5 292.2 1082.0 295.0 C1086.5 297.8 1085.8 296.3 1089.0 300.0 C1092.2 303.7 1099.7 311.7 1101.0 317.0 C1102.3 322.3 1097.0 326.7 1097.0 332.0 C1097.0 337.3 1099.8 344.5 1101.0 349.0 C1102.2 353.5 1102.3 356.0 1104.0 359.0 C1105.7 362.0 1104.8 366.7 1111.0 367.0 C1117.2 367.3 1131.5 363.2 1141.0 361.0 C1150.5 358.8 1161.2 357.2 1168.0 354.0 C1174.8 350.8 1177.5 345.7 1182.0 342.0 C1186.5 338.3 1189.7 333.5 1195.0 332.0 C1200.3 330.5 1208.3 331.8 1214.0 333.0 C1219.7 334.2 1225.3 335.5 1229.0 339.0 C1232.7 342.5 1233.2 351.5 1236.0 354.0 C1238.8 356.5 1243.0 356.5 1246.0 354.0 C1249.0 351.5 1249.8 342.3 1254.0 339.0 C1258.2 335.7 1266.2 336.0 1271.0 334.0 C1275.8 332.0 1277.2 328.5 1283.0 327.0 C1288.8 325.5 1299.0 326.7 1306.0 325.0 C1313.0 323.3 1321.3 321.2 1325.0 317.0 C1328.7 312.8 1330.5 305.3 1328.0 300.0 C1325.5 294.7 1313.3 289.8 1310.0 285.0 C1306.7 280.2 1305.8 276.7 1308.0 271.0 C1310.2 265.3 1321.3 259.3 1323.0 251.0 C1324.7 242.7 1318.8 226.0 1318.0 221.0" stroke-width="2.5"/>
<path d="M1334.0 405.0 C1334.5 402.7 1331.5 392.2 1337.0 391.0 C1342.5 389.8 1357.5 394.8 1367.0 398.0 C1376.5 401.2 1386.3 405.5 1394.0 410.0 C1401.7 414.5 1406.5 423.3 1413.0 425.0 C1419.5 426.7 1426.3 424.5 1433.0 420.0 C1439.7 415.5 1446.5 403.3 1453.0 398.0 C1459.5 392.7 1465.8 389.2 1472.0 388.0 C1478.2 386.8 1483.0 392.8 1490.0 391.0 C1497.0 389.2 1504.8 379.0 1514.0 377.0 C1523.2 375.0 1539.8 378.7 1545.0 379.0" stroke-width="2.5"/>
<path d="M1546.0 432.0 C1544.0 433.3 1537.7 434.7 1534.0 440.0 C1530.3 445.3 1528.2 456.7 1524.0 464.0 C1519.8 471.3 1513.2 478.2 1509.0 484.0 C1504.8 489.8 1501.8 493.3 1499.0 499.0 C1496.2 504.7 1493.5 512.3 1492.0 518.0 C1490.5 523.7 1494.2 526.3 1490.0 533.0 C1485.8 539.7 1474.8 549.8 1467.0 558.0 C1459.2 566.2 1449.5 576.0 1443.0 582.0 C1436.5 588.0 1432.8 589.8 1428.0 594.0 C1423.2 598.2 1418.8 601.7 1414.0 607.0 C1409.2 612.3 1403.2 619.8 1399.0 626.0 C1394.8 632.2 1393.2 637.3 1389.0 644.0 C1384.8 650.7 1377.3 660.8 1374.0 666.0 C1370.7 671.2 1372.2 671.8 1369.0 675.0 C1365.8 678.2 1359.0 683.3 1355.0 685.0 C1351.0 686.7 1349.2 684.5 1345.0 685.0 C1340.8 685.5 1334.5 685.5 1330.0 688.0 C1325.5 690.5 1320.8 695.5 1318.0 700.0 C1315.2 704.5 1312.2 711.0 1313.0 715.0 C1313.8 719.0 1320.2 721.7 1323.0 724.0 C1325.8 726.3 1332.2 726.8 1330.0 729.0 C1327.8 731.2 1315.7 733.7 1310.0 737.0 C1304.3 740.3 1299.2 746.5 1296.0 749.0 C1292.8 751.5 1290.2 748.7 1291.0 752.0 C1291.8 755.3 1296.5 764.5 1301.0 769.0 C1305.5 773.5 1314.3 774.8 1318.0 779.0 C1321.7 783.2 1320.5 790.3 1323.0 794.0 C1325.5 797.7 1331.8 798.2 1333.0 801.0 C1334.2 803.8 1334.5 807.7 1330.0 811.0 C1325.5 814.3 1313.0 819.0 1306.0 821.0 C1299.0 823.0 1290.5 819.8 1288.0 823.0 C1285.5 826.2 1289.7 834.3 1291.0 840.0 C1292.3 845.7 1295.2 851.7 1296.0 857.0 C1296.8 862.3 1294.8 866.7 1296.0 872.0 C1297.2 877.3 1298.5 885.7 1303.0 889.0 C1307.5 892.3 1318.5 893.5 1323.0 892.0 C1327.5 890.5 1327.2 879.7 1330.0 880.0 C1332.8 880.3 1339.5 889.7 1340.0 894.0 C1340.5 898.3 1338.0 904.3 1333.0 906.0 C1328.0 907.7 1317.5 904.7 1310.0 904.0 C1302.5 903.3 1292.8 901.2 1288.0 902.0 C1283.2 902.8 1282.2 907.8 1281.0 909.0" stroke-width="3.5"/>
<path d="M1345.0 668.0 C1343.7 666.0 1343.5 658.8 1337.0 656.0 C1330.5 653.2 1314.2 653.0 1306.0 651.0 C1297.8 649.0 1292.2 647.7 1288.0 644.0 C1283.8 640.3 1281.3 632.8 1281.0 629.0 C1280.7 625.2 1282.7 623.0 1286.0 621.0 C1289.3 619.0 1297.0 619.0 1301.0 617.0 C1305.0 615.0 1308.5 610.3 1310.0 609.0" stroke-width="2"/>
<path d="M1323.0 670.0 C1323.3 671.7 1321.8 677.5 1325.0 680.0 C1328.2 682.5 1339.2 684.2 1342.0 685.0" stroke-width="2"/>
<path d="M1281.0 931.0 C1281.8 933.0 1285.7 938.8 1286.0 943.0 C1286.3 947.2 1281.3 952.3 1283.0 956.0 C1284.7 959.7 1291.5 962.2 1296.0 965.0 C1300.5 967.8 1306.3 970.0 1310.0 973.0 C1313.7 976.0 1315.5 978.2 1318.0 983.0 C1320.5 987.8 1323.0 997.2 1325.0 1002.0 C1327.0 1006.8 1329.2 1010.3 1330.0 1012.0" stroke-width="2.5"/>
<path d="M1453.0 821.0 C1455.8 823.0 1466.3 827.7 1470.0 833.0 C1473.7 838.3 1474.2 846.5 1475.0 853.0 C1475.8 859.5 1472.2 866.0 1475.0 872.0 C1477.8 878.0 1485.0 883.2 1492.0 889.0 C1499.0 894.8 1509.7 904.0 1517.0 907.0 C1524.3 910.0 1531.3 908.3 1536.0 907.0 C1540.7 905.7 1543.5 900.3 1545.0 899.0" stroke-width="2.5"/>
<path d="M1541.0 767.0 C1540.3 769.3 1536.3 777.3 1537.0 781.0 C1537.7 784.7 1543.7 787.7 1545.0 789.0" stroke-width="2"/>
<path d="M1131.0 626.0 C1129.8 621.2 1125.7 604.3 1124.0 597.0 C1122.3 589.7 1120.7 585.7 1121.0 582.0 C1121.3 578.3 1124.8 578.2 1126.0 575.0 C1127.2 571.8 1125.5 565.5 1128.0 563.0 C1130.5 560.5 1136.8 560.0 1141.0 560.0 C1145.2 560.0 1149.0 560.5 1153.0 563.0 C1157.0 565.5 1161.0 571.3 1165.0 575.0 C1169.0 578.7 1173.7 581.0 1177.0 585.0 C1180.3 589.0 1182.5 595.0 1185.0 599.0 C1187.5 603.0 1187.2 607.3 1192.0 609.0 C1196.8 610.7 1208.2 609.2 1214.0 609.0 C1219.8 608.8 1223.3 606.3 1227.0 608.0 C1230.7 609.7 1232.3 615.2 1236.0 619.0 C1239.7 622.8 1244.5 627.7 1249.0 631.0 C1253.5 634.3 1258.5 639.0 1263.0 639.0 C1267.5 639.0 1272.7 633.2 1276.0 631.0 C1279.3 628.8 1281.8 626.8 1283.0 626.0" stroke-width="2.5"/>
<path d="M1236.0 621.0 C1234.5 624.3 1231.5 637.2 1227.0 641.0 C1222.5 644.8 1212.0 643.5 1209.0 644.0" stroke-width="2.5"/>
<path d="M1229.0 645.0 C1229.0 646.8 1230.2 651.0 1229.0 656.0 C1227.8 661.0 1223.2 671.8 1222.0 675.0" stroke-width="3"/>
<path d="M1028.0 634.0 C1030.0 633.7 1038.0 632.3 1040.0 632.0" stroke-width="2"/>
<path d="M1018.0 644.0 C1020.8 645.2 1031.3 648.2 1035.0 651.0 C1038.7 653.8 1035.5 659.3 1040.0 661.0 C1044.5 662.7 1055.8 661.0 1062.0 661.0 C1068.2 661.0 1074.5 661.0 1077.0 661.0" stroke-width="2"/>
<path d="M1040.0 666.0 C1044.5 668.0 1059.7 675.2 1067.0 678.0 C1074.3 680.8 1077.8 680.5 1084.0 683.0 C1090.2 685.5 1100.7 689.3 1104.0 693.0 C1107.3 696.7 1106.8 700.5 1104.0 705.0 C1101.2 709.5 1091.2 712.7 1087.0 720.0 C1082.8 727.3 1081.8 740.7 1079.0 749.0 C1076.2 757.3 1071.5 766.5 1070.0 770.0" stroke-width="2.5"/>
<path d="M1018.0 656.0 C1018.8 660.0 1021.3 672.7 1023.0 680.0 C1024.7 687.3 1028.8 695.0 1028.0 700.0 C1027.2 705.0 1019.7 708.3 1018.0 710.0" stroke-width="2"/>
<path d="M790.0 550.0 C796.2 550.5 817.2 554.7 827.0 553.0 C836.8 551.3 845.3 542.2 849.0 540.0" stroke-width="2"/>
<path d="M824.0 484.0 C824.8 488.2 829.3 504.2 829.0 509.0 C828.7 513.8 823.2 512.3 822.0 513.0" stroke-width="2"/>
<path d="M829.0 494.0 C831.0 495.2 839.0 499.8 841.0 501.0" stroke-width="2"/>
<path d="M873.0 489.0 C877.5 488.5 895.5 486.5 900.0 486.0" stroke-width="2"/>
<path d="M925.0 484.0 C923.3 488.2 915.8 500.8 915.0 509.0 C914.2 517.2 918.3 524.8 920.0 533.0 C921.7 541.2 921.7 551.0 925.0 558.0 C928.3 565.0 934.7 569.7 940.0 575.0 C945.3 580.3 952.7 585.5 957.0 590.0 C961.3 594.5 967.3 596.8 966.0 602.0 C964.7 607.2 952.7 615.3 949.0 621.0 C945.3 626.7 946.0 631.0 944.0 636.0 C942.0 641.0 942.3 646.0 937.0 651.0 C931.7 656.0 919.0 661.5 912.0 666.0 C905.0 670.5 900.7 674.8 895.0 678.0 C889.3 681.2 880.8 683.8 878.0 685.0" stroke-width="2.5"/>
<path d="M940.0 575.0 C943.7 573.0 956.3 567.2 962.0 563.0 C967.7 558.8 971.2 556.7 974.0 550.0 C976.8 543.3 978.2 527.5 979.0 523.0" stroke-width="2"/>
<path d="M966.0 602.0 C967.7 601.2 971.0 596.7 976.0 597.0 C981.0 597.3 993.8 600.0 996.0 604.0 C998.2 608.0 988.7 616.0 989.0 621.0 C989.3 626.0 993.2 629.8 998.0 634.0 C1002.8 638.2 1014.7 644.0 1018.0 646.0" stroke-width="2.5"/>
<path d="M976.0 592.0 C978.2 588.7 984.8 577.7 989.0 572.0 C993.2 566.3 999.0 560.3 1001.0 558.0" stroke-width="2"/>
<path d="M935.0 651.0 C936.2 655.8 940.8 672.7 942.0 680.0 C943.2 687.3 941.2 690.5 942.0 695.0 C942.8 699.5 946.2 705.0 947.0 707.0" stroke-width="2"/>
<path d="M944.0 653.0 C947.3 655.8 959.0 664.7 964.0 670.0 C969.0 675.3 970.7 681.2 974.0 685.0 C977.3 688.8 982.3 691.7 984.0 693.0" stroke-width="2"/>
<path d="M753.0 609.0 C755.5 609.5 763.5 609.2 768.0 612.0 C772.5 614.8 777.7 622.0 780.0 626.0 C782.3 630.0 783.2 632.7 782.0 636.0 C780.8 639.3 777.8 643.5 773.0 646.0 C768.2 648.5 756.3 650.2 753.0 651.0" stroke-width="2"/>
<path d="M797.0 614.0 C797.5 616.8 796.3 624.8 800.0 631.0 C803.7 637.2 815.0 646.0 819.0 651.0 C823.0 656.0 823.2 659.3 824.0 661.0" stroke-width="2"/>
<path d="M800.0 597.0 C804.5 597.8 818.5 600.8 827.0 602.0 C835.5 603.2 847.0 603.7 851.0 604.0" stroke-width="2"/>
<path d="M1011.0 705.0 C1011.0 707.0 1011.5 713.2 1011.0 717.0 C1010.5 720.8 1008.5 726.2 1008.0 728.0" stroke-width="3"/>
<path d="M809.0 821.0 C811.5 820.2 819.0 815.7 824.0 816.0 C829.0 816.3 833.7 819.0 839.0 823.0 C844.3 827.0 850.7 835.0 856.0 840.0 C861.3 845.0 867.7 849.3 871.0 853.0 C874.3 856.7 872.8 858.3 876.0 862.0 C879.2 865.7 884.3 871.7 890.0 875.0 C895.7 878.3 904.2 878.0 910.0 882.0 C915.8 886.0 917.7 894.8 925.0 899.0 C932.3 903.2 945.8 904.5 954.0 907.0 C962.2 909.5 968.2 909.5 974.0 914.0 C979.8 918.5 985.7 927.5 989.0 934.0 C992.3 940.5 992.0 947.3 994.0 953.0 C996.0 958.7 999.8 965.5 1001.0 968.0" stroke-width="2.5"/>
<path d="M868.0 813.0 C868.8 815.8 873.0 824.7 873.0 830.0 C873.0 835.3 868.8 842.5 868.0 845.0" stroke-width="2"/>
<path d="M905.0 860.0 C905.8 862.8 909.2 874.2 910.0 877.0" stroke-width="2"/>
<path d="M854.0 868.0 C857.7 867.0 872.3 863.0 876.0 862.0" stroke-width="2"/>
<path d="M753.0 875.0 C755.5 877.3 759.8 884.5 768.0 889.0 C776.2 893.5 788.2 896.2 802.0 902.0 C815.8 907.8 834.7 918.7 851.0 924.0 C867.3 929.3 888.5 932.3 900.0 934.0 C911.5 935.7 911.8 932.5 920.0 934.0 C928.2 935.5 940.8 939.3 949.0 943.0 C957.2 946.7 961.5 951.8 969.0 956.0 C976.5 960.2 987.5 963.5 994.0 968.0 C1000.5 972.5 1004.0 979.3 1008.0 983.0 C1012.0 986.7 1013.0 988.8 1018.0 990.0 C1023.0 991.2 1034.7 990.0 1038.0 990.0" stroke-width="4"/>
<path d="M905.0 938.0 C902.5 940.2 894.0 946.8 890.0 951.0 C886.0 955.2 882.5 961.0 881.0 963.0" stroke-width="5"/>
<path d="M881.0 963.0 C880.2 966.3 875.2 978.5 876.0 983.0 C876.8 987.5 883.7 986.0 886.0 990.0 C888.3 994.0 889.3 1004.2 890.0 1007.0" stroke-width="2"/>
<path d="M876.0 983.0 C874.3 985.3 872.2 994.2 866.0 997.0 C859.8 999.8 845.5 998.3 839.0 1000.0 C832.5 1001.7 829.0 1005.8 827.0 1007.0" stroke-width="2"/>
<path d="M930.0 951.0 C929.2 955.5 926.3 971.8 925.0 978.0 C923.7 984.2 922.5 986.3 922.0 988.0" stroke-width="2"/>
<path d="M1013.0 762.0 C1012.2 764.8 1008.8 772.2 1008.0 779.0 C1007.2 785.8 1008.3 793.2 1008.0 803.0 C1007.7 812.8 1006.8 831.0 1006.0 838.0 C1005.2 845.0 1004.7 841.8 1003.0 845.0 C1001.3 848.2 996.0 852.0 996.0 857.0 C996.0 862.0 1001.3 866.8 1003.0 875.0 C1004.7 883.2 1004.7 895.0 1006.0 906.0 C1007.3 917.0 1012.3 932.7 1011.0 941.0 C1009.7 949.3 1000.2 953.5 998.0 956.0" stroke-width="2"/>
<path d="M981.0 838.0 C983.5 841.2 993.5 853.8 996.0 857.0" stroke-width="2"/>
<path d="M1195.0 747.0 C1193.7 751.2 1187.8 765.8 1187.0 772.0 C1186.2 778.2 1185.5 780.8 1190.0 784.0 C1194.5 787.2 1208.3 789.0 1214.0 791.0 C1219.7 793.0 1220.7 792.7 1224.0 796.0 C1227.3 799.3 1227.5 808.2 1234.0 811.0 C1240.5 813.8 1255.7 813.0 1263.0 813.0 C1270.3 813.0 1274.7 810.2 1278.0 811.0 C1281.3 811.8 1282.2 816.8 1283.0 818.0" stroke-width="2.5"/>
<path d="M1224.0 796.0 C1224.8 794.0 1228.2 786.0 1229.0 784.0" stroke-width="2"/>
<path d="M1212.0 880.0 C1214.8 880.0 1222.0 880.0 1229.0 880.0 C1236.0 880.0 1246.7 883.0 1254.0 880.0 C1261.3 877.0 1268.2 866.7 1273.0 862.0 C1277.8 857.3 1281.3 853.7 1283.0 852.0" stroke-width="2"/>
<path d="M1116.0 823.0 C1117.3 826.7 1122.0 836.8 1124.0 845.0 C1126.0 853.2 1127.3 863.0 1128.0 872.0 C1128.7 881.0 1125.0 890.3 1128.0 899.0 C1131.0 907.7 1141.0 916.7 1146.0 924.0 C1151.0 931.3 1153.2 936.2 1158.0 943.0 C1162.8 949.8 1169.3 958.0 1175.0 965.0 C1180.7 972.0 1187.2 978.8 1192.0 985.0 C1196.8 991.2 1200.3 997.5 1204.0 1002.0 C1207.7 1006.5 1212.3 1010.3 1214.0 1012.0" stroke-width="2.5"/>
<path d="M1097.0 828.0 C1098.2 830.0 1100.0 836.7 1104.0 840.0 C1108.0 843.3 1118.2 846.7 1121.0 848.0" stroke-width="2"/>
<path d="M1065.0 833.0 C1066.5 835.5 1069.5 844.0 1074.0 848.0 C1078.5 852.0 1083.3 852.5 1092.0 857.0 C1100.7 861.5 1120.3 872.0 1126.0 875.0" stroke-width="2"/>
<path d="M1060.0 853.0 C1062.3 852.2 1071.7 848.8 1074.0 848.0" stroke-width="2"/>
<path d="M1062.0 902.0 C1064.5 901.7 1070.8 897.7 1077.0 900.0 C1083.2 902.3 1089.7 911.2 1099.0 916.0 C1108.3 920.8 1125.2 927.7 1133.0 929.0 C1140.8 930.3 1143.8 924.8 1146.0 924.0" stroke-width="2"/>
<path d="M1116.0 943.0 C1118.8 940.7 1130.2 931.3 1133.0 929.0" stroke-width="2"/>
<path d="M1038.0 990.0 C1040.0 992.8 1048.0 1004.2 1050.0 1007.0" stroke-width="3"/>
<path d="M900.0 934.0 C903.3 934.0 911.8 932.5 920.0 934.0 C928.2 935.5 940.8 939.3 949.0 943.0 C957.2 946.7 961.5 951.8 969.0 956.0 C976.5 960.2 987.5 963.5 994.0 968.0 C1000.5 972.5 1005.7 980.5 1008.0 983.0" stroke-width="8"/>
<path d="M905.0 938.0 C902.5 940.2 894.0 946.8 890.0 951.0 C886.0 955.2 882.5 961.0 881.0 963.0" stroke-width="9"/>
<path d="M876.0 862.0 C878.3 864.2 884.3 871.7 890.0 875.0 C895.7 878.3 904.2 878.0 910.0 882.0 C915.8 886.0 917.7 894.8 925.0 899.0 C932.3 903.2 949.2 905.7 954.0 907.0" stroke-width="6"/>
<path d="M1146.0 924.0 C1148.0 927.2 1153.2 936.2 1158.0 943.0 C1162.8 949.8 1169.3 958.0 1175.0 965.0 C1180.7 972.0 1189.2 981.7 1192.0 985.0" stroke-width="6"/>
<path d="M1128.0 890.0 C1128.0 891.5 1126.0 894.8 1128.0 899.0 C1130.0 903.2 1138.0 912.3 1140.0 915.0" stroke-width="5"/>
<path d="M1283.0 956.0 C1285.2 957.5 1291.5 962.2 1296.0 965.0 C1300.5 967.8 1306.3 970.0 1310.0 973.0 C1313.7 976.0 1316.7 981.3 1318.0 983.0" stroke-width="6"/>
<path d="M1288.0 830.0 C1288.5 831.7 1289.7 835.5 1291.0 840.0 C1292.3 844.5 1295.2 854.2 1296.0 857.0" stroke-width="7"/>
<path d="M1467.0 558.0 C1463.0 562.0 1449.5 576.0 1443.0 582.0 C1436.5 588.0 1432.8 589.8 1428.0 594.0 C1423.2 598.2 1418.8 601.7 1414.0 607.0 C1409.2 612.3 1403.2 619.8 1399.0 626.0 C1394.8 632.2 1393.2 637.3 1389.0 644.0 C1384.8 650.7 1377.3 660.8 1374.0 666.0 C1370.7 671.2 1372.2 671.8 1369.0 675.0 C1365.8 678.2 1357.3 683.3 1355.0 685.0" stroke-width="5"/>
<path d="M1534.0 440.0 C1532.3 444.0 1528.2 456.7 1524.0 464.0 C1519.8 471.3 1511.5 480.7 1509.0 484.0" stroke-width="6"/>
<path d="M1168.0 354.0 C1170.3 352.0 1177.5 345.7 1182.0 342.0 C1186.5 338.3 1189.7 333.5 1195.0 332.0 C1200.3 330.5 1208.3 331.8 1214.0 333.0 C1219.7 334.2 1225.3 335.5 1229.0 339.0 C1232.7 342.5 1233.2 351.5 1236.0 354.0 C1238.8 356.5 1244.3 354.0 1246.0 354.0" stroke-width="5"/>
<path d="M900.0 445.0 C904.2 446.2 917.7 452.8 925.0 452.0 C932.3 451.2 935.8 447.8 944.0 440.0 C952.2 432.2 969.0 410.8 974.0 405.0" stroke-width="7"/>
<path d="M1092.0 361.0 C1094.0 360.7 1100.8 358.0 1104.0 359.0 C1107.2 360.0 1109.8 365.7 1111.0 367.0" stroke-width="5"/>
<path d="M1082.0 295.0 C1083.2 295.8 1085.8 296.3 1089.0 300.0 C1092.2 303.7 1099.0 314.2 1101.0 317.0" stroke-width="5"/>
<path d="M780.0 560.0 C780.0 564.5 780.0 582.5 780.0 587.0" stroke-width="5"/>
<path d="M1229.0 645.0 C1229.0 646.8 1230.2 651.0 1229.0 656.0 C1227.8 661.0 1223.2 671.8 1222.0 675.0" stroke-width="5"/>
<path d="M1040.0 661.0 C1043.7 661.0 1055.8 661.0 1062.0 661.0 C1068.2 661.0 1074.5 661.0 1077.0 661.0" stroke-width="4"/>
<path d="M920.0 533.0 C920.8 537.2 921.7 551.0 925.0 558.0 C928.3 565.0 937.5 572.2 940.0 575.0" stroke-width="5"/>
<path d="M1003.0 865.0 C1003.5 871.8 1005.5 899.2 1006.0 906.0" stroke-width="4"/>
</g>
<g fill="none" stroke="#465866" stroke-linecap="round" stroke-linejoin="round">
<path d="M812.0 220.0 C813.7 224.0 817.5 238.0 822.0 244.0 C826.5 250.0 832.8 251.5 839.0 256.0 C845.2 260.5 851.2 265.7 859.0 271.0 C866.8 276.3 879.2 282.0 886.0 288.0 C892.8 294.0 894.3 300.2 900.0 307.0 C905.7 313.8 913.3 322.0 920.0 329.0 C926.7 336.0 934.3 344.5 940.0 349.0 C945.7 353.5 950.8 352.3 954.0 356.0 C957.2 359.7 957.3 366.8 959.0 371.0 C960.7 375.2 961.5 375.3 964.0 381.0 C966.5 386.7 977.3 395.2 974.0 405.0 C970.7 414.8 952.2 432.2 944.0 440.0 C935.8 447.8 932.3 451.2 925.0 452.0 C917.7 452.8 904.5 451.2 900.0 445.0 C895.5 438.8 900.3 421.2 898.0 415.0 C895.7 408.8 892.5 407.5 886.0 408.0 C879.5 408.5 868.8 416.8 859.0 418.0 C849.2 419.2 836.8 418.7 827.0 415.0 C817.2 411.3 809.8 402.5 800.0 396.0 C790.2 389.5 775.8 378.8 768.0 376.0 C760.2 373.2 755.5 378.5 753.0 379.0" stroke-width="1"/>
<path d="M1546.0 432.0 C1544.0 433.3 1537.7 434.7 1534.0 440.0 C1530.3 445.3 1528.2 456.7 1524.0 464.0 C1519.8 471.3 1513.2 478.2 1509.0 484.0 C1504.8 489.8 1501.8 493.3 1499.0 499.0 C1496.2 504.7 1493.5 512.3 1492.0 518.0 C1490.5 523.7 1494.2 526.3 1490.0 533.0 C1485.8 539.7 1474.8 549.8 1467.0 558.0 C1459.2 566.2 1449.5 576.0 1443.0 582.0 C1436.5 588.0 1432.8 589.8 1428.0 594.0 C1423.2 598.2 1418.8 601.7 1414.0 607.0 C1409.2 612.3 1403.2 619.8 1399.0 626.0 C1394.8 632.2 1393.2 637.3 1389.0 644.0 C1384.8 650.7 1377.3 660.8 1374.0 666.0 C1370.7 671.2 1372.2 671.8 1369.0 675.0 C1365.8 678.2 1359.0 683.3 1355.0 685.0 C1351.0 686.7 1349.2 684.5 1345.0 685.0 C1340.8 685.5 1334.5 685.5 1330.0 688.0 C1325.5 690.5 1320.8 695.5 1318.0 700.0 C1315.2 704.5 1312.2 711.0 1313.0 715.0 C1313.8 719.0 1320.2 721.7 1323.0 724.0 C1325.8 726.3 1332.2 726.8 1330.0 729.0 C1327.8 731.2 1315.7 733.7 1310.0 737.0 C1304.3 740.3 1299.2 746.5 1296.0 749.0 C1292.8 751.5 1290.2 748.7 1291.0 752.0 C1291.8 755.3 1296.5 764.5 1301.0 769.0 C1305.5 773.5 1314.3 774.8 1318.0 779.0 C1321.7 783.2 1320.5 790.3 1323.0 794.0 C1325.5 797.7 1331.8 798.2 1333.0 801.0 C1334.2 803.8 1334.5 807.7 1330.0 811.0 C1325.5 814.3 1313.0 819.0 1306.0 821.0 C1299.0 823.0 1290.5 819.8 1288.0 823.0 C1285.5 826.2 1289.7 834.3 1291.0 840.0 C1292.3 845.7 1295.2 851.7 1296.0 857.0 C1296.8 862.3 1294.8 866.7 1296.0 872.0 C1297.2 877.3 1298.5 885.7 1303.0 889.0 C1307.5 892.3 1318.5 893.5 1323.0 892.0 C1327.5 890.5 1327.2 879.7 1330.0 880.0 C1332.8 880.3 1339.5 889.7 1340.0 894.0 C1340.5 898.3 1338.0 904.3 1333.0 906.0 C1328.0 907.7 1317.5 904.7 1310.0 904.0 C1302.5 903.3 1292.8 901.2 1288.0 902.0 C1283.2 902.8 1282.2 907.8 1281.0 909.0" stroke-width="1.5"/>
<path d="M1229.0 645.0 C1229.0 646.8 1230.2 651.0 1229.0 656.0 C1227.8 661.0 1223.2 671.8 1222.0 675.0" stroke-width="1"/>
<path d="M1011.0 705.0 C1011.0 707.0 1011.5 713.2 1011.0 717.0 C1010.5 720.8 1008.5 726.2 1008.0 728.0" stroke-width="1"/>
<path d="M753.0 875.0 C755.5 877.3 759.8 884.5 768.0 889.0 C776.2 893.5 788.2 896.2 802.0 902.0 C815.8 907.8 834.7 918.7 851.0 924.0 C867.3 929.3 888.5 932.3 900.0 934.0 C911.5 935.7 911.8 932.5 920.0 934.0 C928.2 935.5 940.8 939.3 949.0 943.0 C957.2 946.7 961.5 951.8 969.0 956.0 C976.5 960.2 987.5 963.5 994.0 968.0 C1000.5 972.5 1004.0 979.3 1008.0 983.0 C1012.0 986.7 1013.0 988.8 1018.0 990.0 C1023.0 991.2 1034.7 990.0 1038.0 990.0" stroke-width="2"/>
<path d="M905.0 938.0 C902.5 940.2 894.0 946.8 890.0 951.0 C886.0 955.2 882.5 961.0 881.0 963.0" stroke-width="3"/>
<path d="M1038.0 990.0 C1040.0 992.8 1048.0 1004.2 1050.0 1007.0" stroke-width="1"/>
<path d="M900.0 934.0 C903.3 934.0 911.8 932.5 920.0 934.0 C928.2 935.5 940.8 939.3 949.0 943.0 C957.2 946.7 961.5 951.8 969.0 956.0 C976.5 960.2 987.5 963.5 994.0 968.0 C1000.5 972.5 1005.7 980.5 1008.0 983.0" stroke-width="6"/>
<path d="M905.0 938.0 C902.5 940.2 894.0 946.8 890.0 951.0 C886.0 955.2 882.5 961.0 881.0 963.0" stroke-width="7"/>
<path d="M876.0 862.0 C878.3 864.2 884.3 871.7 890.0 875.0 C895.7 878.3 904.2 878.0 910.0 882.0 C915.8 886.0 917.7 894.8 925.0 899.0 C932.3 903.2 949.2 905.7 954.0 907.0" stroke-width="4"/>
<path d="M1146.0 924.0 C1148.0 927.2 1153.2 936.2 1158.0 943.0 C1162.8 949.8 1169.3 958.0 1175.0 965.0 C1180.7 972.0 1189.2 981.7 1192.0 985.0" stroke-width="4"/>
<path d="M1128.0 890.0 C1128.0 891.5 1126.0 894.8 1128.0 899.0 C1130.0 903.2 1138.0 912.3 1140.0 915.0" stroke-width="3"/>
<path d="M1283.0 956.0 C1285.2 957.5 1291.5 962.2 1296.0 965.0 C1300.5 967.8 1306.3 970.0 1310.0 973.0 C1313.7 976.0 1316.7 981.3 1318.0 983.0" stroke-width="4"/>
<path d="M1288.0 830.0 C1288.5 831.7 1289.7 835.5 1291.0 840.0 C1292.3 844.5 1295.2 854.2 1296.0 857.0" stroke-width="5"/>
<path d="M1467.0 558.0 C1463.0 562.0 1449.5 576.0 1443.0 582.0 C1436.5 588.0 1432.8 589.8 1428.0 594.0 C1423.2 598.2 1418.8 601.7 1414.0 607.0 C1409.2 612.3 1403.2 619.8 1399.0 626.0 C1394.8 632.2 1393.2 637.3 1389.0 644.0 C1384.8 650.7 1377.3 660.8 1374.0 666.0 C1370.7 671.2 1372.2 671.8 1369.0 675.0 C1365.8 678.2 1357.3 683.3 1355.0 685.0" stroke-width="3"/>
<path d="M1534.0 440.0 C1532.3 444.0 1528.2 456.7 1524.0 464.0 C1519.8 471.3 1511.5 480.7 1509.0 484.0" stroke-width="4"/>
<path d="M1168.0 354.0 C1170.3 352.0 1177.5 345.7 1182.0 342.0 C1186.5 338.3 1189.7 333.5 1195.0 332.0 C1200.3 330.5 1208.3 331.8 1214.0 333.0 C1219.7 334.2 1225.3 335.5 1229.0 339.0 C1232.7 342.5 1233.2 351.5 1236.0 354.0 C1238.8 356.5 1244.3 354.0 1246.0 354.0" stroke-width="3"/>
<path d="M900.0 445.0 C904.2 446.2 917.7 452.8 925.0 452.0 C932.3 451.2 935.8 447.8 944.0 440.0 C952.2 432.2 969.0 410.8 974.0 405.0" stroke-width="5"/>
<path d="M1092.0 361.0 C1094.0 360.7 1100.8 358.0 1104.0 359.0 C1107.2 360.0 1109.8 365.7 1111.0 367.0" stroke-width="3"/>
<path d="M1082.0 295.0 C1083.2 295.8 1085.8 296.3 1089.0 300.0 C1092.2 303.7 1099.0 314.2 1101.0 317.0" stroke-width="3"/>
<path d="M780.0 560.0 C780.0 564.5 780.0 582.5 780.0 587.0" stroke-width="3"/>
<path d="M1229.0 645.0 C1229.0 646.8 1230.2 651.0 1229.0 656.0 C1227.8 661.0 1223.2 671.8 1222.0 675.0" stroke-width="3"/>
<path d="M1040.0 661.0 C1043.7 661.0 1055.8 661.0 1062.0 661.0 C1068.2 661.0 1074.5 661.0 1077.0 661.0" stroke-width="2"/>
<path d="M920.0 533.0 C920.8 537.2 921.7 551.0 925.0 558.0 C928.3 565.0 937.5 572.2 940.0 575.0" stroke-width="3"/>
<path d="M1003.0 865.0 C1003.5 871.8 1005.5 899.2 1006.0 906.0" stroke-width="2"/>
</g>
<g fill="#3b4c58">
<ellipse cx="964" cy="382" rx="6" ry="9" transform="rotate(20 964 382)"/>
<ellipse cx="1089" cy="300" rx="7" ry="12" transform="rotate(-50 1089 300)"/>
<ellipse cx="1104" cy="359" rx="6" ry="8" transform="rotate(0 1104 359)"/>
<ellipse cx="780" cy="570" rx="4" ry="11" transform="rotate(0 780 570)"/>
<ellipse cx="925" cy="556" rx="4" ry="12" transform="rotate(-10 925 556)"/>
<ellipse cx="996" cy="604" rx="9" ry="6" transform="rotate(10 996 604)"/>
<ellipse cx="1011" cy="717" rx="4" ry="12" transform="rotate(0 1011 717)"/>
<ellipse cx="1126" cy="575" rx="3" ry="7" transform="rotate(0 1126 575)"/>
<ellipse cx="1229" cy="656" rx="5" ry="14" transform="rotate(10 1229 656)"/>
<ellipse cx="1062" cy="661" rx="9" ry="4" transform="rotate(0 1062 661)"/>
<ellipse cx="1028" cy="700" rx="4" ry="8" transform="rotate(0 1028 700)"/>
<ellipse cx="1334" cy="405" rx="6" ry="5" transform="rotate(0 1334 405)"/>
<ellipse cx="1534" cy="448" rx="6" ry="16" transform="rotate(25 1534 448)"/>
<ellipse cx="1369" cy="675" rx="5" ry="10" transform="rotate(30 1369 675)"/>
<ellipse cx="1310" cy="611" rx="5" ry="5" transform="rotate(0 1310 611)"/>
<ellipse cx="1291" cy="840" rx="8" ry="11" transform="rotate(0 1291 840)"/>
<ellipse cx="1330" cy="882" rx="5" ry="5" transform="rotate(0 1330 882)"/>
<ellipse cx="1158" cy="943" rx="5" ry="11" transform="rotate(-30 1158 943)"/>
<ellipse cx="1128" cy="899" rx="4" ry="7" transform="rotate(-20 1128 899)"/>
<ellipse cx="1038" cy="990" rx="18" ry="10" transform="rotate(0 1038 990)"/>
<ellipse cx="1278" cy="943" rx="5" ry="10" transform="rotate(0 1278 943)"/>
<ellipse cx="1224" cy="796" rx="4" ry="7" transform="rotate(30 1224 796)"/>
<ellipse cx="940" cy="938" rx="12" ry="5" transform="rotate(20 940 938)"/>
<ellipse cx="975" cy="958" rx="10" ry="5" transform="rotate(30 975 958)"/>
<ellipse cx="1003" cy="845" rx="3" ry="6" transform="rotate(0 1003 845)"/>
</g>
<g stroke="#4a4e52" stroke-width="1.3" opacity=".8">
<line x1="799.5" y1="219" x2="799.5" y2="1012"/>
<line x1="956.5" y1="219" x2="956.5" y2="1012"/>
<line x1="1113.5" y1="219" x2="1113.5" y2="1012"/>
<line x1="1270.5" y1="219" x2="1270.5" y2="1012"/>
<line x1="1427.5" y1="219" x2="1427.5" y2="1012"/>
<line x1="753" y1="353.5" x2="1546" y2="353.5"/>
<line x1="753" y1="510.5" x2="1546" y2="510.5"/>
<line x1="753" y1="667.5" x2="1546" y2="667.5"/>
<line x1="753" y1="824.5" x2="1546" y2="824.5"/>
<line x1="753" y1="981.5" x2="1546" y2="981.5"/>
</g>
<filter id="nz" x="0" y="0" width="100%" height="100%"><feTurbulence type="fractalNoise" baseFrequency="0.08" numOctaves="2" seed="4"/><feColorMatrix values="0 0 0 0 0.5  0 0 0 0 0.5  0 0 0 0 0.55  0 0 0 1.6 -0.8"/></filter>
<rect x="753" y="219" width="793" height="793" filter="url(#nz)" opacity=".35"/>

<g font-family="Liberation Sans" font-size="17" fill="#101316">
<text x="871" y="239">1</text><text x="1028" y="239">2</text><text x="1185" y="239">3</text><text x="1342" y="239">4</text><text x="1499" y="239">5</text>
<text x="760" y="283">D</text><text x="760" y="440">E</text><text x="760" y="597">F</text><text x="759" y="754">G</text><text x="759" y="911">H</text>
</g>
<text x="874" y="400" font-family="Liberation Sans" font-weight="bold" font-size="20" fill="#464a4e" textLength="263" lengthAdjust="spacingAndGlyphs">Korsun&#8217;-Shevchenkivs&#8217;kyi</text>
<circle cx="960" cy="408" r="5.5" fill="none" stroke="#4a4f53" stroke-width="1.5"/>
<text x="1284" y="738" font-family="Liberation Sans" font-weight="bold" font-size="15" fill="#464a4e" textLength="90" lengthAdjust="spacingAndGlyphs">Horodysche</text>
<circle cx="1287" cy="750" r="3.5" fill="none" stroke="#4a4f53" stroke-width="1.3"/>

</svg>
<!-- /MAP -->

<!-- map markers -->
<svg class="a" style="left:897px;top:598px" width="50" height="54">
  <path d="M3.5 16 V7.5 H13 M37 7.5 H46.5 V16 M3.5 41 V49.5 H13 M37 49.5 H46.5 V41" fill="none" stroke="#f6ee12" stroke-width="3.5"/>
  <polygon points="19,1.5 31,1.5 25,8" fill="#f6ee12"/>
  <path d="M25 12 Q27.5 12 27.5 16 V23 L36 24.5 Q37.5 25.5 36.5 28 L27.5 29 V37 L31 39 V42 L25 41 L19 42 V39 L22.5 37 V29 L13.5 28 Q12.5 25.5 14 24.5 L22.5 23 V16 Q22.5 12 25 12Z" fill="#2454f2" stroke="#cdd8ff" stroke-width="1.1"/>
</svg>
<svg class="a" style="left:1135px;top:598px" width="30" height="34">
  <polygon points="2,17 11,11 11,23" fill="#f8f8f8" stroke="#333" stroke-width=".8"/>
  <polygon points="28,17 19,11 19,23" fill="#f8f8f8" stroke="#333" stroke-width=".8"/>
  <rect x="12" y="2" width="6" height="30" fill="#fafafa" stroke="#777" stroke-width=".8"/>
  <path d="M13.5 14 L16.5 14 L15 20Z" fill="#222"/>
</svg>
<svg class="a" style="left:1363px;top:587px" width="32" height="38">
  <path d="M15 2 Q17.5 2 17.5 6 V14 L27.5 15.5 Q29 16.5 28 19.5 L17.5 20.5 V29 L21.5 31 V34 L15.5 33 L9.5 34 V31 L13 29 V20.5 L3 19.5 Q2 16.5 3.5 15.5 L13 14 V6 Q13 2 15 2Z" fill="#ee1a1a" stroke="#a01010" stroke-width=".6"/>
</svg>
<svg class="a" style="left:1100px;top:663px" width="13" height="13"><ellipse cx="6.5" cy="6.5" rx="4.2" ry="5" fill="#1d3fd8" stroke="#0a1440" stroke-width="1"/></svg>
<svg class="a" style="left:1186px;top:662px" width="15" height="15"><circle cx="7.5" cy="8" r="5" fill="#e0201a" stroke="#3a0a08" stroke-width="1"/><rect x="4" y="2" width="7" height="4" fill="#e0201a" stroke="#3a0a08" stroke-width=".8"/></svg>


<!-- chat -->
<div class="a" style="left:258px;top:717px;width:486px;height:260px;background:#131c27"></div>
<div class="a" style="left:261px;top:719px;width:47px;height:29px;background:#4f5961"></div>
<div class="a" style="left:261px;top:747px;width:47px;height:3px;background:#d9603a"></div>
<div class="t" style="left:270px;top:726px;font-size:15px;color:#eef0f2;transform:scaleX(.9)">Chat</div>
<div class="t" style="left:318px;top:726px;font-size:15px;color:#d0d5d8;transform:scaleX(.99)">Battle</div>
<div class="a" style="left:258px;top:752px;width:486px;height:225px;border:1px solid #3a4753;background:#131c27"></div>
<div class="t" style="left:263px;top:757px;font-size:14.5px;color:#e5de4c;transform:scaleX(.98)"><span style="color:#d7dce0">0:15</span> You don't have permission to post in the game chat for 365d (Time</div>
<div class="t" style="left:275px;top:776px;font-size:14.5px;color:#e5de4c;transform:scaleX(.98)">left: 43d)</div>
<div class="t" style="left:263px;top:795px;font-size:14.5px;color:#e5de4c;transform:scaleX(.98)">Reason:&nbsp; Abuse</div>
<div class="t" style="left:263px;top:814px;font-size:14.5px;color:#e5de4c;transform:scaleX(.98)">Moderator's Comment:</div>
<div class="t" style="left:263px;top:833px;font-size:14.5px;color:#e5de4c;transform:scaleX(.98)">Ненормативная лексика в игровом чате. Оскорбление игроков.</div>
<div class="t" style="left:275px;top:852px;font-size:14.5px;color:#e5de4c;transform:scaleX(.98)">Неоднократные жалобы на оскорбления в личных сообщениях.</div>
<div class="t" style="left:263px;top:871px;font-size:14.5px;color:#e5de4c;transform:scaleX(.98)">Систематическое нарушение правил. Десять и более нарушений.</div>

<div class="btn" style="left:258px;top:982px;width:135px;height:31px"></div>
<div class="t" style="left:307px;top:989px;font-size:17px;color:#a9bde8;transform:scaleX(.965)">Team</div>
<div class="a" style="left:398px;top:982px;width:206px;height:31px;background:#121b26;border:1px solid #56636e;border-bottom:2px solid #a9b3b9"></div>
<div class="btn" style="left:609px;top:982px;width:135px;height:31px"></div>
<div class="t" style="left:659px;top:989px;font-size:17px;color:#dfe3e6;transform:scaleX(.98)">Send</div>

<!-- bottom bar -->
<div class="a" style="left:0;top:1017px;width:1920px;height:49px;background:#2c353f"></div>
<div class="a" style="left:0;top:1066px;width:1920px;height:14px;background:linear-gradient(180deg,#07101a 0%,#0c1b2b 50%,#11253a 100%)"></div>
<div class="btn" style="left:76px;top:1021px;width:144px;height:31px"></div>
<div class="t" style="left:113px;top:1026px;font-size:18px;color:#e2e6e8;transform:scaleX(.985)">Statistics</div>
<div class="btn" style="left:225px;top:1021px;width:144px;height:31px"></div>
<div class="t" style="left:237px;top:1026px;font-size:18px;color:#e2e6e8;transform:scaleX(.952)">Spectator Mode</div>
<div class="btn" style="left:1161px;top:1021px;width:144px;height:31px"></div>
<div class="t" style="left:1178px;top:1026px;font-size:18px;color:#e2e6e8;transform:scaleX(.918)">Personal Tasks</div>
<div class="btn" style="left:1310px;top:1021px;width:144px;height:31px"></div>
<div class="t" style="left:1357px;top:1026px;font-size:18px;color:#e2e6e8;transform:scaleX(.9)">Orders</div>
<div class="a" style="left:1459px;top:1018px;width:187px;height:37px;border:1px solid #8e948c;border-top:2px solid #c8cbbd;background:radial-gradient(ellipse 60% 55% at 50% 45%,rgba(150,156,152,.35),rgba(150,156,152,0) 100%),linear-gradient(180deg,#8a908a 0%,#5d6566 18%,#465053 50%,#283034 80%,#151b1f 100%)"></div>
<div class="t" style="left:1501px;top:1025px;font-size:20.5px;color:#e4e6e4;text-shadow:0 0 .6px #e4e6e4;transform:scaleX(.905)">Cancel (13s)</div>

<div class="t" style="left:4px;top:1067px;font-size:12px;color:#8f9aa5;transform:scaleX(.96)">FPS: 60</div>
<div class="t" style="left:77px;top:1067px;font-size:12px;color:#8f9aa5;transform:scaleX(1.03)">Ping: 74</div>
<div class="t" style="left:148px;top:1067px;font-size:12px;color:#8f9aa5;transform:scaleX(.9)">PL: 0%</div>
<div class="t" style="left:221px;top:1067px;font-size:12px;color:#e6e8ea;transform:scaleX(1.1)">67414d40011b058</div>
<div class="t" style="left:1839px;top:1066px;font-size:12px;color:#e6e8ea;transform:scaleX(.9)">Ultra low quality</div>

<!-- bottom icons -->
<svg class="a" style="left:1690px;top:1028px" width="160" height="32">
  <rect x="5" y="6" width="3" height="3" fill="#e8ecee"/><rect x="5" y="12" width="3" height="3" fill="#e8ecee"/><rect x="5" y="18" width="3" height="3" fill="#e8ecee"/>
  <path d="M11 7.5 H25.5 M11 13.5 H25.5 M11 19.5 H25.5" stroke="#e8ecee" stroke-width="1.5"/>
  <path d="M45 23 Q44 17 49 16 Q46 13 47 10 Q49 7 52 8 M48 23 Q47 16 53 15 Q50 12 51 8 Q53 5 57 6 Q60 8 59 12 Q58 14 57 15 Q63 16 64 23Z" fill="none" stroke="#eef0f2" stroke-width="1.3"/>
  <text x="66" y="27" font-size="10" fill="#e8d060" font-family="Liberation Sans">6</text>
  <ellipse cx="96" cy="13.5" rx="12" ry="8" fill="none" stroke="#eef0f2" stroke-width="1.4"/>
  <path d="M101 20.5 L106 24 L104 18.5" fill="#2c353f" stroke="#eef0f2" stroke-width="1.2"/>
  <rect x="90" y="12.5" width="2" height="2" fill="#eef0f2"/><rect x="95" y="12.5" width="2" height="2" fill="#eef0f2"/><rect x="100" y="12.5" width="2" height="2" fill="#eef0f2"/>
  <rect x="125.5" y="7.5" width="20" height="14" fill="none" stroke="#eef0f2" stroke-width="1.4"/>
  <path d="M126 8 L135.5 15 L145 8" fill="none" stroke="#eef0f2" stroke-width="1.4"/>
</svg>

<!-- control panel -->
<div class="a" style="left:1668px;top:900px;width:77px;height:113px;background:#141d27"></div>
<div class="a" style="left:1673px;top:941px;width:31px;height:31px;background:#56636b"></div>
<div class="a" style="left:1673px;top:977px;width:31px;height:31px;background:#56636b"></div>
<svg class="a" style="left:1668px;top:900px" width="77" height="113">
  <circle cx="20.5" cy="20.5" r="9.5" fill="#f3dc7c" stroke="#b88a2a" stroke-width="1"/>
  <rect x="19.5" y="14" width="2.2" height="8" fill="#d0502a"/><rect x="19.5" y="24" width="2.2" height="2" fill="#d0502a"/>
  <rect x="48.5" y="8" width="17" height="25" rx="8.5" fill="#4a4a4a" stroke="#7a7a7a" stroke-width="1"/>
  <path d="M49 20 V16 Q49 8 57 8 V20Z" fill="#f0f0f0"/>
  <rect x="48.5" y="44" width="17" height="25" rx="8.5" fill="#4a4a4a" stroke="#7a7a7a" stroke-width="1"/>
  <path d="M65 56 V52 Q65 44 57 44 V56Z" fill="#f0f0f0"/>
  <path d="M20.5 47 V68 M10 56.5 H31" stroke="#e8ecee" stroke-width="2"/>
  <polygon points="20.5,43 24.5,48 16.5,48" fill="#e8ecee"/><polygon points="20.5,71 24.5,66 16.5,66" fill="#e8ecee"/>
  <polygon points="6.5,56.5 12,52.5 12,60.5" fill="#e8ecee"/><polygon points="34.5,56.5 29,52.5 29,60.5" fill="#e8ecee"/>
  <path d="M10 84 H34 M10 93 H34 M10 102 H34" stroke="#e8ecee" stroke-width="1.5"/>
  <circle cx="14.5" cy="84" r="3.5" fill="#56636b" stroke="#e8ecee" stroke-width="1.5"/>
  <circle cx="29" cy="93" r="3.5" fill="#56636b" stroke="#e8ecee" stroke-width="1.5"/>
  <circle cx="18" cy="102" r="3.5" fill="#56636b" stroke="#e8ecee" stroke-width="1.5"/>
</svg>

<!-- mouse cursor -->
<svg class="a" style="left:476px;top:992px" width="30" height="34">
  <path d="M5 3 L5 27 L10.5 21 L14 28 L25 20.5 Z" fill="#121418" stroke="#f2f2f2" stroke-width="2" stroke-linejoin="round"/>
</svg>
</body></html>
